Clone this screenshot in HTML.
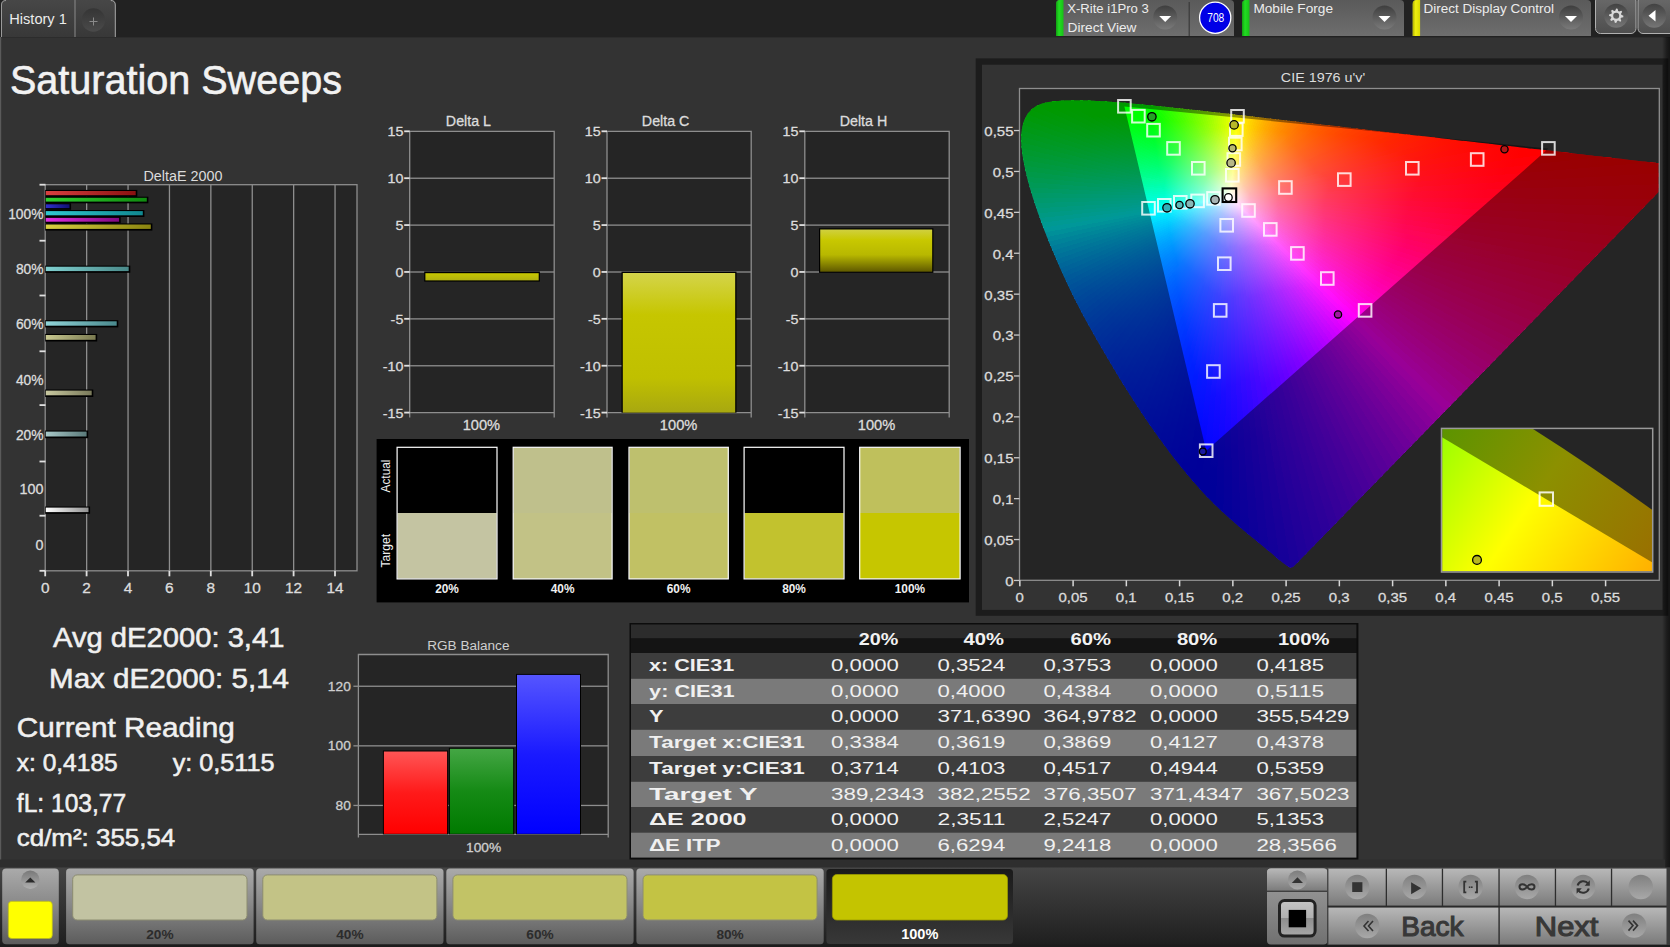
<!DOCTYPE html>
<html><head><meta charset="utf-8"><title>Saturation Sweeps</title>
<style>html,body{margin:0;padding:0;width:1670px;height:947px;overflow:hidden;background:#333;font-family:"Liberation Sans",sans-serif}</style>
</head><body>
<svg width="1670" height="947" viewBox="0 0 1670 947" style="position:absolute;left:0;top:0;font-family:'Liberation Sans',sans-serif">
<rect x="0" y="0" width="1670" height="947" fill="#333333"/>
<rect x="0" y="0" width="1670" height="37" fill="#222222"/>
<defs>
<linearGradient id="tabg" x1="0" y1="0" x2="0" y2="1"><stop offset="0" stop-color="#474747"/><stop offset="1" stop-color="#383838"/></linearGradient>
<linearGradient id="pillg" x1="0" y1="0" x2="0" y2="1"><stop offset="0" stop-color="#5a5a5a"/><stop offset="1" stop-color="#6e6e6e"/></linearGradient>
<linearGradient id="ddg" x1="0" y1="0" x2="0" y2="1"><stop offset="0" stop-color="#3e3e3e"/><stop offset="1" stop-color="#7a7a7a"/></linearGradient>
<linearGradient id="plusg" x1="0" y1="0" x2="0" y2="1"><stop offset="0" stop-color="#353535"/><stop offset="1" stop-color="#4a4a4a"/></linearGradient>
<linearGradient id="grbar" x1="0" y1="0" x2="1" y2="0"><stop offset="0" stop-color="#12a012"/><stop offset=".4" stop-color="#22dd22"/><stop offset="1" stop-color="#18c018"/></linearGradient>
<linearGradient id="yebar" x1="0" y1="0" x2="1" y2="0"><stop offset="0" stop-color="#b0b000"/><stop offset=".4" stop-color="#f0f010"/><stop offset="1" stop-color="#d8d800"/></linearGradient>
<linearGradient id="btng" x1="0" y1="0" x2="0" y2="1"><stop offset="0" stop-color="#6a6a6a"/><stop offset="1" stop-color="#4e4e4e"/></linearGradient>
</defs>
<path d="M1,37 V5 Q1,0 6,0 H75 V37 Z" fill="url(#tabg)"/>
<path d="M75,37 V0 H110.5 Q115.5,0 115.5,5 V37 Z" fill="url(#tabg)"/>
<path d="M1.5,37 V5 Q1.5,0.5 6,0.5" fill="none" stroke="#9a9a9a" stroke-width="1"/>
<line x1="75" y1="0" x2="75" y2="37" stroke="#8a8a8a" stroke-width="1"/>
<path d="M115.3,37 V5 Q115.3,0.5 110.8,0.5" fill="none" stroke="#a8a8a8" stroke-width="1"/>
<text x="9.30" y="23.70" font-size="14.10" textLength="57.51" lengthAdjust="spacingAndGlyphs" fill="#ececec" style="">History 1</text>
<circle cx="93.4" cy="20" r="11.7" fill="url(#plusg)"/>
<path d="M89.5,21.5 H97.5 M93.5,17.5 V25.5" stroke="#8a8a8a" stroke-width="1"/>
<rect x="0" y="37" width="1670" height="1" fill="#2c2c2c"/>
<rect x="0" y="37" width="1.2" height="831" fill="#5a5a5a"/>
<path d="M1056,36 V4 Q1056,0 1060,0 H1230 Q1234,0 1234,4 V36 Z" fill="url(#pillg)"/>
<path d="M1056,36 V4 Q1056,0 1060,0 H1063.5 V36 Z" fill="url(#grbar)"/>
<rect x="1188.6" y="2" width="1.2" height="34" fill="#3a3a3a"/>
<text x="1067.20" y="12.60" font-size="12.21" textLength="81.60" lengthAdjust="spacingAndGlyphs" fill="#ececec" style="">X-Rite i1Pro 3</text>
<text x="1067.60" y="31.70" font-size="12.21" textLength="68.88" lengthAdjust="spacingAndGlyphs" fill="#ececec" style="">Direct View</text>
<circle cx="1165.2" cy="17.4" r="12" fill="url(#ddg)"/>
<path d="M1159.2,15.899999999999999 H1171.2 L1165.2,21.9 Z" fill="#ffffff"/>
<circle cx="1215.2" cy="17.7" r="15.6" fill="#0000e6" stroke="#ffffff" stroke-width="1.3"/>
<text x="1207.20" y="22.00" font-size="11.92" textLength="17.08" lengthAdjust="spacingAndGlyphs" fill="#ffffff" style="">708</text>
<path d="M1242,36 V4 Q1242,0 1246,0 H1400 Q1404,0 1404,4 V36 Z" fill="url(#pillg)"/>
<path d="M1242,36 V4 Q1242,0 1246,0 H1249.5 V36 Z" fill="url(#grbar)"/>
<text x="1253.40" y="12.60" font-size="12.21" textLength="79.62" lengthAdjust="spacingAndGlyphs" fill="#ececec" style="">Mobile Forge</text>
<circle cx="1384.5" cy="17.4" r="12" fill="url(#ddg)"/>
<path d="M1378.5,15.899999999999999 H1390.5 L1384.5,21.9 Z" fill="#ffffff"/>
<path d="M1412.6,36 V4 Q1412.6,0 1416.6,0 H1587 Q1591,0 1591,4 V36 Z" fill="url(#pillg)"/>
<path d="M1412.6,36 V4 Q1412.6,0 1416.6,0 H1420.1 V36 Z" fill="url(#yebar)"/>
<text x="1423.50" y="12.60" font-size="12.21" textLength="130.50" lengthAdjust="spacingAndGlyphs" fill="#ececec" style="">Direct Display Control</text>
<circle cx="1571" cy="17.4" r="12" fill="url(#ddg)"/>
<path d="M1565,15.899999999999999 H1577 L1571,21.9 Z" fill="#ffffff"/>
<rect x="1595.5" y="-4" width="40.5" height="37.5" rx="5" fill="url(#btng)" stroke="#b0b0b0" stroke-width="1"/>
<circle cx="1616.2" cy="15.8" r="12" fill="url(#ddg)" opacity=".9"/>
<path d="M1623.40,15.80 L1623.26,17.20 L1621.00,17.79 L1620.52,18.69 L1621.29,20.89 L1620.20,21.79 L1618.19,20.60 L1617.21,20.90 L1616.20,23.00 L1614.80,22.86 L1614.21,20.60 L1613.31,20.12 L1611.11,20.89 L1610.21,19.80 L1611.40,17.79 L1611.10,16.81 L1609.00,15.80 L1609.14,14.40 L1611.40,13.81 L1611.88,12.91 L1611.11,10.71 L1612.20,9.81 L1614.21,11.00 L1615.19,10.70 L1616.20,8.60 L1617.60,8.74 L1618.19,11.00 L1619.09,11.48 L1621.29,10.71 L1622.19,11.80 L1621.00,13.81 L1621.30,14.79 Z M1619.2,15.8 A3,3 0 1 0 1613.2,15.8 A3,3 0 1 0 1619.2,15.8 Z" fill="#d8d8d8" fill-rule="evenodd"/>
<rect x="1638" y="-4" width="40" height="37.5" rx="5" fill="url(#btng)" stroke="#b0b0b0" stroke-width="1"/>
<circle cx="1654.2" cy="15.8" r="12" fill="url(#ddg)" opacity=".9"/>
<path d="M1648.5,15.8 L1655.5,10 V21.6 Z" fill="#ffffff"/>
<text x="9.90" y="93.80" font-size="40.70" textLength="332.07" lengthAdjust="spacingAndGlyphs" fill="#f2f2f2" style="" stroke="#f2f2f2" stroke-width="0.6">Saturation Sweeps</text>
<rect x="45.2" y="184.7" width="311.8" height="386.09999999999997" fill="#252525"/>
<rect x="86.00" y="184.7" width="1.3" height="386.09999999999997" fill="#8e8e8e"/>
<rect x="127.40" y="184.7" width="1.3" height="386.09999999999997" fill="#8e8e8e"/>
<rect x="168.80" y="184.7" width="1.3" height="386.09999999999997" fill="#8e8e8e"/>
<rect x="210.20" y="184.7" width="1.3" height="386.09999999999997" fill="#8e8e8e"/>
<rect x="251.60" y="184.7" width="1.3" height="386.09999999999997" fill="#8e8e8e"/>
<rect x="293.00" y="184.7" width="1.3" height="386.09999999999997" fill="#8e8e8e"/>
<rect x="334.40" y="184.7" width="1.3" height="386.09999999999997" fill="#8e8e8e"/>
<rect x="45.20" y="184.70" width="311.80" height="386.10" fill="none" stroke="#8e8e8e" stroke-width="1.3"/>
<rect x="39.5" y="183.80" width="6" height="1.8" fill="#e0e0e0"/>
<rect x="39.5" y="239.80" width="6" height="1.8" fill="#e0e0e0"/>
<rect x="39.5" y="294.60" width="6" height="1.8" fill="#e0e0e0"/>
<rect x="39.5" y="350.40" width="6" height="1.8" fill="#e0e0e0"/>
<rect x="39.5" y="404.20" width="6" height="1.8" fill="#e0e0e0"/>
<rect x="39.5" y="460.60" width="6" height="1.8" fill="#e0e0e0"/>
<rect x="39.5" y="514.80" width="6" height="1.8" fill="#e0e0e0"/>
<rect x="39.5" y="569.90" width="6" height="1.8" fill="#e0e0e0"/>
<rect x="44.30" y="570.8" width="1.8" height="5.5" fill="#e0e0e0"/>
<rect x="85.70" y="570.8" width="1.8" height="5.5" fill="#e0e0e0"/>
<rect x="127.10" y="570.8" width="1.8" height="5.5" fill="#e0e0e0"/>
<rect x="168.50" y="570.8" width="1.8" height="5.5" fill="#e0e0e0"/>
<rect x="209.90" y="570.8" width="1.8" height="5.5" fill="#e0e0e0"/>
<rect x="251.30" y="570.8" width="1.8" height="5.5" fill="#e0e0e0"/>
<rect x="292.70" y="570.8" width="1.8" height="5.5" fill="#e0e0e0"/>
<rect x="334.10" y="570.8" width="1.8" height="5.5" fill="#e0e0e0"/>
<text x="143.50" y="180.50" font-size="13.95" textLength="78.99" lengthAdjust="spacingAndGlyphs" fill="#dcdcdc" style="">DeltaE 2000</text>
<text x="8.15" y="219.00" font-size="14.53" textLength="35.32" lengthAdjust="spacingAndGlyphs" fill="#dcdcdc" style="" stroke="#dcdcdc" stroke-width="0.3">100%</text>
<text x="15.88" y="273.50" font-size="14.53" textLength="27.64" lengthAdjust="spacingAndGlyphs" fill="#dcdcdc" style="" stroke="#dcdcdc" stroke-width="0.3">80%</text>
<text x="15.88" y="329.30" font-size="14.53" textLength="27.64" lengthAdjust="spacingAndGlyphs" fill="#dcdcdc" style="" stroke="#dcdcdc" stroke-width="0.3">60%</text>
<text x="15.88" y="384.50" font-size="14.53" textLength="27.64" lengthAdjust="spacingAndGlyphs" fill="#dcdcdc" style="" stroke="#dcdcdc" stroke-width="0.3">40%</text>
<text x="15.88" y="439.60" font-size="14.53" textLength="27.64" lengthAdjust="spacingAndGlyphs" fill="#dcdcdc" style="" stroke="#dcdcdc" stroke-width="0.3">20%</text>
<text x="19.47" y="493.70" font-size="14.53" textLength="24.01" lengthAdjust="spacingAndGlyphs" fill="#dcdcdc" style="" stroke="#dcdcdc" stroke-width="0.3">100</text>
<text x="35.51" y="549.80" font-size="14.53" textLength="8.00" lengthAdjust="spacingAndGlyphs" fill="#dcdcdc" style="" stroke="#dcdcdc" stroke-width="0.3">0</text>
<text x="40.92" y="593.20" font-size="14.53" textLength="8.57" lengthAdjust="spacingAndGlyphs" fill="#dcdcdc" style="" stroke="#dcdcdc" stroke-width="0.3">0</text>
<text x="82.32" y="593.20" font-size="14.53" textLength="8.57" lengthAdjust="spacingAndGlyphs" fill="#dcdcdc" style="" stroke="#dcdcdc" stroke-width="0.3">2</text>
<text x="123.72" y="593.20" font-size="14.53" textLength="8.57" lengthAdjust="spacingAndGlyphs" fill="#dcdcdc" style="" stroke="#dcdcdc" stroke-width="0.3">4</text>
<text x="165.12" y="593.20" font-size="14.53" textLength="8.57" lengthAdjust="spacingAndGlyphs" fill="#dcdcdc" style="" stroke="#dcdcdc" stroke-width="0.3">6</text>
<text x="206.52" y="593.20" font-size="14.53" textLength="8.57" lengthAdjust="spacingAndGlyphs" fill="#dcdcdc" style="" stroke="#dcdcdc" stroke-width="0.3">8</text>
<text x="243.65" y="593.20" font-size="14.53" textLength="17.14" lengthAdjust="spacingAndGlyphs" fill="#dcdcdc" style="" stroke="#dcdcdc" stroke-width="0.3">10</text>
<text x="285.05" y="593.20" font-size="14.53" textLength="17.14" lengthAdjust="spacingAndGlyphs" fill="#dcdcdc" style="" stroke="#dcdcdc" stroke-width="0.3">12</text>
<text x="326.45" y="593.20" font-size="14.53" textLength="17.14" lengthAdjust="spacingAndGlyphs" fill="#dcdcdc" style="" stroke="#dcdcdc" stroke-width="0.3">14</text>
<defs><linearGradient id="hb1907" x1="0" y1="0" x2="1" y2="0"><stop offset="0" stop-color="#d84040"/><stop offset="1" stop-color="#8a1010"/></linearGradient></defs>
<rect x="45.20" y="189.90" width="92.10" height="7.00" fill="#000"/>
<rect x="45.80" y="191.00" width="89.90" height="4.20" fill="url(#hb1907)"/>
<defs><linearGradient id="hb1975" x1="0" y1="0" x2="1" y2="0"><stop offset="0" stop-color="#30d030"/><stop offset="1" stop-color="#108a10"/></linearGradient></defs>
<rect x="45.20" y="196.70" width="103.20" height="6.60" fill="#000"/>
<rect x="45.80" y="197.80" width="101.00" height="3.80" fill="url(#hb1975)"/>
<defs><linearGradient id="hb2040" x1="0" y1="0" x2="1" y2="0"><stop offset="0" stop-color="#3030d0"/><stop offset="1" stop-color="#101070"/></linearGradient></defs>
<rect x="45.20" y="203.20" width="25.90" height="6.60" fill="#000"/>
<rect x="45.80" y="204.30" width="23.70" height="3.80" fill="url(#hb2040)"/>
<defs><linearGradient id="hb2108" x1="0" y1="0" x2="1" y2="0"><stop offset="0" stop-color="#30c8d0"/><stop offset="1" stop-color="#108890"/></linearGradient></defs>
<rect x="45.20" y="210.00" width="99.20" height="7.00" fill="#000"/>
<rect x="45.80" y="211.10" width="97.00" height="4.20" fill="url(#hb2108)"/>
<defs><linearGradient id="hb2176" x1="0" y1="0" x2="1" y2="0"><stop offset="0" stop-color="#e030e0"/><stop offset="1" stop-color="#800a80"/></linearGradient></defs>
<rect x="45.20" y="216.80" width="75.50" height="6.60" fill="#000"/>
<rect x="45.80" y="217.90" width="73.30" height="3.80" fill="url(#hb2176)"/>
<defs><linearGradient id="hb2242" x1="0" y1="0" x2="1" y2="0"><stop offset="0" stop-color="#d8d040"/><stop offset="1" stop-color="#8a8410"/></linearGradient></defs>
<rect x="45.20" y="223.40" width="107.20" height="7.20" fill="#000"/>
<rect x="45.80" y="224.50" width="105.00" height="4.40" fill="url(#hb2242)"/>
<defs><linearGradient id="hb2664" x1="0" y1="0" x2="1" y2="0"><stop offset="0" stop-color="#80d0d0"/><stop offset="1" stop-color="#4a8a8a"/></linearGradient></defs>
<rect x="45.20" y="265.60" width="85.10" height="7.20" fill="#000"/>
<rect x="45.80" y="266.70" width="82.90" height="4.40" fill="url(#hb2664)"/>
<defs><linearGradient id="hb3210" x1="0" y1="0" x2="1" y2="0"><stop offset="0" stop-color="#90d4d8"/><stop offset="1" stop-color="#4a8a8e"/></linearGradient></defs>
<rect x="45.20" y="320.20" width="73.10" height="7.20" fill="#000"/>
<rect x="45.80" y="321.30" width="70.90" height="4.40" fill="url(#hb3210)"/>
<defs><linearGradient id="hb3347" x1="0" y1="0" x2="1" y2="0"><stop offset="0" stop-color="#c8c890"/><stop offset="1" stop-color="#7a7a50"/></linearGradient></defs>
<rect x="45.20" y="333.90" width="52.00" height="7.60" fill="#000"/>
<rect x="45.80" y="335.00" width="49.80" height="4.80" fill="url(#hb3347)"/>
<defs><linearGradient id="hb3903" x1="0" y1="0" x2="1" y2="0"><stop offset="0" stop-color="#c8c8a0"/><stop offset="1" stop-color="#7a7a5a"/></linearGradient></defs>
<rect x="45.20" y="389.50" width="48.10" height="7.50" fill="#000"/>
<rect x="45.80" y="390.60" width="45.90" height="4.70" fill="url(#hb3903)"/>
<defs><linearGradient id="hb4313" x1="0" y1="0" x2="1" y2="0"><stop offset="0" stop-color="#a8c8c8"/><stop offset="1" stop-color="#5a7a7a"/></linearGradient></defs>
<rect x="45.20" y="430.50" width="43.00" height="7.70" fill="#000"/>
<rect x="45.80" y="431.60" width="40.80" height="4.90" fill="url(#hb4313)"/>
<defs><linearGradient id="hb5073" x1="0" y1="0" x2="1" y2="0"><stop offset="0" stop-color="#ffffff"/><stop offset="1" stop-color="#909090"/></linearGradient></defs>
<rect x="45.20" y="506.50" width="44.90" height="7.30" fill="#000"/>
<rect x="45.80" y="507.60" width="42.70" height="4.50" fill="url(#hb5073)"/>
<text x="53.00" y="647.30" font-size="28.20" textLength="231.44" lengthAdjust="spacingAndGlyphs" fill="#f0f0f0" style="" stroke="#f0f0f0" stroke-width="0.55">Avg dE2000: 3,41</text>
<text x="49.00" y="688.20" font-size="28.20" textLength="240.06" lengthAdjust="spacingAndGlyphs" fill="#f0f0f0" style="" stroke="#f0f0f0" stroke-width="0.55">Max dE2000: 5,14</text>
<text x="16.80" y="736.50" font-size="28.34" textLength="217.93" lengthAdjust="spacingAndGlyphs" fill="#f0f0f0" style="" stroke="#f0f0f0" stroke-width="0.55">Current Reading</text>
<text x="16.80" y="771.00" font-size="23.84" textLength="100.88" lengthAdjust="spacingAndGlyphs" fill="#f0f0f0" style="" stroke="#f0f0f0" stroke-width="0.55">x: 0,4185</text>
<text x="172.70" y="771.00" font-size="23.84" textLength="101.90" lengthAdjust="spacingAndGlyphs" fill="#f0f0f0" style="" stroke="#f0f0f0" stroke-width="0.55">y: 0,5115</text>
<text x="16.80" y="812.30" font-size="25.00" textLength="109.36" lengthAdjust="spacingAndGlyphs" fill="#f0f0f0" style="" stroke="#f0f0f0" stroke-width="0.55">fL: 103,77</text>
<text x="16.80" y="846.00" font-size="24.13" textLength="158.48" lengthAdjust="spacingAndGlyphs" fill="#f0f0f0" style="" stroke="#f0f0f0" stroke-width="0.55">cd/m²: 355,54</text>
<rect x="358.4" y="654.5" width="249.80" height="179.90" fill="#252525"/>
<rect x="358.4" y="685.60" width="249.80" height="1.3" fill="#8e8e8e"/>
<rect x="358.4" y="745.20" width="249.80" height="1.3" fill="#8e8e8e"/>
<rect x="358.4" y="804.80" width="249.80" height="1.3" fill="#8e8e8e"/>
<path d="M358.4,837.4 V654.5 H608.2 V837.4 M358.4,834.4 H608.2" fill="none" stroke="#8e8e8e" stroke-width="1.3"/>
<rect x="353.4" y="685.60" width="5" height="1.3" fill="#8e8e8e"/>
<rect x="353.4" y="745.20" width="5" height="1.3" fill="#8e8e8e"/>
<rect x="353.4" y="804.80" width="5" height="1.3" fill="#8e8e8e"/>
<text x="427.20" y="649.50" font-size="13.08" textLength="82.28" lengthAdjust="spacingAndGlyphs" fill="#cfcfcf" style="">RGB Balance</text>
<text x="327.86" y="690.70" font-size="13.08" textLength="22.92" lengthAdjust="spacingAndGlyphs" fill="#cfcfcf" style="" stroke="#cfcfcf" stroke-width="0.3">120</text>
<text x="327.86" y="750.30" font-size="13.08" textLength="22.92" lengthAdjust="spacingAndGlyphs" fill="#cfcfcf" style="" stroke="#cfcfcf" stroke-width="0.3">100</text>
<text x="335.55" y="809.90" font-size="13.08" textLength="15.28" lengthAdjust="spacingAndGlyphs" fill="#cfcfcf" style="" stroke="#cfcfcf" stroke-width="0.3">80</text>
<text x="466.02" y="851.50" font-size="13.08" textLength="35.13" lengthAdjust="spacingAndGlyphs" fill="#cfcfcf" style="" stroke="#cfcfcf" stroke-width="0.3">100%</text>
<defs>
<linearGradient id="rbr" x1="0" y1="0" x2="0" y2="1"><stop offset="0" stop-color="#ff5555"/><stop offset=".5" stop-color="#ff1a1a"/><stop offset="1" stop-color="#ff0000"/></linearGradient>
<linearGradient id="rbg" x1="0" y1="0" x2="0" y2="1"><stop offset="0" stop-color="#44a644"/><stop offset=".5" stop-color="#158a15"/><stop offset="1" stop-color="#007a00"/></linearGradient>
<linearGradient id="rbb" x1="0" y1="0" x2="0" y2="1"><stop offset="0" stop-color="#5555ff"/><stop offset=".5" stop-color="#1a1aff"/><stop offset="1" stop-color="#0000ff"/></linearGradient>
</defs>
<rect x="382.90" y="750.50" width="65.20" height="83.90" fill="#000"/>
<rect x="383.90" y="751.50" width="63.20" height="82.30" fill="url(#rbr)"/>
<rect x="448.90" y="747.80" width="65.30" height="86.60" fill="#000"/>
<rect x="449.90" y="748.80" width="63.30" height="85.00" fill="url(#rbg)"/>
<rect x="516.00" y="673.90" width="65.00" height="160.50" fill="#000"/>
<rect x="517.00" y="674.90" width="63.00" height="158.90" fill="url(#rbb)"/>
<defs>
<linearGradient id="dlg" x1="0" y1="0" x2="0" y2="1"><stop offset="0" stop-color="#d4d44a"/><stop offset=".3" stop-color="#c6c600"/><stop offset=".75" stop-color="#c0c000"/><stop offset="1" stop-color="#a8a810"/></linearGradient>
<linearGradient id="dhg" x1="0" y1="0" x2="0" y2="1"><stop offset="0" stop-color="#d0d040"/><stop offset=".25" stop-color="#c8c800"/><stop offset=".6" stop-color="#b8b800"/><stop offset="1" stop-color="#605a00"/></linearGradient>
<linearGradient id="dLg" x1="0" y1="0" x2="0" y2="1"><stop offset="0" stop-color="#c8c800"/><stop offset="1" stop-color="#b0b010"/></linearGradient>
</defs>
<rect x="409.7" y="131.3" width="144.50" height="281.30" fill="#252525"/>
<rect x="409.7" y="177.58" width="144.50" height="1.3" fill="#8e8e8e"/>
<rect x="409.7" y="224.47" width="144.50" height="1.3" fill="#8e8e8e"/>
<rect x="409.7" y="271.35" width="144.50" height="1.3" fill="#8e8e8e"/>
<rect x="409.7" y="318.23" width="144.50" height="1.3" fill="#8e8e8e"/>
<rect x="409.7" y="365.12" width="144.50" height="1.3" fill="#8e8e8e"/>
<path d="M409.7,417.6 V131.3 H554.2 V417.6 M409.7,412.6 H554.2" fill="none" stroke="#8e8e8e" stroke-width="1.3"/>
<rect x="404.20" y="130.40" width="5.5" height="1.8" fill="#e0e0e0"/>
<text x="387.48" y="136.20" font-size="13.66" textLength="15.96" lengthAdjust="spacingAndGlyphs" fill="#dcdcdc" style="" stroke="#dcdcdc" stroke-width="0.3">15</text>
<rect x="404.20" y="177.28" width="5.5" height="1.8" fill="#e0e0e0"/>
<text x="387.48" y="183.08" font-size="13.66" textLength="15.96" lengthAdjust="spacingAndGlyphs" fill="#dcdcdc" style="" stroke="#dcdcdc" stroke-width="0.3">10</text>
<rect x="404.20" y="224.17" width="5.5" height="1.8" fill="#e0e0e0"/>
<text x="395.44" y="229.97" font-size="13.66" textLength="7.98" lengthAdjust="spacingAndGlyphs" fill="#dcdcdc" style="" stroke="#dcdcdc" stroke-width="0.3">5</text>
<rect x="404.20" y="271.05" width="5.5" height="1.8" fill="#e0e0e0"/>
<text x="395.44" y="276.85" font-size="13.66" textLength="7.98" lengthAdjust="spacingAndGlyphs" fill="#dcdcdc" style="" stroke="#dcdcdc" stroke-width="0.3">0</text>
<rect x="404.20" y="317.93" width="5.5" height="1.8" fill="#e0e0e0"/>
<text x="390.63" y="323.73" font-size="13.66" textLength="12.76" lengthAdjust="spacingAndGlyphs" fill="#dcdcdc" style="" stroke="#dcdcdc" stroke-width="0.3">-5</text>
<rect x="404.20" y="364.82" width="5.5" height="1.8" fill="#e0e0e0"/>
<text x="382.67" y="370.62" font-size="13.66" textLength="20.74" lengthAdjust="spacingAndGlyphs" fill="#dcdcdc" style="" stroke="#dcdcdc" stroke-width="0.3">-10</text>
<rect x="404.20" y="411.70" width="5.5" height="1.8" fill="#e0e0e0"/>
<text x="382.67" y="417.50" font-size="13.66" textLength="20.74" lengthAdjust="spacingAndGlyphs" fill="#dcdcdc" style="" stroke="#dcdcdc" stroke-width="0.3">-15</text>
<text x="445.87" y="126.00" font-size="14.24" textLength="45.13" lengthAdjust="spacingAndGlyphs" fill="#dcdcdc" style="" stroke="#dcdcdc" stroke-width="0.3">Delta L</text>
<text x="462.70" y="429.80" font-size="13.95" textLength="37.47" lengthAdjust="spacingAndGlyphs" fill="#dcdcdc" style="" stroke="#dcdcdc" stroke-width="0.3">100%</text>
<rect x="607.0" y="131.3" width="144.20" height="281.30" fill="#252525"/>
<rect x="607.0" y="177.58" width="144.20" height="1.3" fill="#8e8e8e"/>
<rect x="607.0" y="224.47" width="144.20" height="1.3" fill="#8e8e8e"/>
<rect x="607.0" y="271.35" width="144.20" height="1.3" fill="#8e8e8e"/>
<rect x="607.0" y="318.23" width="144.20" height="1.3" fill="#8e8e8e"/>
<rect x="607.0" y="365.12" width="144.20" height="1.3" fill="#8e8e8e"/>
<path d="M607.0,417.6 V131.3 H751.2 V417.6 M607.0,412.6 H751.2" fill="none" stroke="#8e8e8e" stroke-width="1.3"/>
<rect x="601.50" y="130.40" width="5.5" height="1.8" fill="#e0e0e0"/>
<text x="584.78" y="136.20" font-size="13.66" textLength="15.96" lengthAdjust="spacingAndGlyphs" fill="#dcdcdc" style="" stroke="#dcdcdc" stroke-width="0.3">15</text>
<rect x="601.50" y="177.28" width="5.5" height="1.8" fill="#e0e0e0"/>
<text x="584.78" y="183.08" font-size="13.66" textLength="15.96" lengthAdjust="spacingAndGlyphs" fill="#dcdcdc" style="" stroke="#dcdcdc" stroke-width="0.3">10</text>
<rect x="601.50" y="224.17" width="5.5" height="1.8" fill="#e0e0e0"/>
<text x="592.74" y="229.97" font-size="13.66" textLength="7.98" lengthAdjust="spacingAndGlyphs" fill="#dcdcdc" style="" stroke="#dcdcdc" stroke-width="0.3">5</text>
<rect x="601.50" y="271.05" width="5.5" height="1.8" fill="#e0e0e0"/>
<text x="592.74" y="276.85" font-size="13.66" textLength="7.98" lengthAdjust="spacingAndGlyphs" fill="#dcdcdc" style="" stroke="#dcdcdc" stroke-width="0.3">0</text>
<rect x="601.50" y="317.93" width="5.5" height="1.8" fill="#e0e0e0"/>
<text x="587.93" y="323.73" font-size="13.66" textLength="12.76" lengthAdjust="spacingAndGlyphs" fill="#dcdcdc" style="" stroke="#dcdcdc" stroke-width="0.3">-5</text>
<rect x="601.50" y="364.82" width="5.5" height="1.8" fill="#e0e0e0"/>
<text x="579.97" y="370.62" font-size="13.66" textLength="20.74" lengthAdjust="spacingAndGlyphs" fill="#dcdcdc" style="" stroke="#dcdcdc" stroke-width="0.3">-10</text>
<rect x="601.50" y="411.70" width="5.5" height="1.8" fill="#e0e0e0"/>
<text x="579.97" y="417.50" font-size="13.66" textLength="20.74" lengthAdjust="spacingAndGlyphs" fill="#dcdcdc" style="" stroke="#dcdcdc" stroke-width="0.3">-15</text>
<text x="641.85" y="126.00" font-size="14.24" textLength="47.50" lengthAdjust="spacingAndGlyphs" fill="#dcdcdc" style="" stroke="#dcdcdc" stroke-width="0.3">Delta C</text>
<text x="659.85" y="429.80" font-size="13.95" textLength="37.47" lengthAdjust="spacingAndGlyphs" fill="#dcdcdc" style="" stroke="#dcdcdc" stroke-width="0.3">100%</text>
<rect x="804.8" y="131.3" width="144.40" height="281.30" fill="#252525"/>
<rect x="804.8" y="177.58" width="144.40" height="1.3" fill="#8e8e8e"/>
<rect x="804.8" y="224.47" width="144.40" height="1.3" fill="#8e8e8e"/>
<rect x="804.8" y="271.35" width="144.40" height="1.3" fill="#8e8e8e"/>
<rect x="804.8" y="318.23" width="144.40" height="1.3" fill="#8e8e8e"/>
<rect x="804.8" y="365.12" width="144.40" height="1.3" fill="#8e8e8e"/>
<path d="M804.8,417.6 V131.3 H949.2 V417.6 M804.8,412.6 H949.2" fill="none" stroke="#8e8e8e" stroke-width="1.3"/>
<rect x="799.30" y="130.40" width="5.5" height="1.8" fill="#e0e0e0"/>
<text x="782.58" y="136.20" font-size="13.66" textLength="15.96" lengthAdjust="spacingAndGlyphs" fill="#dcdcdc" style="" stroke="#dcdcdc" stroke-width="0.3">15</text>
<rect x="799.30" y="177.28" width="5.5" height="1.8" fill="#e0e0e0"/>
<text x="782.58" y="183.08" font-size="13.66" textLength="15.96" lengthAdjust="spacingAndGlyphs" fill="#dcdcdc" style="" stroke="#dcdcdc" stroke-width="0.3">10</text>
<rect x="799.30" y="224.17" width="5.5" height="1.8" fill="#e0e0e0"/>
<text x="790.54" y="229.97" font-size="13.66" textLength="7.98" lengthAdjust="spacingAndGlyphs" fill="#dcdcdc" style="" stroke="#dcdcdc" stroke-width="0.3">5</text>
<rect x="799.30" y="271.05" width="5.5" height="1.8" fill="#e0e0e0"/>
<text x="790.54" y="276.85" font-size="13.66" textLength="7.98" lengthAdjust="spacingAndGlyphs" fill="#dcdcdc" style="" stroke="#dcdcdc" stroke-width="0.3">0</text>
<rect x="799.30" y="317.93" width="5.5" height="1.8" fill="#e0e0e0"/>
<text x="785.73" y="323.73" font-size="13.66" textLength="12.76" lengthAdjust="spacingAndGlyphs" fill="#dcdcdc" style="" stroke="#dcdcdc" stroke-width="0.3">-5</text>
<rect x="799.30" y="364.82" width="5.5" height="1.8" fill="#e0e0e0"/>
<text x="777.77" y="370.62" font-size="13.66" textLength="20.74" lengthAdjust="spacingAndGlyphs" fill="#dcdcdc" style="" stroke="#dcdcdc" stroke-width="0.3">-10</text>
<rect x="799.30" y="411.70" width="5.5" height="1.8" fill="#e0e0e0"/>
<text x="777.77" y="417.50" font-size="13.66" textLength="20.74" lengthAdjust="spacingAndGlyphs" fill="#dcdcdc" style="" stroke="#dcdcdc" stroke-width="0.3">-15</text>
<text x="839.75" y="126.00" font-size="14.24" textLength="47.50" lengthAdjust="spacingAndGlyphs" fill="#dcdcdc" style="" stroke="#dcdcdc" stroke-width="0.3">Delta H</text>
<text x="857.75" y="429.80" font-size="13.95" textLength="37.47" lengthAdjust="spacingAndGlyphs" fill="#dcdcdc" style="" stroke="#dcdcdc" stroke-width="0.3">100%</text>
<rect x="424.2" y="271.5" width="115.7" height="10.1" fill="#000"/>
<rect x="425.4" y="273.2" width="113.3" height="7.2" fill="url(#dLg)"/>
<rect x="621.5" y="271.7" width="115" height="141" fill="#000"/>
<rect x="622.8" y="273.0" width="112.4" height="139.6" fill="url(#dlg)"/>
<rect x="819.0" y="228.3" width="114.4" height="44.6" fill="#000"/>
<rect x="820.2" y="229.5" width="112.0" height="42.2" fill="url(#dhg)"/>
<rect x="376.6" y="439" width="592.4" height="163.4" fill="#000"/>
<rect x="397.40" y="447.6" width="99.30" height="131" fill="#000000"/>
<rect x="397.40" y="513" width="99.30" height="65.6" fill="#c4c4a2"/>
<rect x="397.10" y="447.3" width="99.90" height="131.6" fill="none" stroke="#ffffff" stroke-width="1.2"/>
<text x="435.17" y="593.40" font-size="12.50" textLength="23.77" lengthAdjust="spacingAndGlyphs" fill="#f0f0f0" style="font-weight:bold;">20%</text>
<rect x="513.50" y="447.6" width="98.30" height="131" fill="#bfc08c"/>
<rect x="513.50" y="513" width="98.30" height="65.6" fill="#c2c286"/>
<rect x="513.20" y="447.3" width="98.90" height="131.6" fill="none" stroke="#ffffff" stroke-width="1.2"/>
<text x="550.77" y="593.40" font-size="12.50" textLength="23.77" lengthAdjust="spacingAndGlyphs" fill="#f0f0f0" style="font-weight:bold;">40%</text>
<rect x="629.30" y="447.6" width="98.70" height="131" fill="#bec06e"/>
<rect x="629.30" y="513" width="98.70" height="65.6" fill="#c1c164"/>
<rect x="629.00" y="447.3" width="99.30" height="131.6" fill="none" stroke="#ffffff" stroke-width="1.2"/>
<text x="666.77" y="593.40" font-size="12.50" textLength="23.77" lengthAdjust="spacingAndGlyphs" fill="#f0f0f0" style="font-weight:bold;">60%</text>
<rect x="744.40" y="447.6" width="99.30" height="131" fill="#000000"/>
<rect x="744.40" y="513" width="99.30" height="65.6" fill="#c2c22e"/>
<rect x="744.10" y="447.3" width="99.90" height="131.6" fill="none" stroke="#ffffff" stroke-width="1.2"/>
<text x="782.17" y="593.40" font-size="12.50" textLength="23.77" lengthAdjust="spacingAndGlyphs" fill="#f0f0f0" style="font-weight:bold;">80%</text>
<rect x="860.00" y="447.6" width="99.80" height="131" fill="#bfc05c"/>
<rect x="860.00" y="513" width="99.80" height="65.6" fill="#c6c600"/>
<rect x="859.70" y="447.3" width="100.40" height="131.6" fill="none" stroke="#ffffff" stroke-width="1.2"/>
<text x="894.70" y="593.40" font-size="12.50" textLength="30.37" lengthAdjust="spacingAndGlyphs" fill="#f0f0f0" style="font-weight:bold;">100%</text>
<g transform="translate(390,476) rotate(-90)">
<text x="-16.50" y="0.00" font-size="13.08" textLength="32.99" lengthAdjust="spacingAndGlyphs" fill="#f0f0f0" style="">Actual</text>
</g>
<g transform="translate(390,550.5) rotate(-90)">
<text x="-17.00" y="0.00" font-size="13.08" textLength="33.49" lengthAdjust="spacingAndGlyphs" fill="#f0f0f0" style="">Target</text>
</g>
<rect x="629.5" y="623" width="728.9" height="237" fill="#0c0c0c"/>
<rect x="631.0" y="624.5" width="725.4" height="14" fill="#2c2c2c"/>
<rect x="631.0" y="638.5" width="725.4" height="14.5" fill="#141414"/>
<rect x="631.0" y="653.0" width="725.4" height="25.6" fill="#3d3d3d"/>
<rect x="631.0" y="678.6" width="725.4" height="25.4" fill="#7a7a7a"/>
<rect x="631.0" y="704.0" width="725.4" height="25.6" fill="#3d3d3d"/>
<rect x="631.0" y="729.6" width="725.4" height="26.4" fill="#7a7a7a"/>
<rect x="631.0" y="756.0" width="725.4" height="25.6" fill="#3d3d3d"/>
<rect x="631.0" y="781.6" width="725.4" height="25.4" fill="#7a7a7a"/>
<rect x="631.0" y="807.0" width="725.4" height="25.5" fill="#3d3d3d"/>
<rect x="631.0" y="832.5" width="725.4" height="25.1" fill="#7a7a7a"/>
<text x="858.70" y="644.60" font-size="15.70" textLength="39.53" lengthAdjust="spacingAndGlyphs" fill="#f2f2f2" style="font-weight:bold;">20%</text>
<text x="963.60" y="644.60" font-size="15.70" textLength="40.43" lengthAdjust="spacingAndGlyphs" fill="#f2f2f2" style="font-weight:bold;">40%</text>
<text x="1070.40" y="644.60" font-size="15.70" textLength="40.53" lengthAdjust="spacingAndGlyphs" fill="#f2f2f2" style="font-weight:bold;">60%</text>
<text x="1176.90" y="644.60" font-size="15.70" textLength="40.43" lengthAdjust="spacingAndGlyphs" fill="#f2f2f2" style="font-weight:bold;">80%</text>
<text x="1277.90" y="644.60" font-size="15.70" textLength="51.65" lengthAdjust="spacingAndGlyphs" fill="#f2f2f2" style="font-weight:bold;">100%</text>
<text x="649.10" y="671.40" font-size="16.42" textLength="85.03" lengthAdjust="spacingAndGlyphs" fill="#f0f0f0" style="font-weight:bold;">x: CIE31</text>
<text x="831.10" y="671.40" font-size="16.42" textLength="67.77" lengthAdjust="spacingAndGlyphs" fill="#f0f0f0" style="">0,0000</text>
<text x="937.50" y="671.40" font-size="16.42" textLength="67.77" lengthAdjust="spacingAndGlyphs" fill="#f0f0f0" style="">0,3524</text>
<text x="1043.50" y="671.40" font-size="16.42" textLength="67.77" lengthAdjust="spacingAndGlyphs" fill="#f0f0f0" style="">0,3753</text>
<text x="1150.00" y="671.40" font-size="16.42" textLength="67.77" lengthAdjust="spacingAndGlyphs" fill="#f0f0f0" style="">0,0000</text>
<text x="1256.40" y="671.40" font-size="16.42" textLength="67.77" lengthAdjust="spacingAndGlyphs" fill="#f0f0f0" style="">0,4185</text>
<text x="649.10" y="696.90" font-size="16.42" textLength="85.53" lengthAdjust="spacingAndGlyphs" fill="#f0f0f0" style="font-weight:bold;">y: CIE31</text>
<text x="831.10" y="696.90" font-size="16.42" textLength="67.77" lengthAdjust="spacingAndGlyphs" fill="#f0f0f0" style="">0,0000</text>
<text x="937.50" y="696.90" font-size="16.42" textLength="67.77" lengthAdjust="spacingAndGlyphs" fill="#f0f0f0" style="">0,4000</text>
<text x="1043.50" y="696.90" font-size="16.42" textLength="67.77" lengthAdjust="spacingAndGlyphs" fill="#f0f0f0" style="">0,4384</text>
<text x="1150.00" y="696.90" font-size="16.42" textLength="67.77" lengthAdjust="spacingAndGlyphs" fill="#f0f0f0" style="">0,0000</text>
<text x="1256.40" y="696.90" font-size="16.42" textLength="67.79" lengthAdjust="spacingAndGlyphs" fill="#f0f0f0" style="">0,5115</text>
<text x="649.10" y="722.40" font-size="16.42" textLength="14.54" lengthAdjust="spacingAndGlyphs" fill="#f0f0f0" style="font-weight:bold;">Y</text>
<text x="831.10" y="722.40" font-size="16.42" textLength="67.77" lengthAdjust="spacingAndGlyphs" fill="#f0f0f0" style="">0,0000</text>
<text x="937.50" y="722.40" font-size="16.42" textLength="93.07" lengthAdjust="spacingAndGlyphs" fill="#f0f0f0" style="">371,6390</text>
<text x="1043.50" y="722.40" font-size="16.42" textLength="93.07" lengthAdjust="spacingAndGlyphs" fill="#f0f0f0" style="">364,9782</text>
<text x="1150.00" y="722.40" font-size="16.42" textLength="67.77" lengthAdjust="spacingAndGlyphs" fill="#f0f0f0" style="">0,0000</text>
<text x="1256.40" y="722.40" font-size="16.42" textLength="93.07" lengthAdjust="spacingAndGlyphs" fill="#f0f0f0" style="">355,5429</text>
<text x="649.10" y="748.40" font-size="16.42" textLength="155.76" lengthAdjust="spacingAndGlyphs" fill="#f0f0f0" style="font-weight:bold;">Target x:CIE31</text>
<text x="831.10" y="748.40" font-size="16.42" textLength="67.77" lengthAdjust="spacingAndGlyphs" fill="#f0f0f0" style="">0,3384</text>
<text x="937.50" y="748.40" font-size="16.42" textLength="67.77" lengthAdjust="spacingAndGlyphs" fill="#f0f0f0" style="">0,3619</text>
<text x="1043.50" y="748.40" font-size="16.42" textLength="67.77" lengthAdjust="spacingAndGlyphs" fill="#f0f0f0" style="">0,3869</text>
<text x="1150.00" y="748.40" font-size="16.42" textLength="67.77" lengthAdjust="spacingAndGlyphs" fill="#f0f0f0" style="">0,4127</text>
<text x="1256.40" y="748.40" font-size="16.42" textLength="67.77" lengthAdjust="spacingAndGlyphs" fill="#f0f0f0" style="">0,4378</text>
<text x="649.10" y="774.40" font-size="16.42" textLength="155.76" lengthAdjust="spacingAndGlyphs" fill="#f0f0f0" style="font-weight:bold;">Target y:CIE31</text>
<text x="831.10" y="774.40" font-size="16.42" textLength="67.77" lengthAdjust="spacingAndGlyphs" fill="#f0f0f0" style="">0,3714</text>
<text x="937.50" y="774.40" font-size="16.42" textLength="67.77" lengthAdjust="spacingAndGlyphs" fill="#f0f0f0" style="">0,4103</text>
<text x="1043.50" y="774.40" font-size="16.42" textLength="67.77" lengthAdjust="spacingAndGlyphs" fill="#f0f0f0" style="">0,4517</text>
<text x="1150.00" y="774.40" font-size="16.42" textLength="67.77" lengthAdjust="spacingAndGlyphs" fill="#f0f0f0" style="">0,4944</text>
<text x="1256.40" y="774.40" font-size="16.42" textLength="67.77" lengthAdjust="spacingAndGlyphs" fill="#f0f0f0" style="">0,5359</text>
<text x="649.10" y="799.90" font-size="16.42" textLength="108.47" lengthAdjust="spacingAndGlyphs" fill="#f0f0f0" style="font-weight:bold;">Target Y</text>
<text x="831.10" y="799.90" font-size="16.42" textLength="93.07" lengthAdjust="spacingAndGlyphs" fill="#f0f0f0" style="">389,2343</text>
<text x="937.50" y="799.90" font-size="16.42" textLength="93.07" lengthAdjust="spacingAndGlyphs" fill="#f0f0f0" style="">382,2552</text>
<text x="1043.50" y="799.90" font-size="16.42" textLength="93.07" lengthAdjust="spacingAndGlyphs" fill="#f0f0f0" style="">376,3507</text>
<text x="1150.00" y="799.90" font-size="16.42" textLength="93.07" lengthAdjust="spacingAndGlyphs" fill="#f0f0f0" style="">371,4347</text>
<text x="1256.40" y="799.90" font-size="16.42" textLength="93.07" lengthAdjust="spacingAndGlyphs" fill="#f0f0f0" style="">367,5023</text>
<text x="649.10" y="825.35" font-size="16.42" textLength="97.46" lengthAdjust="spacingAndGlyphs" fill="#f0f0f0" style="font-weight:bold;">ΔE 2000</text>
<text x="831.10" y="825.35" font-size="16.42" textLength="67.77" lengthAdjust="spacingAndGlyphs" fill="#f0f0f0" style="">0,0000</text>
<text x="937.50" y="825.35" font-size="16.42" textLength="67.79" lengthAdjust="spacingAndGlyphs" fill="#f0f0f0" style="">2,3511</text>
<text x="1043.50" y="825.35" font-size="16.42" textLength="67.77" lengthAdjust="spacingAndGlyphs" fill="#f0f0f0" style="">2,5247</text>
<text x="1150.00" y="825.35" font-size="16.42" textLength="67.77" lengthAdjust="spacingAndGlyphs" fill="#f0f0f0" style="">0,0000</text>
<text x="1256.40" y="825.35" font-size="16.42" textLength="67.77" lengthAdjust="spacingAndGlyphs" fill="#f0f0f0" style="">5,1353</text>
<text x="649.10" y="850.65" font-size="16.42" textLength="71.48" lengthAdjust="spacingAndGlyphs" fill="#f0f0f0" style="font-weight:bold;">ΔE ITP</text>
<text x="831.10" y="850.65" font-size="16.42" textLength="67.77" lengthAdjust="spacingAndGlyphs" fill="#f0f0f0" style="">0,0000</text>
<text x="937.50" y="850.65" font-size="16.42" textLength="67.77" lengthAdjust="spacingAndGlyphs" fill="#f0f0f0" style="">6,6294</text>
<text x="1043.50" y="850.65" font-size="16.42" textLength="67.77" lengthAdjust="spacingAndGlyphs" fill="#f0f0f0" style="">9,2418</text>
<text x="1150.00" y="850.65" font-size="16.42" textLength="67.77" lengthAdjust="spacingAndGlyphs" fill="#f0f0f0" style="">0,0000</text>
<text x="1256.40" y="850.65" font-size="16.42" textLength="80.42" lengthAdjust="spacingAndGlyphs" fill="#f0f0f0" style="">28,3566</text>
<rect x="975.7" y="58.4" width="692.6" height="557.4" fill="#1c1c1c"/>
<rect x="982" y="64.7" width="680.6" height="545.2" fill="#333333"/>
<text x="1280.80" y="82.40" font-size="13.37" textLength="84.41" lengthAdjust="spacingAndGlyphs" fill="#dcdcdc" style="">CIE 1976 u'v'</text>
<rect x="1019.5" y="88.5" width="639.8" height="491.8" fill="#252525"/>
<defs><clipPath id="locclip"><path d="M1293.30,566.83 L1293.28,566.82 L1293.25,566.82 L1293.22,566.81 L1293.19,566.81 L1293.15,566.81 L1293.12,566.83 L1293.08,566.86 L1293.05,566.91 L1293.01,566.96 L1292.97,567.02 L1292.93,567.06 L1292.88,567.09 L1292.83,567.11 L1292.78,567.10 L1292.72,567.10 L1292.66,567.09 L1292.59,567.08 L1292.53,567.10 L1292.47,567.13 L1292.40,567.18 L1292.34,567.23 L1292.27,567.29 L1292.20,567.33 L1292.12,567.37 L1292.04,567.38 L1291.96,567.39 L1291.87,567.38 L1291.78,567.38 L1291.69,567.37 L1291.59,567.37 L1291.48,567.37 L1291.37,567.37 L1291.26,567.37 L1291.14,567.37 L1291.01,567.37 L1290.88,567.37 L1290.75,567.38 L1290.62,567.40 L1290.49,567.42 L1290.35,567.43 L1290.19,567.42 L1289.99,567.38 L1289.78,567.30 L1289.56,567.21 L1289.31,567.10 L1289.04,566.96 L1288.74,566.79 L1288.40,566.59 L1288.02,566.35 L1287.60,566.09 L1287.15,565.80 L1286.67,565.48 L1286.17,565.13 L1285.64,564.75 L1285.09,564.35 L1284.53,563.93 L1283.94,563.48 L1283.32,563.00 L1282.65,562.47 L1281.92,561.89 L1281.13,561.27 L1280.30,560.61 L1279.42,559.90 L1278.49,559.15 L1277.53,558.36 L1276.53,557.54 L1275.50,556.67 L1274.44,555.77 L1273.34,554.82 L1272.19,553.84 L1271.00,552.82 L1269.74,551.76 L1268.45,550.68 L1267.12,549.57 L1265.73,548.43 L1264.29,547.24 L1262.77,545.99 L1261.16,544.67 L1259.47,543.28 L1257.69,541.83 L1255.84,540.33 L1253.92,538.76 L1251.94,537.14 L1249.90,535.45 L1247.81,533.73 L1245.67,531.97 L1243.47,530.16 L1241.19,528.26 L1238.82,526.26 L1236.36,524.14 L1233.80,521.91 L1231.16,519.61 L1228.44,517.20 L1225.63,514.67 L1222.72,511.99 L1219.72,509.14 L1216.66,506.20 L1213.55,503.19 L1210.35,500.04 L1207.01,496.66 L1203.49,492.95 L1199.75,488.83 L1195.76,484.31 L1191.57,479.48 L1187.20,474.32 L1182.67,468.84 L1178.01,463.03 L1173.24,456.90 L1168.33,450.42 L1163.26,443.60 L1158.06,436.46 L1152.75,429.01 L1147.37,421.26 L1141.95,413.22 L1136.43,404.83 L1130.78,396.06 L1125.06,386.99 L1119.32,377.71 L1113.61,368.30 L1108.00,358.86 L1102.40,349.29 L1096.75,339.51 L1091.13,329.60 L1085.64,319.67 L1080.34,309.79 L1075.32,300.08 L1070.56,290.44 L1065.98,280.77 L1061.60,271.16 L1057.43,261.72 L1053.49,252.51 L1049.79,243.65 L1046.33,235.06 L1043.10,226.68 L1040.09,218.54 L1037.32,210.69 L1034.77,203.19 L1032.46,196.07 L1030.41,189.34 L1028.60,182.98 L1027.03,176.96 L1025.67,171.25 L1024.50,165.84 L1023.50,160.71 L1022.68,155.90 L1022.07,151.43 L1021.64,147.25 L1021.39,143.33 L1021.29,139.63 L1021.33,136.09 L1021.52,132.76 L1021.88,129.65 L1022.39,126.77 L1023.05,124.07 L1023.84,121.55 L1024.74,119.18 L1025.79,116.97 L1026.98,114.94 L1028.31,113.09 L1029.74,111.40 L1031.28,109.85 L1032.88,108.44 L1034.58,107.18 L1036.40,106.10 L1038.30,105.16 L1040.28,104.34 L1042.33,103.61 L1044.42,102.96 L1046.57,102.41 L1048.79,101.97 L1051.07,101.64 L1053.40,101.37 L1055.76,101.14 L1058.15,100.94 L1060.57,100.76 L1063.04,100.63 L1065.54,100.55 L1068.06,100.49 L1070.59,100.46 L1073.11,100.44 L1075.63,100.42 L1078.14,100.43 L1080.66,100.45 L1083.19,100.50 L1085.74,100.55 L1088.32,100.62 L1090.91,100.71 L1093.51,100.81 L1096.13,100.93 L1098.77,101.06 L1101.45,101.21 L1104.17,101.37 L1106.93,101.54 L1109.72,101.72 L1112.55,101.92 L1115.41,102.13 L1118.31,102.36 L1121.26,102.60 L1124.25,102.84 L1127.27,103.11 L1130.34,103.38 L1133.45,103.67 L1136.61,103.96 L1139.83,104.27 L1143.10,104.58 L1146.41,104.91 L1149.77,105.25 L1153.20,105.60 L1156.68,105.96 L1160.23,106.33 L1163.84,106.70 L1167.52,107.09 L1171.25,107.49 L1175.05,107.90 L1178.92,108.32 L1182.85,108.75 L1186.85,109.19 L1190.91,109.64 L1195.04,110.10 L1199.24,110.57 L1203.51,111.05 L1207.86,111.54 L1212.29,112.03 L1216.80,112.54 L1221.38,113.06 L1226.03,113.58 L1230.76,114.11 L1235.56,114.66 L1240.45,115.22 L1245.40,115.78 L1250.44,116.36 L1255.55,116.94 L1260.73,117.54 L1266.00,118.14 L1271.34,118.76 L1276.76,119.38 L1282.26,120.01 L1287.83,120.65 L1293.48,121.30 L1299.20,121.96 L1304.99,122.63 L1310.86,123.30 L1316.80,123.98 L1322.81,124.68 L1328.88,125.37 L1335.00,126.07 L1341.18,126.78 L1347.43,127.50 L1353.74,128.22 L1360.10,128.94 L1366.48,129.67 L1372.88,130.41 L1379.32,131.15 L1385.81,131.90 L1392.34,132.65 L1398.86,133.41 L1405.36,134.15 L1411.78,134.90 L1418.15,135.63 L1424.48,136.36 L1430.78,137.08 L1437.05,137.80 L1443.29,138.51 L1449.50,139.22 L1455.72,139.94 L1461.94,140.65 L1468.13,141.36 L1474.27,142.07 L1480.30,142.76 L1486.21,143.44 L1492.00,144.10 L1497.69,144.74 L1503.30,145.38 L1508.80,146.00 L1514.19,146.62 L1519.47,147.22 L1524.64,147.81 L1529.71,148.40 L1534.68,148.97 L1539.53,149.53 L1544.26,150.08 L1548.86,150.61 L1553.33,151.12 L1557.67,151.62 L1561.89,152.11 L1566.00,152.59 L1569.99,153.04 L1573.87,153.49 L1577.64,153.92 L1581.28,154.34 L1584.80,154.74 L1588.23,155.13 L1591.56,155.50 L1594.81,155.88 L1597.98,156.24 L1601.03,156.59 L1604.00,156.93 L1606.88,157.27 L1609.71,157.59 L1612.48,157.91 L1615.19,158.22 L1617.84,158.53 L1620.43,158.83 L1622.95,159.12 L1625.40,159.40 L1627.79,159.68 L1630.11,159.94 L1632.37,160.21 L1634.56,160.46 L1636.69,160.70 L1638.75,160.94 L1640.73,161.17 L1642.65,161.39 L1644.49,161.59 L1646.27,161.79 L1647.98,161.98 L1649.62,162.17 L1651.20,162.34 L1652.66,162.51 L1653.98,162.66 L1655.23,162.81 L1656.49,162.95 L1657.83,163.11 L1659.33,163.28 L1661.06,163.48 L1663.00,163.70 L1665.01,163.94 L1666.99,164.16 L1668.82,164.37 L1670.39,164.55 L1671.66,164.70 L1672.72,164.82 L1673.64,164.93 L1674.46,165.02 L1675.23,165.11 L1676.01,165.20 L1676.77,165.29 L1677.47,165.37 L1678.12,165.45 L1678.74,165.52 L1679.36,165.59 L1679.99,165.66 L1680.67,165.74 L1681.39,165.82 L1682.10,165.90 L1682.76,165.98 L1683.31,166.04 L1683.71,166.09 Z"/></clipPath>
<clipPath id="plotclip"><rect x="1020.2" y="89.2" width="638.4" height="490.4"/></clipPath></defs>
<defs><radialGradient id="w0" gradientUnits="userSpaceOnUse" cx="1230.46" cy="197.33" r="900"><stop offset="0.0000" stop-color="#ffffff"/><stop offset="0.0217" stop-color="#ffb3c0"/><stop offset="0.0533" stop-color="#ff738b"/><stop offset="0.1067" stop-color="#ff3b5c"/><stop offset="0.2017" stop-color="#ff0c35"/><stop offset="0.2783" stop-color="#ff0026"/><stop offset="0.4667" stop-color="#ff0012"/></radialGradient><radialGradient id="w1" gradientUnits="userSpaceOnUse" cx="1230.46" cy="197.33" r="900"><stop offset="0.0000" stop-color="#ffffff"/><stop offset="0.0217" stop-color="#ffb3c2"/><stop offset="0.0533" stop-color="#ff738e"/><stop offset="0.1050" stop-color="#ff3b61"/><stop offset="0.1983" stop-color="#ff0c3b"/><stop offset="0.2700" stop-color="#ff002c"/><stop offset="0.4550" stop-color="#ff0018"/></radialGradient><radialGradient id="w2" gradientUnits="userSpaceOnUse" cx="1230.46" cy="197.33" r="900"><stop offset="0.0000" stop-color="#ffffff"/><stop offset="0.0217" stop-color="#ffb3c3"/><stop offset="0.0533" stop-color="#ff7291"/><stop offset="0.1050" stop-color="#ff3a65"/><stop offset="0.1983" stop-color="#ff0b40"/><stop offset="0.2683" stop-color="#ff0031"/><stop offset="0.4450" stop-color="#ff001f"/></radialGradient><radialGradient id="w3" gradientUnits="userSpaceOnUse" cx="1230.46" cy="197.33" r="900"><stop offset="0.0000" stop-color="#ffffff"/><stop offset="0.0217" stop-color="#ffb3c5"/><stop offset="0.0533" stop-color="#ff7294"/><stop offset="0.1050" stop-color="#ff3969"/><stop offset="0.1983" stop-color="#ff0a45"/><stop offset="0.2667" stop-color="#ff0037"/><stop offset="0.4350" stop-color="#ff0025"/></radialGradient><radialGradient id="w4" gradientUnits="userSpaceOnUse" cx="1230.46" cy="197.33" r="900"><stop offset="0.0000" stop-color="#ffffff"/><stop offset="0.0217" stop-color="#ffb3c7"/><stop offset="0.0533" stop-color="#ff7197"/><stop offset="0.1050" stop-color="#ff396d"/><stop offset="0.1967" stop-color="#ff094a"/><stop offset="0.2617" stop-color="#ff003d"/><stop offset="0.4267" stop-color="#ff002b"/></radialGradient><radialGradient id="w5" gradientUnits="userSpaceOnUse" cx="1230.46" cy="197.33" r="900"><stop offset="0.0000" stop-color="#ffffff"/><stop offset="0.0217" stop-color="#ffb3c9"/><stop offset="0.0533" stop-color="#ff719a"/><stop offset="0.1050" stop-color="#ff3872"/><stop offset="0.1967" stop-color="#ff084f"/><stop offset="0.2633" stop-color="#ff0042"/><stop offset="0.4183" stop-color="#ff0032"/></radialGradient><radialGradient id="w6" gradientUnits="userSpaceOnUse" cx="1230.46" cy="197.33" r="900"><stop offset="0.0000" stop-color="#ffffff"/><stop offset="0.0217" stop-color="#ffb3cb"/><stop offset="0.0533" stop-color="#ff719d"/><stop offset="0.1050" stop-color="#ff3776"/><stop offset="0.1967" stop-color="#ff0755"/><stop offset="0.2767" stop-color="#ff0046"/><stop offset="0.4100" stop-color="#ff0038"/></radialGradient><radialGradient id="w7" gradientUnits="userSpaceOnUse" cx="1230.46" cy="197.33" r="900"><stop offset="0.0000" stop-color="#ffffff"/><stop offset="0.0217" stop-color="#ffb3cc"/><stop offset="0.0533" stop-color="#ff71a1"/><stop offset="0.1050" stop-color="#ff377a"/><stop offset="0.1967" stop-color="#ff065a"/><stop offset="0.3433" stop-color="#ff0044"/><stop offset="0.4033" stop-color="#ff003f"/></radialGradient><radialGradient id="w8" gradientUnits="userSpaceOnUse" cx="1230.46" cy="197.33" r="900"><stop offset="0.0000" stop-color="#ffffff"/><stop offset="0.0217" stop-color="#ffb3ce"/><stop offset="0.0550" stop-color="#ff6ea2"/><stop offset="0.1083" stop-color="#ff337d"/><stop offset="0.2017" stop-color="#ff035e"/><stop offset="0.3967" stop-color="#ff0045"/></radialGradient><radialGradient id="w9" gradientUnits="userSpaceOnUse" cx="1230.46" cy="197.33" r="900"><stop offset="0.0000" stop-color="#ffffff"/><stop offset="0.0217" stop-color="#ffb3d0"/><stop offset="0.0550" stop-color="#ff6ea6"/><stop offset="0.1083" stop-color="#ff3382"/><stop offset="0.2017" stop-color="#ff0264"/><stop offset="0.3917" stop-color="#ff004c"/></radialGradient><radialGradient id="w10" gradientUnits="userSpaceOnUse" cx="1230.46" cy="197.33" r="900"><stop offset="0.0000" stop-color="#ffffff"/><stop offset="0.0217" stop-color="#ffb3d2"/><stop offset="0.0550" stop-color="#ff6eaa"/><stop offset="0.1083" stop-color="#ff3287"/><stop offset="0.2017" stop-color="#ff0169"/><stop offset="0.3850" stop-color="#ff0053"/></radialGradient><radialGradient id="w11" gradientUnits="userSpaceOnUse" cx="1230.46" cy="197.33" r="900"><stop offset="0.0000" stop-color="#ffffff"/><stop offset="0.0217" stop-color="#ffb3d4"/><stop offset="0.0550" stop-color="#ff6ead"/><stop offset="0.1083" stop-color="#ff328b"/><stop offset="0.2000" stop-color="#ff0070"/><stop offset="0.3800" stop-color="#ff0059"/></radialGradient><radialGradient id="w12" gradientUnits="userSpaceOnUse" cx="1230.46" cy="197.33" r="900"><stop offset="0.0000" stop-color="#ffffff"/><stop offset="0.0233" stop-color="#ffafd4"/><stop offset="0.0567" stop-color="#ff6bb0"/><stop offset="0.1100" stop-color="#ff3090"/><stop offset="0.2000" stop-color="#ff0076"/><stop offset="0.3750" stop-color="#ff0060"/></radialGradient><radialGradient id="w13" gradientUnits="userSpaceOnUse" cx="1230.46" cy="197.33" r="900"><stop offset="0.0000" stop-color="#ffffff"/><stop offset="0.0233" stop-color="#ffafd6"/><stop offset="0.0567" stop-color="#ff6bb3"/><stop offset="0.1100" stop-color="#ff3095"/><stop offset="0.1983" stop-color="#ff007c"/><stop offset="0.3717" stop-color="#ff0067"/></radialGradient><radialGradient id="w14" gradientUnits="userSpaceOnUse" cx="1230.46" cy="197.33" r="900"><stop offset="0.0000" stop-color="#ffffff"/><stop offset="0.0233" stop-color="#ffafd8"/><stop offset="0.0583" stop-color="#ff69b6"/><stop offset="0.1133" stop-color="#ff2d99"/><stop offset="0.1967" stop-color="#ff0082"/><stop offset="0.3667" stop-color="#ff006f"/></radialGradient><radialGradient id="w15" gradientUnits="userSpaceOnUse" cx="1230.46" cy="197.33" r="900"><stop offset="0.0000" stop-color="#ffffff"/><stop offset="0.0233" stop-color="#ffb0db"/><stop offset="0.0583" stop-color="#ff69ba"/><stop offset="0.1133" stop-color="#ff2d9e"/><stop offset="0.1950" stop-color="#ff0089"/><stop offset="0.3633" stop-color="#ff0076"/></radialGradient><radialGradient id="w16" gradientUnits="userSpaceOnUse" cx="1230.46" cy="197.33" r="900"><stop offset="0.0000" stop-color="#ffffff"/><stop offset="0.0233" stop-color="#ffb0dd"/><stop offset="0.0583" stop-color="#ff69be"/><stop offset="0.1133" stop-color="#ff2ca4"/><stop offset="0.1950" stop-color="#ff0090"/><stop offset="0.3600" stop-color="#ff007e"/></radialGradient><radialGradient id="w17" gradientUnits="userSpaceOnUse" cx="1230.46" cy="197.33" r="900"><stop offset="0.0000" stop-color="#ffffff"/><stop offset="0.0233" stop-color="#ffb1df"/><stop offset="0.0583" stop-color="#ff6ac3"/><stop offset="0.1133" stop-color="#ff2caa"/><stop offset="0.1933" stop-color="#ff0097"/><stop offset="0.3567" stop-color="#ff0085"/></radialGradient><radialGradient id="w18" gradientUnits="userSpaceOnUse" cx="1230.46" cy="197.33" r="900"><stop offset="0.0000" stop-color="#ffffff"/><stop offset="0.0250" stop-color="#ffade0"/><stop offset="0.0617" stop-color="#ff65c5"/><stop offset="0.1183" stop-color="#ff28ae"/><stop offset="0.1933" stop-color="#ff009e"/><stop offset="0.3533" stop-color="#ff008d"/></radialGradient><radialGradient id="w19" gradientUnits="userSpaceOnUse" cx="1230.46" cy="197.33" r="900"><stop offset="0.0000" stop-color="#ffffff"/><stop offset="0.0250" stop-color="#ffade3"/><stop offset="0.0617" stop-color="#ff66c9"/><stop offset="0.1183" stop-color="#ff28b4"/><stop offset="0.1917" stop-color="#ff00a5"/><stop offset="0.3517" stop-color="#ff0096"/></radialGradient><radialGradient id="w20" gradientUnits="userSpaceOnUse" cx="1230.46" cy="197.33" r="900"><stop offset="0.0000" stop-color="#ffffff"/><stop offset="0.0250" stop-color="#ffaee5"/><stop offset="0.0617" stop-color="#ff66ce"/><stop offset="0.1183" stop-color="#ff28ba"/><stop offset="0.1900" stop-color="#ff00ad"/><stop offset="0.3483" stop-color="#ff009e"/></radialGradient><radialGradient id="w21" gradientUnits="userSpaceOnUse" cx="1230.46" cy="197.33" r="900"><stop offset="0.0000" stop-color="#ffffff"/><stop offset="0.0250" stop-color="#ffafe8"/><stop offset="0.0617" stop-color="#ff67d3"/><stop offset="0.1183" stop-color="#ff28c1"/><stop offset="0.1900" stop-color="#ff00b4"/><stop offset="0.3467" stop-color="#ff00a7"/></radialGradient><radialGradient id="w22" gradientUnits="userSpaceOnUse" cx="1230.46" cy="197.33" r="900"><stop offset="0.0000" stop-color="#ffffff"/><stop offset="0.0267" stop-color="#ffabe9"/><stop offset="0.0650" stop-color="#ff62d6"/><stop offset="0.1250" stop-color="#ff23c6"/><stop offset="0.1900" stop-color="#ff00bc"/><stop offset="0.3450" stop-color="#ff00b0"/></radialGradient><radialGradient id="w23" gradientUnits="userSpaceOnUse" cx="1230.46" cy="197.33" r="900"><stop offset="0.0000" stop-color="#ffffff"/><stop offset="0.0267" stop-color="#ffacec"/><stop offset="0.0650" stop-color="#ff63dc"/><stop offset="0.1250" stop-color="#ff23cd"/><stop offset="0.1900" stop-color="#ff00c4"/><stop offset="0.3433" stop-color="#ff00b9"/></radialGradient><radialGradient id="w24" gradientUnits="userSpaceOnUse" cx="1230.46" cy="197.33" r="900"><stop offset="0.0000" stop-color="#ffffff"/><stop offset="0.0267" stop-color="#ffadef"/><stop offset="0.0650" stop-color="#ff64e1"/><stop offset="0.1250" stop-color="#ff23d4"/><stop offset="0.1883" stop-color="#ff00cc"/><stop offset="0.3417" stop-color="#ff00c3"/></radialGradient><radialGradient id="w25" gradientUnits="userSpaceOnUse" cx="1230.46" cy="197.33" r="900"><stop offset="0.0000" stop-color="#ffffff"/><stop offset="0.0283" stop-color="#ffa9f1"/><stop offset="0.0683" stop-color="#ff60e5"/><stop offset="0.1300" stop-color="#ff20db"/><stop offset="0.1883" stop-color="#ff00d5"/><stop offset="0.3417" stop-color="#ff00cd"/></radialGradient><radialGradient id="w26" gradientUnits="userSpaceOnUse" cx="1230.46" cy="197.33" r="900"><stop offset="0.0000" stop-color="#ffffff"/><stop offset="0.0283" stop-color="#ffaaf4"/><stop offset="0.0683" stop-color="#ff61eb"/><stop offset="0.1300" stop-color="#ff20e3"/><stop offset="0.1883" stop-color="#ff00de"/><stop offset="0.3400" stop-color="#ff00d8"/></radialGradient><radialGradient id="w27" gradientUnits="userSpaceOnUse" cx="1230.46" cy="197.33" r="900"><stop offset="0.0000" stop-color="#ffffff"/><stop offset="0.0283" stop-color="#ffabf8"/><stop offset="0.0700" stop-color="#ff60f1"/><stop offset="0.1333" stop-color="#ff1eeb"/><stop offset="0.1883" stop-color="#ff00e7"/><stop offset="0.3400" stop-color="#ff00e3"/></radialGradient><radialGradient id="w28" gradientUnits="userSpaceOnUse" cx="1230.46" cy="197.33" r="900"><stop offset="0.0000" stop-color="#ffffff"/><stop offset="0.0300" stop-color="#ffa9fb"/><stop offset="0.0733" stop-color="#ff5cf6"/><stop offset="0.1383" stop-color="#ff1af3"/><stop offset="0.1883" stop-color="#ff00f1"/><stop offset="0.3383" stop-color="#ff00ee"/></radialGradient><radialGradient id="w29" gradientUnits="userSpaceOnUse" cx="1230.46" cy="197.33" r="900"><stop offset="0.0000" stop-color="#ffffff"/><stop offset="0.0300" stop-color="#ffaafe"/><stop offset="0.0733" stop-color="#ff5dfd"/><stop offset="0.1383" stop-color="#ff1bfc"/><stop offset="0.1867" stop-color="#ff00fb"/><stop offset="0.3383" stop-color="#ff00fa"/></radialGradient><radialGradient id="w30" gradientUnits="userSpaceOnUse" cx="1230.46" cy="197.33" r="900"><stop offset="0.0000" stop-color="#ffffff"/><stop offset="0.0300" stop-color="#fdaaff"/><stop offset="0.0733" stop-color="#fb5dff"/><stop offset="0.1383" stop-color="#f91bff"/><stop offset="0.1867" stop-color="#f800ff"/><stop offset="0.3383" stop-color="#f700ff"/></radialGradient><radialGradient id="w31" gradientUnits="userSpaceOnUse" cx="1230.46" cy="197.33" r="900"><stop offset="0.0000" stop-color="#ffffff"/><stop offset="0.0300" stop-color="#f9a9ff"/><stop offset="0.0733" stop-color="#f45cff"/><stop offset="0.1383" stop-color="#f01aff"/><stop offset="0.1883" stop-color="#ee00ff"/><stop offset="0.3400" stop-color="#eb00ff"/></radialGradient><radialGradient id="w32" gradientUnits="userSpaceOnUse" cx="1230.46" cy="197.33" r="900"><stop offset="0.0000" stop-color="#ffffff"/><stop offset="0.0283" stop-color="#f6abff"/><stop offset="0.0700" stop-color="#ef60ff"/><stop offset="0.1333" stop-color="#e81eff"/><stop offset="0.1883" stop-color="#e500ff"/><stop offset="0.3400" stop-color="#df00ff"/></radialGradient><radialGradient id="w33" gradientUnits="userSpaceOnUse" cx="1230.46" cy="197.33" r="900"><stop offset="0.0000" stop-color="#ffffff"/><stop offset="0.0283" stop-color="#f3abff"/><stop offset="0.0700" stop-color="#e95fff"/><stop offset="0.1333" stop-color="#e01eff"/><stop offset="0.1883" stop-color="#db00ff"/><stop offset="0.3417" stop-color="#d400ff"/></radialGradient><radialGradient id="w34" gradientUnits="userSpaceOnUse" cx="1230.46" cy="197.33" r="900"><stop offset="0.0000" stop-color="#ffffff"/><stop offset="0.0267" stop-color="#f1aeff"/><stop offset="0.0667" stop-color="#e463ff"/><stop offset="0.1283" stop-color="#d921ff"/><stop offset="0.1883" stop-color="#d200ff"/><stop offset="0.3417" stop-color="#ca00ff"/></radialGradient><radialGradient id="w35" gradientUnits="userSpaceOnUse" cx="1230.46" cy="197.33" r="900"><stop offset="0.0000" stop-color="#ffffff"/><stop offset="0.0267" stop-color="#eeadff"/><stop offset="0.0667" stop-color="#de62ff"/><stop offset="0.1283" stop-color="#d121ff"/><stop offset="0.1900" stop-color="#c900ff"/><stop offset="0.3433" stop-color="#bf00ff"/></radialGradient><radialGradient id="w36" gradientUnits="userSpaceOnUse" cx="1230.46" cy="197.33" r="900"><stop offset="0.0000" stop-color="#ffffff"/><stop offset="0.0267" stop-color="#ebacff"/><stop offset="0.0650" stop-color="#da64ff"/><stop offset="0.1250" stop-color="#ca24ff"/><stop offset="0.1900" stop-color="#c100ff"/><stop offset="0.3450" stop-color="#b500ff"/></radialGradient><radialGradient id="w37" gradientUnits="userSpaceOnUse" cx="1230.46" cy="197.33" r="900"><stop offset="0.0000" stop-color="#ffffff"/><stop offset="0.0267" stop-color="#e8acff"/><stop offset="0.0650" stop-color="#d463ff"/><stop offset="0.1250" stop-color="#c324ff"/><stop offset="0.1900" stop-color="#b800ff"/><stop offset="0.3467" stop-color="#ac00ff"/></radialGradient><radialGradient id="w38" gradientUnits="userSpaceOnUse" cx="1230.46" cy="197.33" r="900"><stop offset="0.0000" stop-color="#ffffff"/><stop offset="0.0250" stop-color="#e7afff"/><stop offset="0.0617" stop-color="#d168ff"/><stop offset="0.1200" stop-color="#bd28ff"/><stop offset="0.1900" stop-color="#b000ff"/><stop offset="0.3483" stop-color="#a200ff"/></radialGradient><radialGradient id="w39" gradientUnits="userSpaceOnUse" cx="1230.46" cy="197.33" r="900"><stop offset="0.0000" stop-color="#ffffff"/><stop offset="0.0250" stop-color="#e4afff"/><stop offset="0.0617" stop-color="#cc67ff"/><stop offset="0.1183" stop-color="#b729ff"/><stop offset="0.1917" stop-color="#a800ff"/><stop offset="0.3517" stop-color="#9900ff"/></radialGradient><radialGradient id="w40" gradientUnits="userSpaceOnUse" cx="1230.46" cy="197.33" r="900"><stop offset="0.0000" stop-color="#ffffff"/><stop offset="0.0250" stop-color="#e1aeff"/><stop offset="0.0617" stop-color="#c767ff"/><stop offset="0.1183" stop-color="#b129ff"/><stop offset="0.1933" stop-color="#a100ff"/><stop offset="0.3533" stop-color="#9000ff"/></radialGradient><radialGradient id="w41" gradientUnits="userSpaceOnUse" cx="1230.46" cy="197.33" r="900"><stop offset="0.0000" stop-color="#ffffff"/><stop offset="0.0250" stop-color="#dfaeff"/><stop offset="0.0617" stop-color="#c367ff"/><stop offset="0.1183" stop-color="#aa29ff"/><stop offset="0.1933" stop-color="#9900ff"/><stop offset="0.3567" stop-color="#8800ff"/></radialGradient><radialGradient id="w42" gradientUnits="userSpaceOnUse" cx="1230.46" cy="197.33" r="900"><stop offset="0.0000" stop-color="#ffffff"/><stop offset="0.0250" stop-color="#dcadff"/><stop offset="0.0617" stop-color="#be66ff"/><stop offset="0.1183" stop-color="#a42aff"/><stop offset="0.1950" stop-color="#9200ff"/><stop offset="0.3600" stop-color="#7f00ff"/></radialGradient><radialGradient id="w43" gradientUnits="userSpaceOnUse" cx="1230.46" cy="197.33" r="900"><stop offset="0.0000" stop-color="#ffffff"/><stop offset="0.0233" stop-color="#dcb1ff"/><stop offset="0.0583" stop-color="#bc6bff"/><stop offset="0.1133" stop-color="#a02eff"/><stop offset="0.1950" stop-color="#8b00ff"/><stop offset="0.3633" stop-color="#7700ff"/></radialGradient><radialGradient id="w44" gradientUnits="userSpaceOnUse" cx="1230.46" cy="197.33" r="900"><stop offset="0.0000" stop-color="#ffffff"/><stop offset="0.0233" stop-color="#d9b1ff"/><stop offset="0.0583" stop-color="#b86bff"/><stop offset="0.1133" stop-color="#9a2eff"/><stop offset="0.1967" stop-color="#8300ff"/><stop offset="0.3667" stop-color="#6f00ff"/></radialGradient><radialGradient id="w45" gradientUnits="userSpaceOnUse" cx="1230.46" cy="197.33" r="900"><stop offset="0.0000" stop-color="#ffffff"/><stop offset="0.0233" stop-color="#d7b1ff"/><stop offset="0.0583" stop-color="#b36bff"/><stop offset="0.1133" stop-color="#952eff"/><stop offset="0.1983" stop-color="#7c00ff"/><stop offset="0.3717" stop-color="#6700ff"/></radialGradient><radialGradient id="w46" gradientUnits="userSpaceOnUse" cx="1230.46" cy="197.33" r="900"><stop offset="0.0000" stop-color="#ffffff"/><stop offset="0.0233" stop-color="#d5b1ff"/><stop offset="0.0583" stop-color="#af6bff"/><stop offset="0.1133" stop-color="#8f2fff"/><stop offset="0.2000" stop-color="#7500ff"/><stop offset="0.3750" stop-color="#5f00ff"/></radialGradient><radialGradient id="w47" gradientUnits="userSpaceOnUse" cx="1230.46" cy="197.33" r="900"><stop offset="0.0000" stop-color="#ffffff"/><stop offset="0.0233" stop-color="#d2b1ff"/><stop offset="0.0583" stop-color="#ab6bff"/><stop offset="0.1133" stop-color="#8a2fff"/><stop offset="0.2017" stop-color="#6f00ff"/><stop offset="0.3800" stop-color="#5800ff"/></radialGradient><radialGradient id="w48" gradientUnits="userSpaceOnUse" cx="1230.46" cy="197.33" r="900"><stop offset="0.0000" stop-color="#ffffff"/><stop offset="0.0233" stop-color="#d0b0ff"/><stop offset="0.0583" stop-color="#a76bff"/><stop offset="0.1133" stop-color="#8430ff"/><stop offset="0.2050" stop-color="#6700ff"/><stop offset="0.3850" stop-color="#5000ff"/></radialGradient><radialGradient id="w49" gradientUnits="userSpaceOnUse" cx="1230.46" cy="197.33" r="900"><stop offset="0.0000" stop-color="#ffffff"/><stop offset="0.0233" stop-color="#ceb0ff"/><stop offset="0.0583" stop-color="#a36bff"/><stop offset="0.1133" stop-color="#7f30ff"/><stop offset="0.2067" stop-color="#6100ff"/><stop offset="0.3917" stop-color="#4800ff"/></radialGradient><radialGradient id="w50" gradientUnits="userSpaceOnUse" cx="1230.46" cy="197.33" r="900"><stop offset="0.0000" stop-color="#ffffff"/><stop offset="0.0233" stop-color="#ccb0ff"/><stop offset="0.0583" stop-color="#a06bff"/><stop offset="0.1133" stop-color="#7a31ff"/><stop offset="0.2083" stop-color="#5a00ff"/><stop offset="0.3967" stop-color="#4100ff"/></radialGradient><radialGradient id="w51" gradientUnits="userSpaceOnUse" cx="1230.46" cy="197.33" r="900"><stop offset="0.0000" stop-color="#ffffff"/><stop offset="0.0233" stop-color="#cab0ff"/><stop offset="0.0583" stop-color="#9c6cff"/><stop offset="0.1133" stop-color="#7532ff"/><stop offset="0.2100" stop-color="#5401ff"/><stop offset="0.4033" stop-color="#3a00ff"/></radialGradient><radialGradient id="w52" gradientUnits="userSpaceOnUse" cx="1230.46" cy="197.33" r="900"><stop offset="0.0000" stop-color="#ffffff"/><stop offset="0.0233" stop-color="#c8b0ff"/><stop offset="0.0583" stop-color="#986cff"/><stop offset="0.1133" stop-color="#7032ff"/><stop offset="0.2117" stop-color="#4e02ff"/><stop offset="0.4100" stop-color="#3300ff"/></radialGradient><radialGradient id="w53" gradientUnits="userSpaceOnUse" cx="1230.46" cy="197.33" r="900"><stop offset="0.0000" stop-color="#ffffff"/><stop offset="0.0233" stop-color="#c6b0ff"/><stop offset="0.0583" stop-color="#946cff"/><stop offset="0.1150" stop-color="#6a32ff"/><stop offset="0.2150" stop-color="#4702ff"/><stop offset="0.4183" stop-color="#2b00ff"/></radialGradient><radialGradient id="w54" gradientUnits="userSpaceOnUse" cx="1230.46" cy="197.33" r="900"><stop offset="0.0000" stop-color="#ffffff"/><stop offset="0.0217" stop-color="#c7b5ff"/><stop offset="0.0550" stop-color="#9572ff"/><stop offset="0.1083" stop-color="#6938ff"/><stop offset="0.2017" stop-color="#4507ff"/><stop offset="0.2733" stop-color="#3600ff"/><stop offset="0.4133" stop-color="#2500ff"/></radialGradient><radialGradient id="w55" gradientUnits="userSpaceOnUse" cx="1230.46" cy="197.33" r="900"><stop offset="0.0000" stop-color="#ffffff"/><stop offset="0.0217" stop-color="#c5b5ff"/><stop offset="0.0550" stop-color="#9172ff"/><stop offset="0.1083" stop-color="#6439ff"/><stop offset="0.2033" stop-color="#3f08ff"/><stop offset="0.2717" stop-color="#3000ff"/><stop offset="0.4017" stop-color="#2000ff"/></radialGradient><radialGradient id="w56" gradientUnits="userSpaceOnUse" cx="1230.46" cy="197.33" r="900"><stop offset="0.0000" stop-color="#ffffff"/><stop offset="0.0217" stop-color="#c3b5ff"/><stop offset="0.0550" stop-color="#8e73ff"/><stop offset="0.1083" stop-color="#603aff"/><stop offset="0.2033" stop-color="#3909ff"/><stop offset="0.2700" stop-color="#2a00ff"/><stop offset="0.3917" stop-color="#1b00ff"/></radialGradient><radialGradient id="w57" gradientUnits="userSpaceOnUse" cx="1230.46" cy="197.33" r="900"><stop offset="0.0000" stop-color="#ffffff"/><stop offset="0.0217" stop-color="#c2b6ff"/><stop offset="0.0550" stop-color="#8b73ff"/><stop offset="0.1083" stop-color="#5b3bff"/><stop offset="0.2033" stop-color="#340bff"/><stop offset="0.2717" stop-color="#2400ff"/><stop offset="0.3817" stop-color="#1600ff"/></radialGradient><radialGradient id="w58" gradientUnits="userSpaceOnUse" cx="1230.46" cy="197.33" r="900"><stop offset="0.0000" stop-color="#ffffff"/><stop offset="0.0217" stop-color="#c0b6ff"/><stop offset="0.0550" stop-color="#8774ff"/><stop offset="0.1100" stop-color="#563aff"/><stop offset="0.2067" stop-color="#2d0bff"/><stop offset="0.2767" stop-color="#1e00ff"/><stop offset="0.3733" stop-color="#1000ff"/></radialGradient><radialGradient id="w59" gradientUnits="userSpaceOnUse" cx="1230.46" cy="197.33" r="900"><stop offset="0.0000" stop-color="#ffffff"/><stop offset="0.0217" stop-color="#beb6ff"/><stop offset="0.0550" stop-color="#8475ff"/><stop offset="0.1100" stop-color="#513bff"/><stop offset="0.2083" stop-color="#270cff"/><stop offset="0.2817" stop-color="#1700ff"/><stop offset="0.3633" stop-color="#0c00ff"/></radialGradient><radialGradient id="w60" gradientUnits="userSpaceOnUse" cx="1230.46" cy="197.33" r="900"><stop offset="0.0000" stop-color="#ffffff"/><stop offset="0.0217" stop-color="#bdb7ff"/><stop offset="0.0550" stop-color="#8175ff"/><stop offset="0.1100" stop-color="#4d3dff"/><stop offset="0.2083" stop-color="#220dff"/><stop offset="0.2883" stop-color="#1000ff"/><stop offset="0.3550" stop-color="#0700ff"/></radialGradient><radialGradient id="w61" gradientUnits="userSpaceOnUse" cx="1230.46" cy="197.33" r="900"><stop offset="0.0000" stop-color="#ffffff"/><stop offset="0.0233" stop-color="#b7b3ff"/><stop offset="0.0583" stop-color="#7a71ff"/><stop offset="0.1150" stop-color="#463aff"/><stop offset="0.2183" stop-color="#1a0cff"/><stop offset="0.3000" stop-color="#0900ff"/><stop offset="0.3483" stop-color="#0200ff"/></radialGradient><radialGradient id="w62" gradientUnits="userSpaceOnUse" cx="1230.46" cy="197.33" r="900"><stop offset="0.0000" stop-color="#ffffff"/><stop offset="0.0233" stop-color="#b5b3ff"/><stop offset="0.0583" stop-color="#7772ff"/><stop offset="0.1167" stop-color="#403aff"/><stop offset="0.2217" stop-color="#140dff"/><stop offset="0.3083" stop-color="#0200ff"/><stop offset="0.3400" stop-color="#0000ff"/></radialGradient><radialGradient id="w63" gradientUnits="userSpaceOnUse" cx="1230.46" cy="197.33" r="900"><stop offset="0.0000" stop-color="#ffffff"/><stop offset="0.0233" stop-color="#b4b4ff"/><stop offset="0.0583" stop-color="#7373ff"/><stop offset="0.1167" stop-color="#3c3cff"/><stop offset="0.2217" stop-color="#0f0eff"/><stop offset="0.3150" stop-color="#0000ff"/><stop offset="0.3317" stop-color="#0000ff"/></radialGradient><radialGradient id="w64" gradientUnits="userSpaceOnUse" cx="1230.46" cy="197.33" r="900"><stop offset="0.0000" stop-color="#ffffff"/><stop offset="0.0217" stop-color="#b6b8ff"/><stop offset="0.0550" stop-color="#7579ff"/><stop offset="0.1100" stop-color="#3c42ff"/><stop offset="0.2083" stop-color="#0e14ff"/><stop offset="0.2883" stop-color="#0001ff"/><stop offset="0.3250" stop-color="#0000ff"/></radialGradient><radialGradient id="w65" gradientUnits="userSpaceOnUse" cx="1230.46" cy="197.33" r="900"><stop offset="0.0000" stop-color="#ffffff"/><stop offset="0.0217" stop-color="#b5b9ff"/><stop offset="0.0550" stop-color="#727aff"/><stop offset="0.1083" stop-color="#3a44ff"/><stop offset="0.2033" stop-color="#0a17ff"/><stop offset="0.2717" stop-color="#0006ff"/><stop offset="0.3167" stop-color="#0000ff"/></radialGradient><radialGradient id="w66" gradientUnits="userSpaceOnUse" cx="1230.46" cy="197.33" r="900"><stop offset="0.0000" stop-color="#ffffff"/><stop offset="0.0217" stop-color="#b3b9ff"/><stop offset="0.0550" stop-color="#707bff"/><stop offset="0.1083" stop-color="#3646ff"/><stop offset="0.2017" stop-color="#0619ff"/><stop offset="0.3100" stop-color="#0001ff"/></radialGradient><radialGradient id="w67" gradientUnits="userSpaceOnUse" cx="1230.46" cy="197.33" r="900"><stop offset="0.0000" stop-color="#ffffff"/><stop offset="0.0217" stop-color="#b2baff"/><stop offset="0.0550" stop-color="#6d7cff"/><stop offset="0.1083" stop-color="#3247ff"/><stop offset="0.2017" stop-color="#011bff"/><stop offset="0.3033" stop-color="#0004ff"/></radialGradient><radialGradient id="w68" gradientUnits="userSpaceOnUse" cx="1230.46" cy="197.33" r="900"><stop offset="0.0000" stop-color="#ffffff"/><stop offset="0.0217" stop-color="#b1bbff"/><stop offset="0.0533" stop-color="#6d80ff"/><stop offset="0.1050" stop-color="#314bff"/><stop offset="0.1917" stop-color="#0020ff"/><stop offset="0.2967" stop-color="#0007ff"/></radialGradient><radialGradient id="w69" gradientUnits="userSpaceOnUse" cx="1230.46" cy="197.33" r="900"><stop offset="0.0000" stop-color="#ffffff"/><stop offset="0.0217" stop-color="#afbbff"/><stop offset="0.0533" stop-color="#6a81ff"/><stop offset="0.1033" stop-color="#2e4eff"/><stop offset="0.1817" stop-color="#0025ff"/><stop offset="0.2900" stop-color="#000bff"/></radialGradient><radialGradient id="w70" gradientUnits="userSpaceOnUse" cx="1230.46" cy="197.33" r="900"><stop offset="0.0000" stop-color="#ffffff"/><stop offset="0.0217" stop-color="#aebcff"/><stop offset="0.0533" stop-color="#6882ff"/><stop offset="0.1033" stop-color="#2b50ff"/><stop offset="0.1733" stop-color="#002aff"/><stop offset="0.2850" stop-color="#000dff"/></radialGradient><radialGradient id="w71" gradientUnits="userSpaceOnUse" cx="1230.46" cy="197.33" r="900"><stop offset="0.0000" stop-color="#ffffff"/><stop offset="0.0217" stop-color="#adbdff"/><stop offset="0.0533" stop-color="#6583ff"/><stop offset="0.1033" stop-color="#2751ff"/><stop offset="0.1667" stop-color="#002fff"/><stop offset="0.2783" stop-color="#0011ff"/></radialGradient><radialGradient id="w72" gradientUnits="userSpaceOnUse" cx="1230.46" cy="197.33" r="900"><stop offset="0.0000" stop-color="#ffffff"/><stop offset="0.0200" stop-color="#b1c2ff"/><stop offset="0.0500" stop-color="#6989ff"/><stop offset="0.0967" stop-color="#2a58ff"/><stop offset="0.1567" stop-color="#0035ff"/><stop offset="0.2733" stop-color="#0014ff"/></radialGradient><radialGradient id="w73" gradientUnits="userSpaceOnUse" cx="1230.46" cy="197.33" r="900"><stop offset="0.0000" stop-color="#ffffff"/><stop offset="0.0200" stop-color="#b0c3ff"/><stop offset="0.0500" stop-color="#678bff"/><stop offset="0.0967" stop-color="#265aff"/><stop offset="0.1500" stop-color="#003aff"/><stop offset="0.2683" stop-color="#0017ff"/></radialGradient><radialGradient id="w74" gradientUnits="userSpaceOnUse" cx="1230.46" cy="197.33" r="900"><stop offset="0.0000" stop-color="#ffffff"/><stop offset="0.0200" stop-color="#afc3ff"/><stop offset="0.0500" stop-color="#648cff"/><stop offset="0.0967" stop-color="#235cff"/><stop offset="0.1450" stop-color="#003eff"/><stop offset="0.2633" stop-color="#001aff"/></radialGradient><radialGradient id="w75" gradientUnits="userSpaceOnUse" cx="1230.46" cy="197.33" r="900"><stop offset="0.0000" stop-color="#ffffff"/><stop offset="0.0200" stop-color="#aec4ff"/><stop offset="0.0500" stop-color="#628eff"/><stop offset="0.0950" stop-color="#215fff"/><stop offset="0.1383" stop-color="#0044ff"/><stop offset="0.2583" stop-color="#001eff"/></radialGradient><radialGradient id="w76" gradientUnits="userSpaceOnUse" cx="1230.46" cy="197.33" r="900"><stop offset="0.0000" stop-color="#ffffff"/><stop offset="0.0200" stop-color="#adc5ff"/><stop offset="0.0500" stop-color="#608fff"/><stop offset="0.0950" stop-color="#1e61ff"/><stop offset="0.1333" stop-color="#0049ff"/><stop offset="0.2550" stop-color="#0021ff"/></radialGradient><radialGradient id="w77" gradientUnits="userSpaceOnUse" cx="1230.46" cy="197.33" r="900"><stop offset="0.0000" stop-color="#ffffff"/><stop offset="0.0200" stop-color="#acc6ff"/><stop offset="0.0500" stop-color="#5e91ff"/><stop offset="0.0950" stop-color="#1b63ff"/><stop offset="0.1283" stop-color="#004dff"/><stop offset="0.2483" stop-color="#0024ff"/><stop offset="0.2500" stop-color="#0024ff"/></radialGradient><radialGradient id="w78" gradientUnits="userSpaceOnUse" cx="1230.46" cy="197.33" r="900"><stop offset="0.0000" stop-color="#ffffff"/><stop offset="0.0200" stop-color="#abc7ff"/><stop offset="0.0500" stop-color="#5c93ff"/><stop offset="0.0950" stop-color="#1865ff"/><stop offset="0.1233" stop-color="#0053ff"/><stop offset="0.2433" stop-color="#0028ff"/><stop offset="0.2467" stop-color="#0028ff"/></radialGradient><radialGradient id="w79" gradientUnits="userSpaceOnUse" cx="1230.46" cy="197.33" r="900"><stop offset="0.0000" stop-color="#ffffff"/><stop offset="0.0200" stop-color="#aac8ff"/><stop offset="0.0483" stop-color="#5e97ff"/><stop offset="0.0917" stop-color="#186aff"/><stop offset="0.1200" stop-color="#0057ff"/><stop offset="0.2383" stop-color="#002bff"/><stop offset="0.2433" stop-color="#002bff"/></radialGradient><radialGradient id="w80" gradientUnits="userSpaceOnUse" cx="1230.46" cy="197.33" r="900"><stop offset="0.0000" stop-color="#ffffff"/><stop offset="0.0200" stop-color="#a9c9ff"/><stop offset="0.0483" stop-color="#5c98ff"/><stop offset="0.0917" stop-color="#156cff"/><stop offset="0.1167" stop-color="#005bff"/><stop offset="0.2333" stop-color="#002fff"/><stop offset="0.2400" stop-color="#002eff"/></radialGradient><radialGradient id="w81" gradientUnits="userSpaceOnUse" cx="1230.46" cy="197.33" r="900"><stop offset="0.0000" stop-color="#ffffff"/><stop offset="0.0200" stop-color="#a9caff"/><stop offset="0.0483" stop-color="#5a9aff"/><stop offset="0.0917" stop-color="#126eff"/><stop offset="0.1133" stop-color="#0060ff"/><stop offset="0.2267" stop-color="#0034ff"/><stop offset="0.2367" stop-color="#0032ff"/></radialGradient><radialGradient id="w82" gradientUnits="userSpaceOnUse" cx="1230.46" cy="197.33" r="900"><stop offset="0.0000" stop-color="#ffffff"/><stop offset="0.0200" stop-color="#a8cbff"/><stop offset="0.0483" stop-color="#589cff"/><stop offset="0.0900" stop-color="#1272ff"/><stop offset="0.1100" stop-color="#0064ff"/><stop offset="0.2217" stop-color="#0038ff"/><stop offset="0.2333" stop-color="#0036ff"/></radialGradient><radialGradient id="w83" gradientUnits="userSpaceOnUse" cx="1230.46" cy="197.33" r="900"><stop offset="0.0000" stop-color="#ffffff"/><stop offset="0.0200" stop-color="#a7ccff"/><stop offset="0.0483" stop-color="#579eff"/><stop offset="0.0900" stop-color="#0f75ff"/><stop offset="0.1067" stop-color="#0069ff"/><stop offset="0.2150" stop-color="#003cff"/><stop offset="0.2317" stop-color="#0039ff"/></radialGradient><radialGradient id="w84" gradientUnits="userSpaceOnUse" cx="1230.46" cy="197.33" r="900"><stop offset="0.0000" stop-color="#ffffff"/><stop offset="0.0200" stop-color="#a7ceff"/><stop offset="0.0483" stop-color="#55a0ff"/><stop offset="0.0900" stop-color="#0c77ff"/><stop offset="0.1067" stop-color="#006cff"/><stop offset="0.2167" stop-color="#003fff"/><stop offset="0.2283" stop-color="#003dff"/></radialGradient><radialGradient id="w85" gradientUnits="userSpaceOnUse" cx="1230.46" cy="197.33" r="900"><stop offset="0.0000" stop-color="#ffffff"/><stop offset="0.0217" stop-color="#a0ccff"/><stop offset="0.0517" stop-color="#4c9eff"/><stop offset="0.0950" stop-color="#0276ff"/><stop offset="0.1950" stop-color="#0048ff"/><stop offset="0.2267" stop-color="#0040ff"/></radialGradient><radialGradient id="w86" gradientUnits="userSpaceOnUse" cx="1230.46" cy="197.33" r="900"><stop offset="0.0000" stop-color="#ffffff"/><stop offset="0.0217" stop-color="#9fcdff"/><stop offset="0.0517" stop-color="#4aa0ff"/><stop offset="0.0933" stop-color="#027aff"/><stop offset="0.1933" stop-color="#004cff"/><stop offset="0.2233" stop-color="#0044ff"/></radialGradient><radialGradient id="w87" gradientUnits="userSpaceOnUse" cx="1230.46" cy="197.33" r="900"><stop offset="0.0000" stop-color="#ffffff"/><stop offset="0.0217" stop-color="#9fceff"/><stop offset="0.0517" stop-color="#49a3ff"/><stop offset="0.0917" stop-color="#017eff"/><stop offset="0.1917" stop-color="#0050ff"/><stop offset="0.2217" stop-color="#0048ff"/></radialGradient><radialGradient id="w88" gradientUnits="userSpaceOnUse" cx="1230.46" cy="197.33" r="900"><stop offset="0.0000" stop-color="#ffffff"/><stop offset="0.0217" stop-color="#9ed0ff"/><stop offset="0.0517" stop-color="#47a5ff"/><stop offset="0.0900" stop-color="#0182ff"/><stop offset="0.1900" stop-color="#0054ff"/><stop offset="0.2200" stop-color="#004cff"/></radialGradient><radialGradient id="w89" gradientUnits="userSpaceOnUse" cx="1230.46" cy="197.33" r="900"><stop offset="0.0000" stop-color="#ffffff"/><stop offset="0.0217" stop-color="#9ed1ff"/><stop offset="0.0517" stop-color="#46a7ff"/><stop offset="0.0883" stop-color="#0187ff"/><stop offset="0.1867" stop-color="#0058ff"/><stop offset="0.2183" stop-color="#0050ff"/></radialGradient><radialGradient id="w90" gradientUnits="userSpaceOnUse" cx="1230.46" cy="197.33" r="900"><stop offset="0.0000" stop-color="#ffffff"/><stop offset="0.0217" stop-color="#9ed3ff"/><stop offset="0.0517" stop-color="#45aaff"/><stop offset="0.0883" stop-color="#008aff"/><stop offset="0.1883" stop-color="#005bff"/><stop offset="0.2167" stop-color="#0054ff"/></radialGradient><radialGradient id="w91" gradientUnits="userSpaceOnUse" cx="1230.46" cy="197.33" r="900"><stop offset="0.0000" stop-color="#ffffff"/><stop offset="0.0217" stop-color="#9dd4ff"/><stop offset="0.0517" stop-color="#43adff"/><stop offset="0.0867" stop-color="#008eff"/><stop offset="0.1867" stop-color="#0060ff"/><stop offset="0.2150" stop-color="#0059ff"/></radialGradient><radialGradient id="w92" gradientUnits="userSpaceOnUse" cx="1230.46" cy="197.33" r="900"><stop offset="0.0000" stop-color="#ffffff"/><stop offset="0.0217" stop-color="#9dd6ff"/><stop offset="0.0517" stop-color="#42afff"/><stop offset="0.0850" stop-color="#0093ff"/><stop offset="0.1867" stop-color="#0064ff"/><stop offset="0.2133" stop-color="#005dff"/></radialGradient><radialGradient id="w93" gradientUnits="userSpaceOnUse" cx="1230.46" cy="197.33" r="900"><stop offset="0.0000" stop-color="#ffffff"/><stop offset="0.0217" stop-color="#9dd7ff"/><stop offset="0.0517" stop-color="#41b2ff"/><stop offset="0.0833" stop-color="#0097ff"/><stop offset="0.1850" stop-color="#0068ff"/><stop offset="0.2133" stop-color="#0061ff"/></radialGradient><radialGradient id="w94" gradientUnits="userSpaceOnUse" cx="1230.46" cy="197.33" r="900"><stop offset="0.0000" stop-color="#ffffff"/><stop offset="0.0233" stop-color="#97d6ff"/><stop offset="0.0550" stop-color="#38b2ff"/><stop offset="0.0833" stop-color="#009bff"/><stop offset="0.1867" stop-color="#006cff"/><stop offset="0.2117" stop-color="#0066ff"/></radialGradient><radialGradient id="w95" gradientUnits="userSpaceOnUse" cx="1230.46" cy="197.33" r="900"><stop offset="0.0000" stop-color="#ffffff"/><stop offset="0.0233" stop-color="#96d8ff"/><stop offset="0.0550" stop-color="#37b5ff"/><stop offset="0.0817" stop-color="#00a0ff"/><stop offset="0.1867" stop-color="#0071ff"/><stop offset="0.2117" stop-color="#006bff"/></radialGradient><radialGradient id="w96" gradientUnits="userSpaceOnUse" cx="1230.46" cy="197.33" r="900"><stop offset="0.0000" stop-color="#ffffff"/><stop offset="0.0233" stop-color="#96daff"/><stop offset="0.0550" stop-color="#35b8ff"/><stop offset="0.0817" stop-color="#00a3ff"/><stop offset="0.1883" stop-color="#0075ff"/><stop offset="0.2100" stop-color="#0070ff"/></radialGradient><radialGradient id="w97" gradientUnits="userSpaceOnUse" cx="1230.46" cy="197.33" r="900"><stop offset="0.0000" stop-color="#ffffff"/><stop offset="0.0233" stop-color="#96dcff"/><stop offset="0.0550" stop-color="#34bbff"/><stop offset="0.0800" stop-color="#00a8ff"/><stop offset="0.1883" stop-color="#007aff"/><stop offset="0.2100" stop-color="#0075ff"/></radialGradient><radialGradient id="w98" gradientUnits="userSpaceOnUse" cx="1230.46" cy="197.33" r="900"><stop offset="0.0000" stop-color="#ffffff"/><stop offset="0.0250" stop-color="#90dcff"/><stop offset="0.0567" stop-color="#2fbdff"/><stop offset="0.0783" stop-color="#00adff"/><stop offset="0.1883" stop-color="#007fff"/><stop offset="0.2083" stop-color="#007bff"/></radialGradient><radialGradient id="w99" gradientUnits="userSpaceOnUse" cx="1230.46" cy="197.33" r="900"><stop offset="0.0000" stop-color="#ffffff"/><stop offset="0.0250" stop-color="#90deff"/><stop offset="0.0583" stop-color="#2abfff"/><stop offset="0.0783" stop-color="#00b1ff"/><stop offset="0.1917" stop-color="#0084ff"/><stop offset="0.2083" stop-color="#0081ff"/></radialGradient><radialGradient id="w100" gradientUnits="userSpaceOnUse" cx="1230.46" cy="197.33" r="900"><stop offset="0.0000" stop-color="#ffffff"/><stop offset="0.0250" stop-color="#90e0ff"/><stop offset="0.0583" stop-color="#29c3ff"/><stop offset="0.0783" stop-color="#00b6ff"/><stop offset="0.1967" stop-color="#0088ff"/><stop offset="0.2083" stop-color="#0086ff"/></radialGradient><radialGradient id="w101" gradientUnits="userSpaceOnUse" cx="1230.46" cy="197.33" r="900"><stop offset="0.0000" stop-color="#ffffff"/><stop offset="0.0250" stop-color="#91e2ff"/><stop offset="0.0583" stop-color="#28c6ff"/><stop offset="0.0767" stop-color="#00bbff"/><stop offset="0.1983" stop-color="#008eff"/><stop offset="0.2083" stop-color="#008dff"/></radialGradient><radialGradient id="w102" gradientUnits="userSpaceOnUse" cx="1230.46" cy="197.33" r="900"><stop offset="0.0000" stop-color="#ffffff"/><stop offset="0.0267" stop-color="#8be3ff"/><stop offset="0.0617" stop-color="#1fc8ff"/><stop offset="0.0767" stop-color="#00bfff"/><stop offset="0.2033" stop-color="#0093ff"/><stop offset="0.2067" stop-color="#0093ff"/></radialGradient><radialGradient id="w103" gradientUnits="userSpaceOnUse" cx="1230.46" cy="197.33" r="900"><stop offset="0.0000" stop-color="#ffffff"/><stop offset="0.0267" stop-color="#8be5ff"/><stop offset="0.0617" stop-color="#1eccff"/><stop offset="0.0750" stop-color="#00c5ff"/><stop offset="0.2050" stop-color="#009aff"/><stop offset="0.2067" stop-color="#009aff"/></radialGradient><radialGradient id="w104" gradientUnits="userSpaceOnUse" cx="1230.46" cy="197.33" r="900"><stop offset="0.0000" stop-color="#ffffff"/><stop offset="0.0283" stop-color="#85e6ff"/><stop offset="0.0650" stop-color="#15cfff"/><stop offset="0.0750" stop-color="#00caff"/><stop offset="0.2067" stop-color="#00a1ff"/></radialGradient><radialGradient id="w105" gradientUnits="userSpaceOnUse" cx="1230.46" cy="197.33" r="900"><stop offset="0.0000" stop-color="#ffffff"/><stop offset="0.0283" stop-color="#86e8ff"/><stop offset="0.0650" stop-color="#14d3ff"/><stop offset="0.0750" stop-color="#00cfff"/><stop offset="0.2067" stop-color="#00a9ff"/></radialGradient><radialGradient id="w106" gradientUnits="userSpaceOnUse" cx="1230.46" cy="197.33" r="900"><stop offset="0.0000" stop-color="#ffffff"/><stop offset="0.0300" stop-color="#80eaff"/><stop offset="0.0683" stop-color="#0bd7ff"/><stop offset="0.0767" stop-color="#00d3ff"/><stop offset="0.2083" stop-color="#00b1ff"/></radialGradient><radialGradient id="w107" gradientUnits="userSpaceOnUse" cx="1230.46" cy="197.33" r="900"><stop offset="0.0000" stop-color="#ffffff"/><stop offset="0.0300" stop-color="#81edff"/><stop offset="0.0683" stop-color="#0adcff"/><stop offset="0.0767" stop-color="#00d8ff"/><stop offset="0.2083" stop-color="#00baff"/></radialGradient><radialGradient id="w108" gradientUnits="userSpaceOnUse" cx="1230.46" cy="197.33" r="900"><stop offset="0.0000" stop-color="#ffffff"/><stop offset="0.0317" stop-color="#7befff"/><stop offset="0.0717" stop-color="#01e0ff"/><stop offset="0.2083" stop-color="#00c3ff"/></radialGradient><radialGradient id="w109" gradientUnits="userSpaceOnUse" cx="1230.46" cy="197.33" r="900"><stop offset="0.0000" stop-color="#ffffff"/><stop offset="0.0333" stop-color="#76f1ff"/><stop offset="0.0717" stop-color="#00e5ff"/><stop offset="0.2083" stop-color="#00cdff"/></radialGradient><radialGradient id="w110" gradientUnits="userSpaceOnUse" cx="1230.46" cy="197.33" r="900"><stop offset="0.0000" stop-color="#ffffff"/><stop offset="0.0333" stop-color="#77f4ff"/><stop offset="0.0717" stop-color="#00ebff"/><stop offset="0.2100" stop-color="#00d7ff"/></radialGradient><radialGradient id="w111" gradientUnits="userSpaceOnUse" cx="1230.46" cy="197.33" r="900"><stop offset="0.0000" stop-color="#ffffff"/><stop offset="0.0350" stop-color="#72f7ff"/><stop offset="0.0717" stop-color="#00f1ff"/><stop offset="0.2100" stop-color="#00e2ff"/></radialGradient><radialGradient id="w112" gradientUnits="userSpaceOnUse" cx="1230.46" cy="197.33" r="900"><stop offset="0.0000" stop-color="#ffffff"/><stop offset="0.0367" stop-color="#6dfaff"/><stop offset="0.0717" stop-color="#00f7ff"/><stop offset="0.2117" stop-color="#00efff"/></radialGradient><radialGradient id="w113" gradientUnits="userSpaceOnUse" cx="1230.46" cy="197.33" r="900"><stop offset="0.0000" stop-color="#ffffff"/><stop offset="0.0400" stop-color="#63feff"/><stop offset="0.0717" stop-color="#00fdff"/><stop offset="0.2133" stop-color="#00fcff"/></radialGradient><radialGradient id="w114" gradientUnits="userSpaceOnUse" cx="1230.46" cy="197.33" r="900"><stop offset="0.0000" stop-color="#ffffff"/><stop offset="0.0400" stop-color="#63fffc"/><stop offset="0.0717" stop-color="#00fffa"/><stop offset="0.2133" stop-color="#00fff4"/></radialGradient><radialGradient id="w115" gradientUnits="userSpaceOnUse" cx="1230.46" cy="197.33" r="900"><stop offset="0.0000" stop-color="#ffffff"/><stop offset="0.0383" stop-color="#68fff8"/><stop offset="0.0717" stop-color="#00fff3"/><stop offset="0.2150" stop-color="#00ffe7"/></radialGradient><radialGradient id="w116" gradientUnits="userSpaceOnUse" cx="1230.46" cy="197.33" r="900"><stop offset="0.0000" stop-color="#ffffff"/><stop offset="0.0383" stop-color="#68fff4"/><stop offset="0.0717" stop-color="#00ffed"/><stop offset="0.2167" stop-color="#00ffd9"/></radialGradient><radialGradient id="w117" gradientUnits="userSpaceOnUse" cx="1230.46" cy="197.33" r="900"><stop offset="0.0000" stop-color="#ffffff"/><stop offset="0.0367" stop-color="#6dfff1"/><stop offset="0.0717" stop-color="#00ffe7"/><stop offset="0.2183" stop-color="#00ffcc"/></radialGradient><radialGradient id="w118" gradientUnits="userSpaceOnUse" cx="1230.46" cy="197.33" r="900"><stop offset="0.0000" stop-color="#ffffff"/><stop offset="0.0367" stop-color="#6dffee"/><stop offset="0.0717" stop-color="#00ffe1"/><stop offset="0.2200" stop-color="#00ffbf"/></radialGradient><radialGradient id="w119" gradientUnits="userSpaceOnUse" cx="1230.46" cy="197.33" r="900"><stop offset="0.0000" stop-color="#ffffff"/><stop offset="0.0367" stop-color="#6dffea"/><stop offset="0.0717" stop-color="#01ffda"/><stop offset="0.2217" stop-color="#00ffb2"/></radialGradient><radialGradient id="w120" gradientUnits="userSpaceOnUse" cx="1230.46" cy="197.33" r="900"><stop offset="0.0000" stop-color="#ffffff"/><stop offset="0.0367" stop-color="#6effe7"/><stop offset="0.0733" stop-color="#00ffd4"/><stop offset="0.2233" stop-color="#00ffa6"/></radialGradient><radialGradient id="w121" gradientUnits="userSpaceOnUse" cx="1230.46" cy="197.33" r="900"><stop offset="0.0000" stop-color="#ffffff"/><stop offset="0.0350" stop-color="#73ffe4"/><stop offset="0.0733" stop-color="#00ffce"/><stop offset="0.2200" stop-color="#00ff9a"/><stop offset="0.2250" stop-color="#00ff9a"/></radialGradient><radialGradient id="w122" gradientUnits="userSpaceOnUse" cx="1230.46" cy="197.33" r="900"><stop offset="0.0000" stop-color="#ffffff"/><stop offset="0.0350" stop-color="#74ffe1"/><stop offset="0.0733" stop-color="#00ffc8"/><stop offset="0.2100" stop-color="#00ff91"/><stop offset="0.2267" stop-color="#00ff8e"/></radialGradient><radialGradient id="w123" gradientUnits="userSpaceOnUse" cx="1230.46" cy="197.33" r="900"><stop offset="0.0000" stop-color="#ffffff"/><stop offset="0.0350" stop-color="#74ffde"/><stop offset="0.0733" stop-color="#01ffc2"/><stop offset="0.2000" stop-color="#00ff89"/><stop offset="0.2283" stop-color="#00ff82"/></radialGradient><radialGradient id="w124" gradientUnits="userSpaceOnUse" cx="1230.46" cy="197.33" r="900"><stop offset="0.0000" stop-color="#ffffff"/><stop offset="0.0350" stop-color="#75ffda"/><stop offset="0.0733" stop-color="#02ffbc"/><stop offset="0.1933" stop-color="#00ff81"/><stop offset="0.2317" stop-color="#00ff76"/></radialGradient><radialGradient id="w125" gradientUnits="userSpaceOnUse" cx="1230.46" cy="197.33" r="900"><stop offset="0.0000" stop-color="#ffffff"/><stop offset="0.0333" stop-color="#7bffd9"/><stop offset="0.0750" stop-color="#00ffb5"/><stop offset="0.1900" stop-color="#00ff78"/><stop offset="0.2333" stop-color="#00ff6a"/></radialGradient><radialGradient id="w126" gradientUnits="userSpaceOnUse" cx="1230.46" cy="197.33" r="900"><stop offset="0.0000" stop-color="#ffffff"/><stop offset="0.0333" stop-color="#7bffd6"/><stop offset="0.0750" stop-color="#01ffaf"/><stop offset="0.1833" stop-color="#00ff71"/><stop offset="0.2350" stop-color="#00ff5f"/></radialGradient><radialGradient id="w127" gradientUnits="userSpaceOnUse" cx="1230.46" cy="197.33" r="900"><stop offset="0.0000" stop-color="#ffffff"/><stop offset="0.0333" stop-color="#7cffd3"/><stop offset="0.0750" stop-color="#03ffaa"/><stop offset="0.1783" stop-color="#00ff6a"/><stop offset="0.2383" stop-color="#00ff53"/></radialGradient><radialGradient id="w128" gradientUnits="userSpaceOnUse" cx="1230.46" cy="197.33" r="900"><stop offset="0.0000" stop-color="#ffffff"/><stop offset="0.0333" stop-color="#7dffd0"/><stop offset="0.0750" stop-color="#05ffa4"/><stop offset="0.1750" stop-color="#00ff62"/><stop offset="0.2400" stop-color="#00ff49"/></radialGradient><radialGradient id="w129" gradientUnits="userSpaceOnUse" cx="1230.46" cy="197.33" r="900"><stop offset="0.0000" stop-color="#ffffff"/><stop offset="0.0333" stop-color="#7dffcd"/><stop offset="0.0750" stop-color="#07ff9f"/><stop offset="0.0883" stop-color="#00ff93"/><stop offset="0.1917" stop-color="#00ff52"/><stop offset="0.2417" stop-color="#00ff3e"/></radialGradient><radialGradient id="w130" gradientUnits="userSpaceOnUse" cx="1230.46" cy="197.33" r="900"><stop offset="0.0000" stop-color="#ffffff"/><stop offset="0.0333" stop-color="#7effca"/><stop offset="0.0750" stop-color="#09ff9a"/><stop offset="0.0833" stop-color="#00ff92"/><stop offset="0.1800" stop-color="#00ff4e"/><stop offset="0.2433" stop-color="#00ff33"/></radialGradient><radialGradient id="w131" gradientUnits="userSpaceOnUse" cx="1230.46" cy="197.33" r="900"><stop offset="0.0000" stop-color="#ffffff"/><stop offset="0.0333" stop-color="#7fffc7"/><stop offset="0.0750" stop-color="#0bff95"/><stop offset="0.0833" stop-color="#00ff8c"/><stop offset="0.1783" stop-color="#00ff47"/><stop offset="0.2450" stop-color="#00ff29"/></radialGradient><radialGradient id="w132" gradientUnits="userSpaceOnUse" cx="1230.46" cy="197.33" r="900"><stop offset="0.0000" stop-color="#ffffff"/><stop offset="0.0333" stop-color="#80ffc5"/><stop offset="0.0750" stop-color="#0dff8f"/><stop offset="0.0850" stop-color="#00ff85"/><stop offset="0.1767" stop-color="#00ff3f"/><stop offset="0.2467" stop-color="#00ff1f"/></radialGradient><radialGradient id="w133" gradientUnits="userSpaceOnUse" cx="1230.46" cy="197.33" r="900"><stop offset="0.0000" stop-color="#ffffff"/><stop offset="0.0333" stop-color="#81ffc2"/><stop offset="0.0750" stop-color="#10ff8a"/><stop offset="0.0850" stop-color="#00ff80"/><stop offset="0.1750" stop-color="#00ff38"/><stop offset="0.2467" stop-color="#00ff16"/></radialGradient><radialGradient id="w134" gradientUnits="userSpaceOnUse" cx="1230.46" cy="197.33" r="900"><stop offset="0.0000" stop-color="#ffffff"/><stop offset="0.0333" stop-color="#82ffbf"/><stop offset="0.0750" stop-color="#12ff85"/><stop offset="0.0850" stop-color="#00ff7a"/><stop offset="0.1717" stop-color="#00ff32"/><stop offset="0.2467" stop-color="#00ff0c"/></radialGradient><radialGradient id="w135" gradientUnits="userSpaceOnUse" cx="1230.46" cy="197.33" r="900"><stop offset="0.0000" stop-color="#ffffff"/><stop offset="0.0333" stop-color="#83ffbc"/><stop offset="0.0750" stop-color="#15ff81"/><stop offset="0.0867" stop-color="#00ff73"/><stop offset="0.1733" stop-color="#00ff29"/><stop offset="0.2450" stop-color="#00ff04"/></radialGradient><radialGradient id="w136" gradientUnits="userSpaceOnUse" cx="1230.46" cy="197.33" r="900"><stop offset="0.0000" stop-color="#ffffff"/><stop offset="0.0333" stop-color="#85ffba"/><stop offset="0.0750" stop-color="#17ff7c"/><stop offset="0.0883" stop-color="#00ff6c"/><stop offset="0.1733" stop-color="#00ff22"/><stop offset="0.2417" stop-color="#00ff00"/></radialGradient><radialGradient id="w137" gradientUnits="userSpaceOnUse" cx="1230.46" cy="197.33" r="900"><stop offset="0.0000" stop-color="#ffffff"/><stop offset="0.0333" stop-color="#86ffb7"/><stop offset="0.0767" stop-color="#17ff75"/><stop offset="0.0900" stop-color="#00ff65"/><stop offset="0.1733" stop-color="#00ff1a"/><stop offset="0.2250" stop-color="#00ff00"/><stop offset="0.2367" stop-color="#00ff00"/></radialGradient><radialGradient id="w138" gradientUnits="userSpaceOnUse" cx="1230.46" cy="197.33" r="900"><stop offset="0.0000" stop-color="#ffffff"/><stop offset="0.0333" stop-color="#87ffb5"/><stop offset="0.0767" stop-color="#19ff70"/><stop offset="0.0917" stop-color="#00ff5e"/><stop offset="0.1750" stop-color="#00ff12"/><stop offset="0.2133" stop-color="#00ff00"/><stop offset="0.2300" stop-color="#00ff00"/></radialGradient><radialGradient id="w139" gradientUnits="userSpaceOnUse" cx="1230.46" cy="197.33" r="900"><stop offset="0.0000" stop-color="#ffffff"/><stop offset="0.0333" stop-color="#89ffb2"/><stop offset="0.0767" stop-color="#1dff6c"/><stop offset="0.0933" stop-color="#00ff57"/><stop offset="0.1750" stop-color="#00ff0b"/><stop offset="0.2050" stop-color="#00ff00"/><stop offset="0.2217" stop-color="#00ff00"/></radialGradient><radialGradient id="w140" gradientUnits="userSpaceOnUse" cx="1230.46" cy="197.33" r="900"><stop offset="0.0000" stop-color="#ffffff"/><stop offset="0.0333" stop-color="#8affb0"/><stop offset="0.0767" stop-color="#20ff67"/><stop offset="0.0950" stop-color="#00ff4f"/><stop offset="0.1767" stop-color="#00ff02"/><stop offset="0.2133" stop-color="#00ff00"/></radialGradient><radialGradient id="w141" gradientUnits="userSpaceOnUse" cx="1230.46" cy="197.33" r="900"><stop offset="0.0000" stop-color="#ffffff"/><stop offset="0.0333" stop-color="#8cffae"/><stop offset="0.0767" stop-color="#23ff63"/><stop offset="0.0967" stop-color="#00ff48"/><stop offset="0.1717" stop-color="#00ff00"/><stop offset="0.2050" stop-color="#00ff00"/></radialGradient><radialGradient id="w142" gradientUnits="userSpaceOnUse" cx="1230.46" cy="197.33" r="900"><stop offset="0.0000" stop-color="#ffffff"/><stop offset="0.0333" stop-color="#8effab"/><stop offset="0.0767" stop-color="#26ff5f"/><stop offset="0.1000" stop-color="#00ff3f"/><stop offset="0.1650" stop-color="#00ff00"/><stop offset="0.1967" stop-color="#00ff00"/></radialGradient><radialGradient id="w143" gradientUnits="userSpaceOnUse" cx="1230.46" cy="197.33" r="900"><stop offset="0.0000" stop-color="#ffffff"/><stop offset="0.0333" stop-color="#8fffa9"/><stop offset="0.0783" stop-color="#26ff58"/><stop offset="0.1017" stop-color="#00ff38"/><stop offset="0.1583" stop-color="#00ff00"/><stop offset="0.1883" stop-color="#00ff00"/></radialGradient><radialGradient id="w144" gradientUnits="userSpaceOnUse" cx="1230.46" cy="197.33" r="900"><stop offset="0.0000" stop-color="#ffffff"/><stop offset="0.0333" stop-color="#91ffa7"/><stop offset="0.0783" stop-color="#2aff54"/><stop offset="0.1050" stop-color="#00ff2f"/><stop offset="0.1517" stop-color="#00ff00"/><stop offset="0.1817" stop-color="#00ff00"/></radialGradient><radialGradient id="w145" gradientUnits="userSpaceOnUse" cx="1230.46" cy="197.33" r="900"><stop offset="0.0000" stop-color="#ffffff"/><stop offset="0.0350" stop-color="#8fffa1"/><stop offset="0.0800" stop-color="#2bff4d"/><stop offset="0.1083" stop-color="#00ff26"/><stop offset="0.1467" stop-color="#00ff00"/><stop offset="0.1733" stop-color="#00ff00"/></radialGradient><radialGradient id="w146" gradientUnits="userSpaceOnUse" cx="1230.46" cy="197.33" r="900"><stop offset="0.0000" stop-color="#ffffff"/><stop offset="0.0350" stop-color="#91ff9f"/><stop offset="0.0817" stop-color="#2bff47"/><stop offset="0.1117" stop-color="#00ff1d"/><stop offset="0.1417" stop-color="#00ff00"/><stop offset="0.1683" stop-color="#00ff00"/></radialGradient><radialGradient id="w147" gradientUnits="userSpaceOnUse" cx="1230.46" cy="197.33" r="900"><stop offset="0.0000" stop-color="#ffffff"/><stop offset="0.0350" stop-color="#93ff9d"/><stop offset="0.0817" stop-color="#2fff43"/><stop offset="0.1150" stop-color="#00ff14"/><stop offset="0.1367" stop-color="#00ff00"/><stop offset="0.1617" stop-color="#00ff00"/></radialGradient><radialGradient id="w148" gradientUnits="userSpaceOnUse" cx="1230.46" cy="197.33" r="900"><stop offset="0.0000" stop-color="#ffffff"/><stop offset="0.0350" stop-color="#95ff9b"/><stop offset="0.0817" stop-color="#34ff3f"/><stop offset="0.1183" stop-color="#00ff0b"/><stop offset="0.1350" stop-color="#00ff00"/><stop offset="0.1567" stop-color="#00ff00"/></radialGradient><radialGradient id="w149" gradientUnits="userSpaceOnUse" cx="1230.46" cy="197.33" r="900"><stop offset="0.0000" stop-color="#ffffff"/><stop offset="0.0350" stop-color="#97ff99"/><stop offset="0.0833" stop-color="#35ff38"/><stop offset="0.1233" stop-color="#00ff00"/><stop offset="0.1517" stop-color="#00ff00"/></radialGradient><radialGradient id="w150" gradientUnits="userSpaceOnUse" cx="1230.46" cy="197.33" r="900"><stop offset="0.0000" stop-color="#ffffff"/><stop offset="0.0350" stop-color="#99ff97"/><stop offset="0.0817" stop-color="#3cff37"/><stop offset="0.1217" stop-color="#03ff00"/><stop offset="0.1467" stop-color="#00ff00"/></radialGradient><radialGradient id="w151" gradientUnits="userSpaceOnUse" cx="1230.46" cy="197.33" r="900"><stop offset="0.0000" stop-color="#ffffff"/><stop offset="0.0350" stop-color="#9bff95"/><stop offset="0.0817" stop-color="#40ff33"/><stop offset="0.1183" stop-color="#0dff00"/><stop offset="0.1367" stop-color="#00ff00"/><stop offset="0.1433" stop-color="#00ff00"/></radialGradient><radialGradient id="w152" gradientUnits="userSpaceOnUse" cx="1230.46" cy="197.33" r="900"><stop offset="0.0000" stop-color="#ffffff"/><stop offset="0.0350" stop-color="#9eff93"/><stop offset="0.0817" stop-color="#45ff30"/><stop offset="0.1150" stop-color="#16ff00"/><stop offset="0.1383" stop-color="#00ff00"/></radialGradient><radialGradient id="w153" gradientUnits="userSpaceOnUse" cx="1230.46" cy="197.33" r="900"><stop offset="0.0000" stop-color="#ffffff"/><stop offset="0.0350" stop-color="#a0ff91"/><stop offset="0.0817" stop-color="#49ff2c"/><stop offset="0.1117" stop-color="#20ff00"/><stop offset="0.1350" stop-color="#09ff00"/></radialGradient><radialGradient id="w154" gradientUnits="userSpaceOnUse" cx="1230.46" cy="197.33" r="900"><stop offset="0.0000" stop-color="#ffffff"/><stop offset="0.0350" stop-color="#a3ff8f"/><stop offset="0.0800" stop-color="#50ff2c"/><stop offset="0.1100" stop-color="#28ff00"/><stop offset="0.1317" stop-color="#13ff00"/></radialGradient><radialGradient id="w155" gradientUnits="userSpaceOnUse" cx="1230.46" cy="197.33" r="900"><stop offset="0.0000" stop-color="#ffffff"/><stop offset="0.0350" stop-color="#a5ff8e"/><stop offset="0.0800" stop-color="#55ff29"/><stop offset="0.1067" stop-color="#31ff00"/><stop offset="0.1283" stop-color="#1dff00"/></radialGradient><radialGradient id="w156" gradientUnits="userSpaceOnUse" cx="1230.46" cy="197.33" r="900"><stop offset="0.0000" stop-color="#ffffff"/><stop offset="0.0333" stop-color="#abff91"/><stop offset="0.0783" stop-color="#5cff29"/><stop offset="0.1033" stop-color="#3bff00"/><stop offset="0.1250" stop-color="#26ff00"/></radialGradient><radialGradient id="w157" gradientUnits="userSpaceOnUse" cx="1230.46" cy="197.33" r="900"><stop offset="0.0000" stop-color="#ffffff"/><stop offset="0.0333" stop-color="#aeff8f"/><stop offset="0.0783" stop-color="#61ff26"/><stop offset="0.1017" stop-color="#43ff00"/><stop offset="0.1233" stop-color="#2eff00"/></radialGradient><radialGradient id="w158" gradientUnits="userSpaceOnUse" cx="1230.46" cy="197.33" r="900"><stop offset="0.0000" stop-color="#ffffff"/><stop offset="0.0333" stop-color="#b0ff8e"/><stop offset="0.0767" stop-color="#68ff26"/><stop offset="0.1000" stop-color="#4aff00"/><stop offset="0.1200" stop-color="#38ff00"/></radialGradient><radialGradient id="w159" gradientUnits="userSpaceOnUse" cx="1230.46" cy="197.33" r="900"><stop offset="0.0000" stop-color="#ffffff"/><stop offset="0.0333" stop-color="#b3ff8d"/><stop offset="0.0767" stop-color="#6dff24"/><stop offset="0.0983" stop-color="#52ff00"/><stop offset="0.1183" stop-color="#40ff00"/></radialGradient><radialGradient id="w160" gradientUnits="userSpaceOnUse" cx="1230.46" cy="197.33" r="900"><stop offset="0.0000" stop-color="#ffffff"/><stop offset="0.0333" stop-color="#b6ff8b"/><stop offset="0.0767" stop-color="#72ff21"/><stop offset="0.0967" stop-color="#5aff00"/><stop offset="0.1150" stop-color="#4aff00"/></radialGradient><radialGradient id="w161" gradientUnits="userSpaceOnUse" cx="1230.46" cy="197.33" r="900"><stop offset="0.0000" stop-color="#ffffff"/><stop offset="0.0333" stop-color="#b8ff8a"/><stop offset="0.0767" stop-color="#77ff1e"/><stop offset="0.0950" stop-color="#62ff00"/><stop offset="0.1133" stop-color="#52ff00"/></radialGradient><radialGradient id="w162" gradientUnits="userSpaceOnUse" cx="1230.46" cy="197.33" r="900"><stop offset="0.0000" stop-color="#ffffff"/><stop offset="0.0333" stop-color="#bbff89"/><stop offset="0.0767" stop-color="#7cff1c"/><stop offset="0.0933" stop-color="#69ff00"/><stop offset="0.1117" stop-color="#5aff00"/></radialGradient><radialGradient id="w163" gradientUnits="userSpaceOnUse" cx="1230.46" cy="197.33" r="900"><stop offset="0.0000" stop-color="#ffffff"/><stop offset="0.0333" stop-color="#beff88"/><stop offset="0.0767" stop-color="#82ff1a"/><stop offset="0.0917" stop-color="#71ff00"/><stop offset="0.1100" stop-color="#62ff00"/></radialGradient><radialGradient id="w164" gradientUnits="userSpaceOnUse" cx="1230.46" cy="197.33" r="900"><stop offset="0.0000" stop-color="#ffffff"/><stop offset="0.0333" stop-color="#c1ff87"/><stop offset="0.0767" stop-color="#87ff17"/><stop offset="0.0900" stop-color="#79ff00"/><stop offset="0.1083" stop-color="#6aff00"/></radialGradient><radialGradient id="w165" gradientUnits="userSpaceOnUse" cx="1230.46" cy="197.33" r="900"><stop offset="0.0000" stop-color="#ffffff"/><stop offset="0.0333" stop-color="#c4ff86"/><stop offset="0.0767" stop-color="#8cff15"/><stop offset="0.0883" stop-color="#80ff00"/><stop offset="0.1067" stop-color="#72ff00"/></radialGradient><radialGradient id="w166" gradientUnits="userSpaceOnUse" cx="1230.46" cy="197.33" r="900"><stop offset="0.0000" stop-color="#ffffff"/><stop offset="0.0333" stop-color="#c7ff85"/><stop offset="0.0767" stop-color="#92ff13"/><stop offset="0.0883" stop-color="#86ff00"/><stop offset="0.1050" stop-color="#7aff00"/></radialGradient><radialGradient id="w167" gradientUnits="userSpaceOnUse" cx="1230.46" cy="197.33" r="900"><stop offset="0.0000" stop-color="#ffffff"/><stop offset="0.0333" stop-color="#caff85"/><stop offset="0.0767" stop-color="#97ff11"/><stop offset="0.0883" stop-color="#8dff00"/><stop offset="0.1033" stop-color="#82ff00"/></radialGradient><radialGradient id="w168" gradientUnits="userSpaceOnUse" cx="1230.46" cy="197.33" r="900"><stop offset="0.0000" stop-color="#ffffff"/><stop offset="0.0333" stop-color="#cdff84"/><stop offset="0.0767" stop-color="#9dff0f"/><stop offset="0.0867" stop-color="#94ff00"/><stop offset="0.1033" stop-color="#89ff00"/></radialGradient><radialGradient id="w169" gradientUnits="userSpaceOnUse" cx="1230.46" cy="197.33" r="900"><stop offset="0.0000" stop-color="#ffffff"/><stop offset="0.0333" stop-color="#d0ff83"/><stop offset="0.0767" stop-color="#a3ff0e"/><stop offset="0.0867" stop-color="#9bff00"/><stop offset="0.1017" stop-color="#91ff00"/></radialGradient><radialGradient id="w170" gradientUnits="userSpaceOnUse" cx="1230.46" cy="197.33" r="900"><stop offset="0.0000" stop-color="#ffffff"/><stop offset="0.0350" stop-color="#d1ff7d"/><stop offset="0.0783" stop-color="#a8ff08"/><stop offset="0.0883" stop-color="#a0ff00"/><stop offset="0.1000" stop-color="#9aff00"/></radialGradient><radialGradient id="w171" gradientUnits="userSpaceOnUse" cx="1230.46" cy="197.33" r="900"><stop offset="0.0000" stop-color="#ffffff"/><stop offset="0.0350" stop-color="#d4ff7d"/><stop offset="0.0783" stop-color="#aeff07"/><stop offset="0.0900" stop-color="#a5ff00"/><stop offset="0.1000" stop-color="#a1ff00"/></radialGradient><radialGradient id="w172" gradientUnits="userSpaceOnUse" cx="1230.46" cy="197.33" r="900"><stop offset="0.0000" stop-color="#ffffff"/><stop offset="0.0350" stop-color="#d7ff7c"/><stop offset="0.0783" stop-color="#b4ff05"/><stop offset="0.0983" stop-color="#a9ff00"/></radialGradient><radialGradient id="w173" gradientUnits="userSpaceOnUse" cx="1230.46" cy="197.33" r="900"><stop offset="0.0000" stop-color="#ffffff"/><stop offset="0.0350" stop-color="#dbff7c"/><stop offset="0.0783" stop-color="#baff04"/><stop offset="0.0983" stop-color="#b0ff00"/></radialGradient><radialGradient id="w174" gradientUnits="userSpaceOnUse" cx="1230.46" cy="197.33" r="900"><stop offset="0.0000" stop-color="#ffffff"/><stop offset="0.0350" stop-color="#deff7b"/><stop offset="0.0783" stop-color="#c0ff03"/><stop offset="0.0983" stop-color="#b7ff00"/></radialGradient><radialGradient id="w175" gradientUnits="userSpaceOnUse" cx="1230.46" cy="197.33" r="900"><stop offset="0.0000" stop-color="#ffffff"/><stop offset="0.0350" stop-color="#e2ff7b"/><stop offset="0.0783" stop-color="#c7ff02"/><stop offset="0.0967" stop-color="#bfff00"/></radialGradient><radialGradient id="w176" gradientUnits="userSpaceOnUse" cx="1230.46" cy="197.33" r="900"><stop offset="0.0000" stop-color="#ffffff"/><stop offset="0.0367" stop-color="#e4ff76"/><stop offset="0.0783" stop-color="#cdff01"/><stop offset="0.0967" stop-color="#c7ff00"/></radialGradient><radialGradient id="w177" gradientUnits="userSpaceOnUse" cx="1230.46" cy="197.33" r="900"><stop offset="0.0000" stop-color="#ffffff"/><stop offset="0.0367" stop-color="#e8ff76"/><stop offset="0.0783" stop-color="#d4ff00"/><stop offset="0.0967" stop-color="#ceff00"/></radialGradient><radialGradient id="w178" gradientUnits="userSpaceOnUse" cx="1230.46" cy="197.33" r="900"><stop offset="0.0000" stop-color="#ffffff"/><stop offset="0.0367" stop-color="#ecff75"/><stop offset="0.0783" stop-color="#dbff00"/><stop offset="0.0950" stop-color="#d6ff00"/></radialGradient><radialGradient id="w179" gradientUnits="userSpaceOnUse" cx="1230.46" cy="197.33" r="900"><stop offset="0.0000" stop-color="#ffffff"/><stop offset="0.0367" stop-color="#efff76"/><stop offset="0.0783" stop-color="#e2ff00"/><stop offset="0.0950" stop-color="#deff00"/></radialGradient><radialGradient id="w180" gradientUnits="userSpaceOnUse" cx="1230.46" cy="197.33" r="900"><stop offset="0.0000" stop-color="#ffffff"/><stop offset="0.0383" stop-color="#f3ff70"/><stop offset="0.0783" stop-color="#e9ff00"/><stop offset="0.0950" stop-color="#e6ff00"/></radialGradient><radialGradient id="w181" gradientUnits="userSpaceOnUse" cx="1230.46" cy="197.33" r="900"><stop offset="0.0000" stop-color="#ffffff"/><stop offset="0.0383" stop-color="#f6ff70"/><stop offset="0.0783" stop-color="#f0ff00"/><stop offset="0.0950" stop-color="#eeff00"/></radialGradient><radialGradient id="w182" gradientUnits="userSpaceOnUse" cx="1230.46" cy="197.33" r="900"><stop offset="0.0000" stop-color="#ffffff"/><stop offset="0.0383" stop-color="#faff71"/><stop offset="0.0783" stop-color="#f7ff00"/><stop offset="0.0950" stop-color="#f6ff00"/></radialGradient><radialGradient id="w183" gradientUnits="userSpaceOnUse" cx="1230.46" cy="197.33" r="900"><stop offset="0.0000" stop-color="#ffffff"/><stop offset="0.0400" stop-color="#feff6c"/><stop offset="0.0783" stop-color="#feff00"/><stop offset="0.0950" stop-color="#feff00"/></radialGradient><radialGradient id="w184" gradientUnits="userSpaceOnUse" cx="1230.46" cy="197.33" r="900"><stop offset="0.0000" stop-color="#ffffff"/><stop offset="0.0383" stop-color="#fffc70"/><stop offset="0.0767" stop-color="#fff902"/><stop offset="0.0950" stop-color="#fff800"/></radialGradient><radialGradient id="w185" gradientUnits="userSpaceOnUse" cx="1230.46" cy="197.33" r="900"><stop offset="0.0000" stop-color="#ffffff"/><stop offset="0.0367" stop-color="#fff874"/><stop offset="0.0767" stop-color="#fff202"/><stop offset="0.0950" stop-color="#fff000"/></radialGradient><radialGradient id="w186" gradientUnits="userSpaceOnUse" cx="1230.46" cy="197.33" r="900"><stop offset="0.0000" stop-color="#ffffff"/><stop offset="0.0350" stop-color="#fff579"/><stop offset="0.0767" stop-color="#ffeb02"/><stop offset="0.0950" stop-color="#ffe900"/></radialGradient><radialGradient id="w187" gradientUnits="userSpaceOnUse" cx="1230.46" cy="197.33" r="900"><stop offset="0.0000" stop-color="#ffffff"/><stop offset="0.0333" stop-color="#fff27d"/><stop offset="0.0750" stop-color="#ffe506"/><stop offset="0.0900" stop-color="#ffe200"/><stop offset="0.0950" stop-color="#ffe200"/></radialGradient><radialGradient id="w188" gradientUnits="userSpaceOnUse" cx="1230.46" cy="197.33" r="900"><stop offset="0.0000" stop-color="#ffffff"/><stop offset="0.0317" stop-color="#ffef82"/><stop offset="0.0717" stop-color="#ffe10f"/><stop offset="0.0817" stop-color="#ffde00"/><stop offset="0.0950" stop-color="#ffdb00"/></radialGradient><radialGradient id="w189" gradientUnits="userSpaceOnUse" cx="1230.46" cy="197.33" r="900"><stop offset="0.0000" stop-color="#ffffff"/><stop offset="0.0317" stop-color="#ffec81"/><stop offset="0.0717" stop-color="#ffdb0f"/><stop offset="0.0800" stop-color="#ffd800"/><stop offset="0.0950" stop-color="#ffd400"/></radialGradient><radialGradient id="w190" gradientUnits="userSpaceOnUse" cx="1230.46" cy="197.33" r="900"><stop offset="0.0000" stop-color="#ffffff"/><stop offset="0.0300" stop-color="#ffea86"/><stop offset="0.0683" stop-color="#ffd718"/><stop offset="0.0800" stop-color="#ffd200"/><stop offset="0.0950" stop-color="#ffce00"/></radialGradient><radialGradient id="w191" gradientUnits="userSpaceOnUse" cx="1230.46" cy="197.33" r="900"><stop offset="0.0000" stop-color="#ffffff"/><stop offset="0.0283" stop-color="#ffe98b"/><stop offset="0.0650" stop-color="#ffd420"/><stop offset="0.0800" stop-color="#ffcd00"/><stop offset="0.0967" stop-color="#ffc800"/></radialGradient><radialGradient id="w192" gradientUnits="userSpaceOnUse" cx="1230.46" cy="197.33" r="900"><stop offset="0.0000" stop-color="#ffffff"/><stop offset="0.0283" stop-color="#ffe68a"/><stop offset="0.0650" stop-color="#ffcf20"/><stop offset="0.0817" stop-color="#ffc700"/><stop offset="0.0967" stop-color="#ffc200"/></radialGradient><radialGradient id="w193" gradientUnits="userSpaceOnUse" cx="1230.46" cy="197.33" r="900"><stop offset="0.0000" stop-color="#ffffff"/><stop offset="0.0267" stop-color="#ffe590"/><stop offset="0.0617" stop-color="#ffcc29"/><stop offset="0.0817" stop-color="#ffc200"/><stop offset="0.0967" stop-color="#ffbd00"/></radialGradient><radialGradient id="w194" gradientUnits="userSpaceOnUse" cx="1230.46" cy="197.33" r="900"><stop offset="0.0000" stop-color="#ffffff"/><stop offset="0.0267" stop-color="#ffe28f"/><stop offset="0.0617" stop-color="#ffc829"/><stop offset="0.0817" stop-color="#ffbd00"/><stop offset="0.0983" stop-color="#ffb700"/></radialGradient><radialGradient id="w195" gradientUnits="userSpaceOnUse" cx="1230.46" cy="197.33" r="900"><stop offset="0.0000" stop-color="#ffffff"/><stop offset="0.0267" stop-color="#ffe08f"/><stop offset="0.0617" stop-color="#ffc42a"/><stop offset="0.0833" stop-color="#ffb700"/><stop offset="0.0983" stop-color="#ffb100"/></radialGradient><radialGradient id="w196" gradientUnits="userSpaceOnUse" cx="1230.46" cy="197.33" r="900"><stop offset="0.0000" stop-color="#ffffff"/><stop offset="0.0250" stop-color="#ffdf94"/><stop offset="0.0583" stop-color="#ffc232"/><stop offset="0.0833" stop-color="#ffb300"/><stop offset="0.1000" stop-color="#ffac00"/></radialGradient><radialGradient id="w197" gradientUnits="userSpaceOnUse" cx="1230.46" cy="197.33" r="900"><stop offset="0.0000" stop-color="#ffffff"/><stop offset="0.0250" stop-color="#ffdd94"/><stop offset="0.0583" stop-color="#ffbf33"/><stop offset="0.0850" stop-color="#ffad00"/><stop offset="0.1000" stop-color="#ffa700"/></radialGradient><radialGradient id="w198" gradientUnits="userSpaceOnUse" cx="1230.46" cy="197.33" r="900"><stop offset="0.0000" stop-color="#ffffff"/><stop offset="0.0250" stop-color="#ffdb94"/><stop offset="0.0583" stop-color="#ffbb34"/><stop offset="0.0850" stop-color="#ffa900"/><stop offset="0.1017" stop-color="#ffa200"/></radialGradient><radialGradient id="w199" gradientUnits="userSpaceOnUse" cx="1230.46" cy="197.33" r="900"><stop offset="0.0000" stop-color="#ffffff"/><stop offset="0.0233" stop-color="#ffdb9a"/><stop offset="0.0550" stop-color="#ffba3c"/><stop offset="0.0867" stop-color="#ffa400"/><stop offset="0.1017" stop-color="#ff9d00"/></radialGradient><radialGradient id="w200" gradientUnits="userSpaceOnUse" cx="1230.46" cy="197.33" r="900"><stop offset="0.0000" stop-color="#ffffff"/><stop offset="0.0233" stop-color="#ffd999"/><stop offset="0.0550" stop-color="#ffb73d"/><stop offset="0.0867" stop-color="#ffa000"/><stop offset="0.1033" stop-color="#ff9800"/></radialGradient><radialGradient id="w201" gradientUnits="userSpaceOnUse" cx="1230.46" cy="197.33" r="900"><stop offset="0.0000" stop-color="#ffffff"/><stop offset="0.0233" stop-color="#ffd899"/><stop offset="0.0550" stop-color="#ffb43e"/><stop offset="0.0883" stop-color="#ff9b00"/><stop offset="0.1050" stop-color="#ff9300"/></radialGradient><radialGradient id="w202" gradientUnits="userSpaceOnUse" cx="1230.46" cy="197.33" r="900"><stop offset="0.0000" stop-color="#ffffff"/><stop offset="0.0233" stop-color="#ffd699"/><stop offset="0.0533" stop-color="#ffb242"/><stop offset="0.0883" stop-color="#ff9700"/><stop offset="0.1067" stop-color="#ff8e00"/></radialGradient><radialGradient id="w203" gradientUnits="userSpaceOnUse" cx="1230.46" cy="197.33" r="900"><stop offset="0.0000" stop-color="#ffffff"/><stop offset="0.0217" stop-color="#ffd79f"/><stop offset="0.0517" stop-color="#ffb147"/><stop offset="0.0900" stop-color="#ff9200"/><stop offset="0.1067" stop-color="#ff8a00"/></radialGradient><radialGradient id="w204" gradientUnits="userSpaceOnUse" cx="1230.46" cy="197.33" r="900"><stop offset="0.0000" stop-color="#ffffff"/><stop offset="0.0217" stop-color="#ffd59f"/><stop offset="0.0517" stop-color="#ffae48"/><stop offset="0.0900" stop-color="#ff8f01"/><stop offset="0.1083" stop-color="#ff8600"/></radialGradient><radialGradient id="w205" gradientUnits="userSpaceOnUse" cx="1230.46" cy="197.33" r="900"><stop offset="0.0000" stop-color="#ffffff"/><stop offset="0.0217" stop-color="#ffd39f"/><stop offset="0.0517" stop-color="#ffac49"/><stop offset="0.0917" stop-color="#ff8a00"/><stop offset="0.1100" stop-color="#ff8100"/></radialGradient><radialGradient id="w206" gradientUnits="userSpaceOnUse" cx="1230.46" cy="197.33" r="900"><stop offset="0.0000" stop-color="#ffffff"/><stop offset="0.0217" stop-color="#ffd2a0"/><stop offset="0.0517" stop-color="#ffa94a"/><stop offset="0.0933" stop-color="#ff8600"/><stop offset="0.1117" stop-color="#ff7d00"/></radialGradient><radialGradient id="w207" gradientUnits="userSpaceOnUse" cx="1230.46" cy="197.33" r="900"><stop offset="0.0000" stop-color="#ffffff"/><stop offset="0.0217" stop-color="#ffd0a0"/><stop offset="0.0517" stop-color="#ffa64b"/><stop offset="0.0950" stop-color="#ff8200"/><stop offset="0.1150" stop-color="#ff7800"/></radialGradient><radialGradient id="w208" gradientUnits="userSpaceOnUse" cx="1230.46" cy="197.33" r="900"><stop offset="0.0000" stop-color="#ffffff"/><stop offset="0.0217" stop-color="#ffcfa0"/><stop offset="0.0517" stop-color="#ffa44c"/><stop offset="0.0950" stop-color="#ff7f03"/><stop offset="0.1167" stop-color="#ff7400"/></radialGradient><radialGradient id="w209" gradientUnits="userSpaceOnUse" cx="1230.46" cy="197.33" r="900"><stop offset="0.0000" stop-color="#ffffff"/><stop offset="0.0200" stop-color="#ffd0a6"/><stop offset="0.0483" stop-color="#ffa555"/><stop offset="0.0900" stop-color="#ff7f0c"/><stop offset="0.1067" stop-color="#ff7400"/><stop offset="0.1183" stop-color="#ff6f00"/></radialGradient><radialGradient id="w210" gradientUnits="userSpaceOnUse" cx="1230.46" cy="197.33" r="900"><stop offset="0.0000" stop-color="#ffffff"/><stop offset="0.0200" stop-color="#ffcfa7"/><stop offset="0.0483" stop-color="#ffa356"/><stop offset="0.0900" stop-color="#ff7c0e"/><stop offset="0.1067" stop-color="#ff7100"/><stop offset="0.1217" stop-color="#ff6b00"/></radialGradient><radialGradient id="w211" gradientUnits="userSpaceOnUse" cx="1230.46" cy="197.33" r="900"><stop offset="0.0000" stop-color="#ffffff"/><stop offset="0.0200" stop-color="#ffcea7"/><stop offset="0.0483" stop-color="#ffa157"/><stop offset="0.0900" stop-color="#ff7911"/><stop offset="0.1100" stop-color="#ff6c00"/><stop offset="0.1233" stop-color="#ff6700"/></radialGradient><radialGradient id="w212" gradientUnits="userSpaceOnUse" cx="1230.46" cy="197.33" r="900"><stop offset="0.0000" stop-color="#ffffff"/><stop offset="0.0200" stop-color="#ffcca7"/><stop offset="0.0483" stop-color="#ff9f58"/><stop offset="0.0900" stop-color="#ff7713"/><stop offset="0.1117" stop-color="#ff6900"/><stop offset="0.1267" stop-color="#ff6200"/></radialGradient><radialGradient id="w213" gradientUnits="userSpaceOnUse" cx="1230.46" cy="197.33" r="900"><stop offset="0.0000" stop-color="#ffffff"/><stop offset="0.0200" stop-color="#ffcba8"/><stop offset="0.0483" stop-color="#ff9d5a"/><stop offset="0.0900" stop-color="#ff7415"/><stop offset="0.1150" stop-color="#ff6400"/><stop offset="0.1300" stop-color="#ff5e00"/></radialGradient><radialGradient id="w214" gradientUnits="userSpaceOnUse" cx="1230.46" cy="197.33" r="900"><stop offset="0.0000" stop-color="#ffffff"/><stop offset="0.0200" stop-color="#ffcaa8"/><stop offset="0.0483" stop-color="#ff9b5b"/><stop offset="0.0917" stop-color="#ff7016"/><stop offset="0.1167" stop-color="#ff6000"/><stop offset="0.1333" stop-color="#ff5900"/></radialGradient><radialGradient id="w215" gradientUnits="userSpaceOnUse" cx="1230.46" cy="197.33" r="900"><stop offset="0.0000" stop-color="#ffffff"/><stop offset="0.0200" stop-color="#ffc9a9"/><stop offset="0.0483" stop-color="#ff995d"/><stop offset="0.0917" stop-color="#ff6e18"/><stop offset="0.1200" stop-color="#ff5c00"/><stop offset="0.1367" stop-color="#ff5500"/></radialGradient><radialGradient id="w216" gradientUnits="userSpaceOnUse" cx="1230.46" cy="197.33" r="900"><stop offset="0.0000" stop-color="#ffffff"/><stop offset="0.0200" stop-color="#ffc8aa"/><stop offset="0.0483" stop-color="#ff975e"/><stop offset="0.0917" stop-color="#ff6c1b"/><stop offset="0.1233" stop-color="#ff5800"/><stop offset="0.1400" stop-color="#ff5100"/></radialGradient><radialGradient id="w217" gradientUnits="userSpaceOnUse" cx="1230.46" cy="197.33" r="900"><stop offset="0.0000" stop-color="#ffffff"/><stop offset="0.0200" stop-color="#ffc7aa"/><stop offset="0.0483" stop-color="#ff9560"/><stop offset="0.0917" stop-color="#ff691e"/><stop offset="0.1283" stop-color="#ff5300"/><stop offset="0.1450" stop-color="#ff4c00"/></radialGradient><radialGradient id="w218" gradientUnits="userSpaceOnUse" cx="1230.46" cy="197.33" r="900"><stop offset="0.0000" stop-color="#ffffff"/><stop offset="0.0200" stop-color="#ffc6ab"/><stop offset="0.0483" stop-color="#ff9361"/><stop offset="0.0917" stop-color="#ff6720"/><stop offset="0.1317" stop-color="#ff4f00"/><stop offset="0.1500" stop-color="#ff4800"/></radialGradient><radialGradient id="w219" gradientUnits="userSpaceOnUse" cx="1230.46" cy="197.33" r="900"><stop offset="0.0000" stop-color="#ffffff"/><stop offset="0.0200" stop-color="#ffc5ac"/><stop offset="0.0483" stop-color="#ff9263"/><stop offset="0.0917" stop-color="#ff6523"/><stop offset="0.1367" stop-color="#ff4a00"/><stop offset="0.1550" stop-color="#ff4300"/></radialGradient><radialGradient id="w220" gradientUnits="userSpaceOnUse" cx="1230.46" cy="197.33" r="900"><stop offset="0.0000" stop-color="#ffffff"/><stop offset="0.0200" stop-color="#ffc4ac"/><stop offset="0.0483" stop-color="#ff9065"/><stop offset="0.0933" stop-color="#ff6224"/><stop offset="0.1417" stop-color="#ff4500"/><stop offset="0.1600" stop-color="#ff3f00"/></radialGradient><radialGradient id="w221" gradientUnits="userSpaceOnUse" cx="1230.46" cy="197.33" r="900"><stop offset="0.0000" stop-color="#ffffff"/><stop offset="0.0200" stop-color="#ffc3ad"/><stop offset="0.0483" stop-color="#ff8f66"/><stop offset="0.0933" stop-color="#ff6027"/><stop offset="0.1467" stop-color="#ff4100"/><stop offset="0.1650" stop-color="#ff3b00"/></radialGradient><radialGradient id="w222" gradientUnits="userSpaceOnUse" cx="1230.46" cy="197.33" r="900"><stop offset="0.0000" stop-color="#ffffff"/><stop offset="0.0200" stop-color="#ffc2ae"/><stop offset="0.0483" stop-color="#ff8d68"/><stop offset="0.0933" stop-color="#ff5e2a"/><stop offset="0.1517" stop-color="#ff3d00"/><stop offset="0.1717" stop-color="#ff3600"/></radialGradient><radialGradient id="w223" gradientUnits="userSpaceOnUse" cx="1230.46" cy="197.33" r="900"><stop offset="0.0000" stop-color="#ffffff"/><stop offset="0.0200" stop-color="#ffc1af"/><stop offset="0.0500" stop-color="#ff8967"/><stop offset="0.0967" stop-color="#ff5929"/><stop offset="0.1583" stop-color="#ff3800"/><stop offset="0.1800" stop-color="#ff3100"/></radialGradient><radialGradient id="w224" gradientUnits="userSpaceOnUse" cx="1230.46" cy="197.33" r="900"><stop offset="0.0000" stop-color="#ffffff"/><stop offset="0.0200" stop-color="#ffc0b0"/><stop offset="0.0500" stop-color="#ff8869"/><stop offset="0.0967" stop-color="#ff582c"/><stop offset="0.1650" stop-color="#ff3300"/><stop offset="0.1867" stop-color="#ff2d00"/></radialGradient><radialGradient id="w225" gradientUnits="userSpaceOnUse" cx="1230.46" cy="197.33" r="900"><stop offset="0.0000" stop-color="#ffffff"/><stop offset="0.0200" stop-color="#ffbfb1"/><stop offset="0.0500" stop-color="#ff866b"/><stop offset="0.0967" stop-color="#ff562f"/><stop offset="0.1717" stop-color="#ff2f00"/><stop offset="0.1967" stop-color="#ff2800"/></radialGradient><radialGradient id="w226" gradientUnits="userSpaceOnUse" cx="1230.46" cy="197.33" r="900"><stop offset="0.0000" stop-color="#ffffff"/><stop offset="0.0200" stop-color="#ffbfb2"/><stop offset="0.0500" stop-color="#ff856d"/><stop offset="0.0983" stop-color="#ff5331"/><stop offset="0.1783" stop-color="#ff2a00"/><stop offset="0.2067" stop-color="#ff2300"/></radialGradient><radialGradient id="w227" gradientUnits="userSpaceOnUse" cx="1230.46" cy="197.33" r="900"><stop offset="0.0000" stop-color="#ffffff"/><stop offset="0.0200" stop-color="#ffbeb3"/><stop offset="0.0500" stop-color="#ff846f"/><stop offset="0.0983" stop-color="#ff5134"/><stop offset="0.1817" stop-color="#ff2703"/><stop offset="0.2183" stop-color="#ff1d00"/></radialGradient><radialGradient id="w228" gradientUnits="userSpaceOnUse" cx="1230.46" cy="197.33" r="900"><stop offset="0.0000" stop-color="#ffffff"/><stop offset="0.0200" stop-color="#ffbdb4"/><stop offset="0.0500" stop-color="#ff8371"/><stop offset="0.0983" stop-color="#ff5037"/><stop offset="0.1833" stop-color="#ff2506"/><stop offset="0.2300" stop-color="#ff1900"/></radialGradient><radialGradient id="w229" gradientUnits="userSpaceOnUse" cx="1230.46" cy="197.33" r="900"><stop offset="0.0000" stop-color="#ffffff"/><stop offset="0.0200" stop-color="#ffbdb5"/><stop offset="0.0500" stop-color="#ff8273"/><stop offset="0.0983" stop-color="#ff4e3a"/><stop offset="0.1850" stop-color="#ff230a"/><stop offset="0.2450" stop-color="#ff1300"/></radialGradient><radialGradient id="w230" gradientUnits="userSpaceOnUse" cx="1230.46" cy="197.33" r="900"><stop offset="0.0000" stop-color="#ffffff"/><stop offset="0.0217" stop-color="#ffb8b2"/><stop offset="0.0533" stop-color="#ff7c70"/><stop offset="0.1050" stop-color="#ff4838"/><stop offset="0.1983" stop-color="#ff1d09"/><stop offset="0.2617" stop-color="#ff0e00"/></radialGradient><radialGradient id="w231" gradientUnits="userSpaceOnUse" cx="1230.46" cy="197.33" r="900"><stop offset="0.0000" stop-color="#ffffff"/><stop offset="0.0217" stop-color="#ffb7b3"/><stop offset="0.0533" stop-color="#ff7b73"/><stop offset="0.1067" stop-color="#ff453a"/><stop offset="0.2017" stop-color="#ff1a0d"/><stop offset="0.2783" stop-color="#ff0900"/><stop offset="0.2800" stop-color="#ff0900"/></radialGradient><radialGradient id="w232" gradientUnits="userSpaceOnUse" cx="1230.46" cy="197.33" r="900"><stop offset="0.0000" stop-color="#ffffff"/><stop offset="0.0217" stop-color="#ffb6b4"/><stop offset="0.0550" stop-color="#ff7773"/><stop offset="0.1100" stop-color="#ff423c"/><stop offset="0.2100" stop-color="#ff160e"/><stop offset="0.3017" stop-color="#ff0300"/><stop offset="0.3033" stop-color="#ff0300"/></radialGradient><radialGradient id="w233" gradientUnits="userSpaceOnUse" cx="1230.46" cy="197.33" r="900"><stop offset="0.0000" stop-color="#ffffff"/><stop offset="0.0217" stop-color="#ffb6b5"/><stop offset="0.0550" stop-color="#ff7675"/><stop offset="0.1100" stop-color="#ff403f"/><stop offset="0.2117" stop-color="#ff1412"/><stop offset="0.3283" stop-color="#ff0000"/><stop offset="0.3300" stop-color="#ff0000"/></radialGradient><radialGradient id="w234" gradientUnits="userSpaceOnUse" cx="1230.46" cy="197.33" r="900"><stop offset="0.0000" stop-color="#ffffff"/><stop offset="0.0217" stop-color="#ffb5b7"/><stop offset="0.0550" stop-color="#ff7578"/><stop offset="0.1100" stop-color="#ff3f43"/><stop offset="0.2117" stop-color="#ff1217"/><stop offset="0.3267" stop-color="#ff0000"/><stop offset="0.3617" stop-color="#ff0000"/></radialGradient><radialGradient id="w235" gradientUnits="userSpaceOnUse" cx="1230.46" cy="197.33" r="900"><stop offset="0.0000" stop-color="#ffffff"/><stop offset="0.0217" stop-color="#ffb5b8"/><stop offset="0.0550" stop-color="#ff747b"/><stop offset="0.1100" stop-color="#ff3e47"/><stop offset="0.2117" stop-color="#ff111b"/><stop offset="0.3167" stop-color="#ff0007"/><stop offset="0.4017" stop-color="#ff0000"/></radialGradient><radialGradient id="w236" gradientUnits="userSpaceOnUse" cx="1230.46" cy="197.33" r="900"><stop offset="0.0000" stop-color="#ffffff"/><stop offset="0.0217" stop-color="#ffb5ba"/><stop offset="0.0550" stop-color="#ff747d"/><stop offset="0.1100" stop-color="#ff3d4a"/><stop offset="0.2100" stop-color="#ff1020"/><stop offset="0.3067" stop-color="#ff000d"/><stop offset="0.4517" stop-color="#ff0000"/></radialGradient><radialGradient id="w237" gradientUnits="userSpaceOnUse" cx="1230.46" cy="197.33" r="900"><stop offset="0.0000" stop-color="#ffffff"/><stop offset="0.0217" stop-color="#ffb4bb"/><stop offset="0.0550" stop-color="#ff7380"/><stop offset="0.1100" stop-color="#ff3b4e"/><stop offset="0.2100" stop-color="#ff0e25"/><stop offset="0.3000" stop-color="#ff0013"/><stop offset="0.5050" stop-color="#ff0000"/></radialGradient><radialGradient id="w238" gradientUnits="userSpaceOnUse" cx="1230.46" cy="197.33" r="900"><stop offset="0.0000" stop-color="#ffffff"/><stop offset="0.0217" stop-color="#ffb4bd"/><stop offset="0.0550" stop-color="#ff7283"/><stop offset="0.1083" stop-color="#ff3c53"/><stop offset="0.2067" stop-color="#ff0e2b"/><stop offset="0.2917" stop-color="#ff0019"/><stop offset="0.4917" stop-color="#ff0005"/></radialGradient><radialGradient id="w239" gradientUnits="userSpaceOnUse" cx="1230.46" cy="197.33" r="900"><stop offset="0.0000" stop-color="#ffffff"/><stop offset="0.0217" stop-color="#ffb4be"/><stop offset="0.0533" stop-color="#ff7488"/><stop offset="0.1067" stop-color="#ff3c58"/><stop offset="0.2033" stop-color="#ff0d30"/><stop offset="0.2833" stop-color="#ff0020"/><stop offset="0.4783" stop-color="#ff000c"/></radialGradient></defs>
<g clip-path="url(#plotclip)"><g clip-path="url(#locclip)"><path d="M1230.5,197.3L2130,194L2130,224Z" fill="url(#w0)" shape-rendering="crispEdges"/><path d="M1230.5,197.3L2130,217L2129,248Z" fill="url(#w1)" shape-rendering="crispEdges"/><path d="M1230.5,197.3L2129,241L2127,272Z" fill="url(#w2)" shape-rendering="crispEdges"/><path d="M1230.5,197.3L2128,264L2125,295Z" fill="url(#w3)" shape-rendering="crispEdges"/><path d="M1230.5,197.3L2126,288L2122,318Z" fill="url(#w4)" shape-rendering="crispEdges"/><path d="M1230.5,197.3L2123,311L2119,342Z" fill="url(#w5)" shape-rendering="crispEdges"/><path d="M1230.5,197.3L2120,335L2115,365Z" fill="url(#w6)" shape-rendering="crispEdges"/><path d="M1230.5,197.3L2116,358L2110,388Z" fill="url(#w7)" shape-rendering="crispEdges"/><path d="M1230.5,197.3L2112,381L2105,411Z" fill="url(#w8)" shape-rendering="crispEdges"/><path d="M1230.5,197.3L2106,404L2099,434Z" fill="url(#w9)" shape-rendering="crispEdges"/><path d="M1230.5,197.3L2101,427L2092,456Z" fill="url(#w10)" shape-rendering="crispEdges"/><path d="M1230.5,197.3L2094,449L2085,479Z" fill="url(#w11)" shape-rendering="crispEdges"/><path d="M1230.5,197.3L2088,472L2078,501Z" fill="url(#w12)" shape-rendering="crispEdges"/><path d="M1230.5,197.3L2080,494L2069,523Z" fill="url(#w13)" shape-rendering="crispEdges"/><path d="M1230.5,197.3L2072,516L2061,545Z" fill="url(#w14)" shape-rendering="crispEdges"/><path d="M1230.5,197.3L2063,538L2051,567Z" fill="url(#w15)" shape-rendering="crispEdges"/><path d="M1230.5,197.3L2054,560L2041,588Z" fill="url(#w16)" shape-rendering="crispEdges"/><path d="M1230.5,197.3L2044,582L2031,609Z" fill="url(#w17)" shape-rendering="crispEdges"/><path d="M1230.5,197.3L2034,603L2020,630Z" fill="url(#w18)" shape-rendering="crispEdges"/><path d="M1230.5,197.3L2023,624L2008,650Z" fill="url(#w19)" shape-rendering="crispEdges"/><path d="M1230.5,197.3L2012,644L1996,671Z" fill="url(#w20)" shape-rendering="crispEdges"/><path d="M1230.5,197.3L2000,665L1983,691Z" fill="url(#w21)" shape-rendering="crispEdges"/><path d="M1230.5,197.3L1987,684L1970,710Z" fill="url(#w22)" shape-rendering="crispEdges"/><path d="M1230.5,197.3L1974,704L1956,729Z" fill="url(#w23)" shape-rendering="crispEdges"/><path d="M1230.5,197.3L1961,723L1942,748Z" fill="url(#w24)" shape-rendering="crispEdges"/><path d="M1230.5,197.3L1947,742L1928,767Z" fill="url(#w25)" shape-rendering="crispEdges"/><path d="M1230.5,197.3L1932,761L1912,785Z" fill="url(#w26)" shape-rendering="crispEdges"/><path d="M1230.5,197.3L1917,779L1897,802Z" fill="url(#w27)" shape-rendering="crispEdges"/><path d="M1230.5,197.3L1902,797L1881,819Z" fill="url(#w28)" shape-rendering="crispEdges"/><path d="M1230.5,197.3L1886,814L1864,836Z" fill="url(#w29)" shape-rendering="crispEdges"/><path d="M1230.5,197.3L1869,831L1847,853Z" fill="url(#w30)" shape-rendering="crispEdges"/><path d="M1230.5,197.3L1853,848L1830,869Z" fill="url(#w31)" shape-rendering="crispEdges"/><path d="M1230.5,197.3L1835,864L1812,884Z" fill="url(#w32)" shape-rendering="crispEdges"/><path d="M1230.5,197.3L1818,879L1794,899Z" fill="url(#w33)" shape-rendering="crispEdges"/><path d="M1230.5,197.3L1800,894L1775,914Z" fill="url(#w34)" shape-rendering="crispEdges"/><path d="M1230.5,197.3L1781,909L1757,928Z" fill="url(#w35)" shape-rendering="crispEdges"/><path d="M1230.5,197.3L1762,923L1737,941Z" fill="url(#w36)" shape-rendering="crispEdges"/><path d="M1230.5,197.3L1743,937L1718,954Z" fill="url(#w37)" shape-rendering="crispEdges"/><path d="M1230.5,197.3L1724,950L1698,967Z" fill="url(#w38)" shape-rendering="crispEdges"/><path d="M1230.5,197.3L1704,963L1677,979Z" fill="url(#w39)" shape-rendering="crispEdges"/><path d="M1230.5,197.3L1684,975L1657,990Z" fill="url(#w40)" shape-rendering="crispEdges"/><path d="M1230.5,197.3L1663,987L1636,1001Z" fill="url(#w41)" shape-rendering="crispEdges"/><path d="M1230.5,197.3L1642,998L1615,1011Z" fill="url(#w42)" shape-rendering="crispEdges"/><path d="M1230.5,197.3L1621,1008L1593,1021Z" fill="url(#w43)" shape-rendering="crispEdges"/><path d="M1230.5,197.3L1600,1018L1572,1030Z" fill="url(#w44)" shape-rendering="crispEdges"/><path d="M1230.5,197.3L1578,1027L1550,1039Z" fill="url(#w45)" shape-rendering="crispEdges"/><path d="M1230.5,197.3L1556,1036L1527,1047Z" fill="url(#w46)" shape-rendering="crispEdges"/><path d="M1230.5,197.3L1534,1044L1505,1054Z" fill="url(#w47)" shape-rendering="crispEdges"/><path d="M1230.5,197.3L1512,1052L1483,1061Z" fill="url(#w48)" shape-rendering="crispEdges"/><path d="M1230.5,197.3L1490,1059L1460,1068Z" fill="url(#w49)" shape-rendering="crispEdges"/><path d="M1230.5,197.3L1467,1066L1437,1073Z" fill="url(#w50)" shape-rendering="crispEdges"/><path d="M1230.5,197.3L1444,1072L1414,1078Z" fill="url(#w51)" shape-rendering="crispEdges"/><path d="M1230.5,197.3L1421,1077L1391,1083Z" fill="url(#w52)" shape-rendering="crispEdges"/><path d="M1230.5,197.3L1398,1082L1368,1087Z" fill="url(#w53)" shape-rendering="crispEdges"/><path d="M1230.5,197.3L1375,1086L1344,1090Z" fill="url(#w54)" shape-rendering="crispEdges"/><path d="M1230.5,197.3L1351,1089L1321,1093Z" fill="url(#w55)" shape-rendering="crispEdges"/><path d="M1230.5,197.3L1328,1092L1297,1095Z" fill="url(#w56)" shape-rendering="crispEdges"/><path d="M1230.5,197.3L1305,1094L1274,1096Z" fill="url(#w57)" shape-rendering="crispEdges"/><path d="M1230.5,197.3L1281,1096L1250,1097Z" fill="url(#w58)" shape-rendering="crispEdges"/><path d="M1230.5,197.3L1258,1097L1227,1097Z" fill="url(#w59)" shape-rendering="crispEdges"/><path d="M1230.5,197.3L1234,1097L1203,1097Z" fill="url(#w60)" shape-rendering="crispEdges"/><path d="M1230.5,197.3L1210,1097L1180,1096Z" fill="url(#w61)" shape-rendering="crispEdges"/><path d="M1230.5,197.3L1187,1096L1156,1094Z" fill="url(#w62)" shape-rendering="crispEdges"/><path d="M1230.5,197.3L1163,1095L1133,1092Z" fill="url(#w63)" shape-rendering="crispEdges"/><path d="M1230.5,197.3L1140,1093L1109,1089Z" fill="url(#w64)" shape-rendering="crispEdges"/><path d="M1230.5,197.3L1117,1090L1086,1086Z" fill="url(#w65)" shape-rendering="crispEdges"/><path d="M1230.5,197.3L1093,1087L1063,1082Z" fill="url(#w66)" shape-rendering="crispEdges"/><path d="M1230.5,197.3L1070,1083L1040,1077Z" fill="url(#w67)" shape-rendering="crispEdges"/><path d="M1230.5,197.3L1047,1078L1017,1072Z" fill="url(#w68)" shape-rendering="crispEdges"/><path d="M1230.5,197.3L1024,1073L994,1066Z" fill="url(#w69)" shape-rendering="crispEdges"/><path d="M1230.5,197.3L1001,1068L971,1059Z" fill="url(#w70)" shape-rendering="crispEdges"/><path d="M1230.5,197.3L978,1061L949,1052Z" fill="url(#w71)" shape-rendering="crispEdges"/><path d="M1230.5,197.3L956,1054L927,1044Z" fill="url(#w72)" shape-rendering="crispEdges"/><path d="M1230.5,197.3L933,1047L905,1036Z" fill="url(#w73)" shape-rendering="crispEdges"/><path d="M1230.5,197.3L911,1039L883,1027Z" fill="url(#w74)" shape-rendering="crispEdges"/><path d="M1230.5,197.3L889,1030L861,1018Z" fill="url(#w75)" shape-rendering="crispEdges"/><path d="M1230.5,197.3L868,1021L840,1008Z" fill="url(#w76)" shape-rendering="crispEdges"/><path d="M1230.5,197.3L846,1011L819,998Z" fill="url(#w77)" shape-rendering="crispEdges"/><path d="M1230.5,197.3L825,1001L798,987Z" fill="url(#w78)" shape-rendering="crispEdges"/><path d="M1230.5,197.3L804,990L777,975Z" fill="url(#w79)" shape-rendering="crispEdges"/><path d="M1230.5,197.3L784,979L757,963Z" fill="url(#w80)" shape-rendering="crispEdges"/><path d="M1230.5,197.3L763,967L737,950Z" fill="url(#w81)" shape-rendering="crispEdges"/><path d="M1230.5,197.3L743,954L718,937Z" fill="url(#w82)" shape-rendering="crispEdges"/><path d="M1230.5,197.3L724,941L699,923Z" fill="url(#w83)" shape-rendering="crispEdges"/><path d="M1230.5,197.3L704,928L680,909Z" fill="url(#w84)" shape-rendering="crispEdges"/><path d="M1230.5,197.3L685,914L661,894Z" fill="url(#w85)" shape-rendering="crispEdges"/><path d="M1230.5,197.3L667,899L643,879Z" fill="url(#w86)" shape-rendering="crispEdges"/><path d="M1230.5,197.3L649,884L626,864Z" fill="url(#w87)" shape-rendering="crispEdges"/><path d="M1230.5,197.3L631,869L608,848Z" fill="url(#w88)" shape-rendering="crispEdges"/><path d="M1230.5,197.3L614,853L592,831Z" fill="url(#w89)" shape-rendering="crispEdges"/><path d="M1230.5,197.3L597,836L575,814Z" fill="url(#w90)" shape-rendering="crispEdges"/><path d="M1230.5,197.3L580,819L559,797Z" fill="url(#w91)" shape-rendering="crispEdges"/><path d="M1230.5,197.3L564,802L544,779Z" fill="url(#w92)" shape-rendering="crispEdges"/><path d="M1230.5,197.3L548,785L529,761Z" fill="url(#w93)" shape-rendering="crispEdges"/><path d="M1230.5,197.3L533,767L514,742Z" fill="url(#w94)" shape-rendering="crispEdges"/><path d="M1230.5,197.3L519,748L500,723Z" fill="url(#w95)" shape-rendering="crispEdges"/><path d="M1230.5,197.3L504,729L487,704Z" fill="url(#w96)" shape-rendering="crispEdges"/><path d="M1230.5,197.3L491,710L474,684Z" fill="url(#w97)" shape-rendering="crispEdges"/><path d="M1230.5,197.3L478,691L461,665Z" fill="url(#w98)" shape-rendering="crispEdges"/><path d="M1230.5,197.3L465,671L449,644Z" fill="url(#w99)" shape-rendering="crispEdges"/><path d="M1230.5,197.3L453,650L438,624Z" fill="url(#w100)" shape-rendering="crispEdges"/><path d="M1230.5,197.3L441,630L427,603Z" fill="url(#w101)" shape-rendering="crispEdges"/><path d="M1230.5,197.3L430,609L417,582Z" fill="url(#w102)" shape-rendering="crispEdges"/><path d="M1230.5,197.3L420,588L407,560Z" fill="url(#w103)" shape-rendering="crispEdges"/><path d="M1230.5,197.3L410,567L398,538Z" fill="url(#w104)" shape-rendering="crispEdges"/><path d="M1230.5,197.3L400,545L389,516Z" fill="url(#w105)" shape-rendering="crispEdges"/><path d="M1230.5,197.3L392,523L381,494Z" fill="url(#w106)" shape-rendering="crispEdges"/><path d="M1230.5,197.3L383,501L373,472Z" fill="url(#w107)" shape-rendering="crispEdges"/><path d="M1230.5,197.3L376,479L367,449Z" fill="url(#w108)" shape-rendering="crispEdges"/><path d="M1230.5,197.3L369,456L360,427Z" fill="url(#w109)" shape-rendering="crispEdges"/><path d="M1230.5,197.3L362,434L354,404Z" fill="url(#w110)" shape-rendering="crispEdges"/><path d="M1230.5,197.3L356,411L349,381Z" fill="url(#w111)" shape-rendering="crispEdges"/><path d="M1230.5,197.3L351,388L345,358Z" fill="url(#w112)" shape-rendering="crispEdges"/><path d="M1230.5,197.3L346,365L341,335Z" fill="url(#w113)" shape-rendering="crispEdges"/><path d="M1230.5,197.3L342,342L338,311Z" fill="url(#w114)" shape-rendering="crispEdges"/><path d="M1230.5,197.3L339,318L335,288Z" fill="url(#w115)" shape-rendering="crispEdges"/><path d="M1230.5,197.3L336,295L333,264Z" fill="url(#w116)" shape-rendering="crispEdges"/><path d="M1230.5,197.3L334,272L332,241Z" fill="url(#w117)" shape-rendering="crispEdges"/><path d="M1230.5,197.3L332,248L331,217Z" fill="url(#w118)" shape-rendering="crispEdges"/><path d="M1230.5,197.3L331,224L330,194Z" fill="url(#w119)" shape-rendering="crispEdges"/><path d="M1230.5,197.3L330,201L331,170Z" fill="url(#w120)" shape-rendering="crispEdges"/><path d="M1230.5,197.3L331,177L332,147Z" fill="url(#w121)" shape-rendering="crispEdges"/><path d="M1230.5,197.3L332,154L334,123Z" fill="url(#w122)" shape-rendering="crispEdges"/><path d="M1230.5,197.3L333,130L336,100Z" fill="url(#w123)" shape-rendering="crispEdges"/><path d="M1230.5,197.3L335,107L339,76Z" fill="url(#w124)" shape-rendering="crispEdges"/><path d="M1230.5,197.3L338,83L342,53Z" fill="url(#w125)" shape-rendering="crispEdges"/><path d="M1230.5,197.3L341,60L346,30Z" fill="url(#w126)" shape-rendering="crispEdges"/><path d="M1230.5,197.3L345,37L351,7Z" fill="url(#w127)" shape-rendering="crispEdges"/><path d="M1230.5,197.3L349,14L356,-16Z" fill="url(#w128)" shape-rendering="crispEdges"/><path d="M1230.5,197.3L354,-9L362,-39Z" fill="url(#w129)" shape-rendering="crispEdges"/><path d="M1230.5,197.3L360,-32L369,-62Z" fill="url(#w130)" shape-rendering="crispEdges"/><path d="M1230.5,197.3L367,-55L376,-84Z" fill="url(#w131)" shape-rendering="crispEdges"/><path d="M1230.5,197.3L373,-77L383,-106Z" fill="url(#w132)" shape-rendering="crispEdges"/><path d="M1230.5,197.3L381,-100L392,-129Z" fill="url(#w133)" shape-rendering="crispEdges"/><path d="M1230.5,197.3L389,-122L400,-150Z" fill="url(#w134)" shape-rendering="crispEdges"/><path d="M1230.5,197.3L398,-144L410,-172Z" fill="url(#w135)" shape-rendering="crispEdges"/><path d="M1230.5,197.3L407,-165L420,-193Z" fill="url(#w136)" shape-rendering="crispEdges"/><path d="M1230.5,197.3L417,-187L430,-214Z" fill="url(#w137)" shape-rendering="crispEdges"/><path d="M1230.5,197.3L427,-208L441,-235Z" fill="url(#w138)" shape-rendering="crispEdges"/><path d="M1230.5,197.3L438,-229L453,-256Z" fill="url(#w139)" shape-rendering="crispEdges"/><path d="M1230.5,197.3L449,-250L465,-276Z" fill="url(#w140)" shape-rendering="crispEdges"/><path d="M1230.5,197.3L461,-270L478,-296Z" fill="url(#w141)" shape-rendering="crispEdges"/><path d="M1230.5,197.3L474,-290L491,-315Z" fill="url(#w142)" shape-rendering="crispEdges"/><path d="M1230.5,197.3L487,-309L504,-335Z" fill="url(#w143)" shape-rendering="crispEdges"/><path d="M1230.5,197.3L500,-329L519,-353Z" fill="url(#w144)" shape-rendering="crispEdges"/><path d="M1230.5,197.3L514,-348L533,-372Z" fill="url(#w145)" shape-rendering="crispEdges"/><path d="M1230.5,197.3L529,-366L548,-390Z" fill="url(#w146)" shape-rendering="crispEdges"/><path d="M1230.5,197.3L544,-384L564,-408Z" fill="url(#w147)" shape-rendering="crispEdges"/><path d="M1230.5,197.3L559,-402L580,-425Z" fill="url(#w148)" shape-rendering="crispEdges"/><path d="M1230.5,197.3L575,-420L597,-442Z" fill="url(#w149)" shape-rendering="crispEdges"/><path d="M1230.5,197.3L592,-437L614,-458Z" fill="url(#w150)" shape-rendering="crispEdges"/><path d="M1230.5,197.3L608,-453L631,-474Z" fill="url(#w151)" shape-rendering="crispEdges"/><path d="M1230.5,197.3L626,-469L649,-489Z" fill="url(#w152)" shape-rendering="crispEdges"/><path d="M1230.5,197.3L643,-485L667,-504Z" fill="url(#w153)" shape-rendering="crispEdges"/><path d="M1230.5,197.3L661,-500L685,-519Z" fill="url(#w154)" shape-rendering="crispEdges"/><path d="M1230.5,197.3L680,-514L704,-533Z" fill="url(#w155)" shape-rendering="crispEdges"/><path d="M1230.5,197.3L699,-529L724,-546Z" fill="url(#w156)" shape-rendering="crispEdges"/><path d="M1230.5,197.3L718,-542L743,-559Z" fill="url(#w157)" shape-rendering="crispEdges"/><path d="M1230.5,197.3L737,-556L763,-572Z" fill="url(#w158)" shape-rendering="crispEdges"/><path d="M1230.5,197.3L757,-568L784,-584Z" fill="url(#w159)" shape-rendering="crispEdges"/><path d="M1230.5,197.3L777,-580L804,-595Z" fill="url(#w160)" shape-rendering="crispEdges"/><path d="M1230.5,197.3L798,-592L825,-606Z" fill="url(#w161)" shape-rendering="crispEdges"/><path d="M1230.5,197.3L819,-603L846,-617Z" fill="url(#w162)" shape-rendering="crispEdges"/><path d="M1230.5,197.3L840,-613L868,-626Z" fill="url(#w163)" shape-rendering="crispEdges"/><path d="M1230.5,197.3L861,-623L889,-636Z" fill="url(#w164)" shape-rendering="crispEdges"/><path d="M1230.5,197.3L883,-633L911,-644Z" fill="url(#w165)" shape-rendering="crispEdges"/><path d="M1230.5,197.3L905,-642L933,-652Z" fill="url(#w166)" shape-rendering="crispEdges"/><path d="M1230.5,197.3L927,-650L956,-660Z" fill="url(#w167)" shape-rendering="crispEdges"/><path d="M1230.5,197.3L949,-658L978,-667Z" fill="url(#w168)" shape-rendering="crispEdges"/><path d="M1230.5,197.3L971,-665L1001,-673Z" fill="url(#w169)" shape-rendering="crispEdges"/><path d="M1230.5,197.3L994,-671L1024,-679Z" fill="url(#w170)" shape-rendering="crispEdges"/><path d="M1230.5,197.3L1017,-677L1047,-684Z" fill="url(#w171)" shape-rendering="crispEdges"/><path d="M1230.5,197.3L1040,-682L1070,-688Z" fill="url(#w172)" shape-rendering="crispEdges"/><path d="M1230.5,197.3L1063,-687L1093,-692Z" fill="url(#w173)" shape-rendering="crispEdges"/><path d="M1230.5,197.3L1086,-691L1117,-695Z" fill="url(#w174)" shape-rendering="crispEdges"/><path d="M1230.5,197.3L1109,-694L1140,-698Z" fill="url(#w175)" shape-rendering="crispEdges"/><path d="M1230.5,197.3L1133,-697L1163,-700Z" fill="url(#w176)" shape-rendering="crispEdges"/><path d="M1230.5,197.3L1156,-700L1187,-702Z" fill="url(#w177)" shape-rendering="crispEdges"/><path d="M1230.5,197.3L1180,-701L1210,-702Z" fill="url(#w178)" shape-rendering="crispEdges"/><path d="M1230.5,197.3L1203,-702L1234,-703Z" fill="url(#w179)" shape-rendering="crispEdges"/><path d="M1230.5,197.3L1227,-703L1258,-702Z" fill="url(#w180)" shape-rendering="crispEdges"/><path d="M1230.5,197.3L1250,-702L1281,-701Z" fill="url(#w181)" shape-rendering="crispEdges"/><path d="M1230.5,197.3L1274,-702L1305,-700Z" fill="url(#w182)" shape-rendering="crispEdges"/><path d="M1230.5,197.3L1297,-700L1328,-697Z" fill="url(#w183)" shape-rendering="crispEdges"/><path d="M1230.5,197.3L1321,-698L1351,-694Z" fill="url(#w184)" shape-rendering="crispEdges"/><path d="M1230.5,197.3L1344,-695L1375,-691Z" fill="url(#w185)" shape-rendering="crispEdges"/><path d="M1230.5,197.3L1368,-692L1398,-687Z" fill="url(#w186)" shape-rendering="crispEdges"/><path d="M1230.5,197.3L1391,-688L1421,-682Z" fill="url(#w187)" shape-rendering="crispEdges"/><path d="M1230.5,197.3L1414,-684L1444,-677Z" fill="url(#w188)" shape-rendering="crispEdges"/><path d="M1230.5,197.3L1437,-679L1467,-671Z" fill="url(#w189)" shape-rendering="crispEdges"/><path d="M1230.5,197.3L1460,-673L1490,-665Z" fill="url(#w190)" shape-rendering="crispEdges"/><path d="M1230.5,197.3L1483,-667L1512,-658Z" fill="url(#w191)" shape-rendering="crispEdges"/><path d="M1230.5,197.3L1505,-660L1534,-650Z" fill="url(#w192)" shape-rendering="crispEdges"/><path d="M1230.5,197.3L1527,-652L1556,-642Z" fill="url(#w193)" shape-rendering="crispEdges"/><path d="M1230.5,197.3L1550,-644L1578,-633Z" fill="url(#w194)" shape-rendering="crispEdges"/><path d="M1230.5,197.3L1572,-636L1600,-623Z" fill="url(#w195)" shape-rendering="crispEdges"/><path d="M1230.5,197.3L1593,-626L1621,-613Z" fill="url(#w196)" shape-rendering="crispEdges"/><path d="M1230.5,197.3L1615,-617L1642,-603Z" fill="url(#w197)" shape-rendering="crispEdges"/><path d="M1230.5,197.3L1636,-606L1663,-592Z" fill="url(#w198)" shape-rendering="crispEdges"/><path d="M1230.5,197.3L1657,-595L1684,-580Z" fill="url(#w199)" shape-rendering="crispEdges"/><path d="M1230.5,197.3L1677,-584L1704,-568Z" fill="url(#w200)" shape-rendering="crispEdges"/><path d="M1230.5,197.3L1698,-572L1724,-556Z" fill="url(#w201)" shape-rendering="crispEdges"/><path d="M1230.5,197.3L1718,-559L1743,-542Z" fill="url(#w202)" shape-rendering="crispEdges"/><path d="M1230.5,197.3L1737,-546L1762,-529Z" fill="url(#w203)" shape-rendering="crispEdges"/><path d="M1230.5,197.3L1757,-533L1781,-514Z" fill="url(#w204)" shape-rendering="crispEdges"/><path d="M1230.5,197.3L1775,-519L1800,-500Z" fill="url(#w205)" shape-rendering="crispEdges"/><path d="M1230.5,197.3L1794,-504L1818,-485Z" fill="url(#w206)" shape-rendering="crispEdges"/><path d="M1230.5,197.3L1812,-489L1835,-469Z" fill="url(#w207)" shape-rendering="crispEdges"/><path d="M1230.5,197.3L1830,-474L1853,-453Z" fill="url(#w208)" shape-rendering="crispEdges"/><path d="M1230.5,197.3L1847,-458L1869,-437Z" fill="url(#w209)" shape-rendering="crispEdges"/><path d="M1230.5,197.3L1864,-442L1886,-420Z" fill="url(#w210)" shape-rendering="crispEdges"/><path d="M1230.5,197.3L1881,-425L1902,-402Z" fill="url(#w211)" shape-rendering="crispEdges"/><path d="M1230.5,197.3L1897,-408L1917,-384Z" fill="url(#w212)" shape-rendering="crispEdges"/><path d="M1230.5,197.3L1912,-390L1932,-366Z" fill="url(#w213)" shape-rendering="crispEdges"/><path d="M1230.5,197.3L1928,-372L1947,-348Z" fill="url(#w214)" shape-rendering="crispEdges"/><path d="M1230.5,197.3L1942,-353L1961,-329Z" fill="url(#w215)" shape-rendering="crispEdges"/><path d="M1230.5,197.3L1956,-335L1974,-309Z" fill="url(#w216)" shape-rendering="crispEdges"/><path d="M1230.5,197.3L1970,-315L1987,-290Z" fill="url(#w217)" shape-rendering="crispEdges"/><path d="M1230.5,197.3L1983,-296L2000,-270Z" fill="url(#w218)" shape-rendering="crispEdges"/><path d="M1230.5,197.3L1996,-276L2012,-250Z" fill="url(#w219)" shape-rendering="crispEdges"/><path d="M1230.5,197.3L2008,-256L2023,-229Z" fill="url(#w220)" shape-rendering="crispEdges"/><path d="M1230.5,197.3L2020,-235L2034,-208Z" fill="url(#w221)" shape-rendering="crispEdges"/><path d="M1230.5,197.3L2031,-214L2044,-187Z" fill="url(#w222)" shape-rendering="crispEdges"/><path d="M1230.5,197.3L2041,-193L2054,-165Z" fill="url(#w223)" shape-rendering="crispEdges"/><path d="M1230.5,197.3L2051,-172L2063,-144Z" fill="url(#w224)" shape-rendering="crispEdges"/><path d="M1230.5,197.3L2061,-150L2072,-122Z" fill="url(#w225)" shape-rendering="crispEdges"/><path d="M1230.5,197.3L2069,-129L2080,-100Z" fill="url(#w226)" shape-rendering="crispEdges"/><path d="M1230.5,197.3L2078,-106L2088,-77Z" fill="url(#w227)" shape-rendering="crispEdges"/><path d="M1230.5,197.3L2085,-84L2094,-55Z" fill="url(#w228)" shape-rendering="crispEdges"/><path d="M1230.5,197.3L2092,-62L2101,-32Z" fill="url(#w229)" shape-rendering="crispEdges"/><path d="M1230.5,197.3L2099,-39L2106,-9Z" fill="url(#w230)" shape-rendering="crispEdges"/><path d="M1230.5,197.3L2105,-16L2112,14Z" fill="url(#w231)" shape-rendering="crispEdges"/><path d="M1230.5,197.3L2110,7L2116,37Z" fill="url(#w232)" shape-rendering="crispEdges"/><path d="M1230.5,197.3L2115,30L2120,60Z" fill="url(#w233)" shape-rendering="crispEdges"/><path d="M1230.5,197.3L2119,53L2123,83Z" fill="url(#w234)" shape-rendering="crispEdges"/><path d="M1230.5,197.3L2122,76L2126,107Z" fill="url(#w235)" shape-rendering="crispEdges"/><path d="M1230.5,197.3L2125,100L2128,130Z" fill="url(#w236)" shape-rendering="crispEdges"/><path d="M1230.5,197.3L2127,123L2129,154Z" fill="url(#w237)" shape-rendering="crispEdges"/><path d="M1230.5,197.3L2129,147L2130,177Z" fill="url(#w238)" shape-rendering="crispEdges"/><path d="M1230.5,197.3L2130,170L2130,201Z" fill="url(#w239)" shape-rendering="crispEdges"/></g>
<path d="M1293.30,566.83 L1293.28,566.82 L1293.25,566.82 L1293.22,566.81 L1293.19,566.81 L1293.15,566.81 L1293.12,566.83 L1293.08,566.86 L1293.05,566.91 L1293.01,566.96 L1292.97,567.02 L1292.93,567.06 L1292.88,567.09 L1292.83,567.11 L1292.78,567.10 L1292.72,567.10 L1292.66,567.09 L1292.59,567.08 L1292.53,567.10 L1292.47,567.13 L1292.40,567.18 L1292.34,567.23 L1292.27,567.29 L1292.20,567.33 L1292.12,567.37 L1292.04,567.38 L1291.96,567.39 L1291.87,567.38 L1291.78,567.38 L1291.69,567.37 L1291.59,567.37 L1291.48,567.37 L1291.37,567.37 L1291.26,567.37 L1291.14,567.37 L1291.01,567.37 L1290.88,567.37 L1290.75,567.38 L1290.62,567.40 L1290.49,567.42 L1290.35,567.43 L1290.19,567.42 L1289.99,567.38 L1289.78,567.30 L1289.56,567.21 L1289.31,567.10 L1289.04,566.96 L1288.74,566.79 L1288.40,566.59 L1288.02,566.35 L1287.60,566.09 L1287.15,565.80 L1286.67,565.48 L1286.17,565.13 L1285.64,564.75 L1285.09,564.35 L1284.53,563.93 L1283.94,563.48 L1283.32,563.00 L1282.65,562.47 L1281.92,561.89 L1281.13,561.27 L1280.30,560.61 L1279.42,559.90 L1278.49,559.15 L1277.53,558.36 L1276.53,557.54 L1275.50,556.67 L1274.44,555.77 L1273.34,554.82 L1272.19,553.84 L1271.00,552.82 L1269.74,551.76 L1268.45,550.68 L1267.12,549.57 L1265.73,548.43 L1264.29,547.24 L1262.77,545.99 L1261.16,544.67 L1259.47,543.28 L1257.69,541.83 L1255.84,540.33 L1253.92,538.76 L1251.94,537.14 L1249.90,535.45 L1247.81,533.73 L1245.67,531.97 L1243.47,530.16 L1241.19,528.26 L1238.82,526.26 L1236.36,524.14 L1233.80,521.91 L1231.16,519.61 L1228.44,517.20 L1225.63,514.67 L1222.72,511.99 L1219.72,509.14 L1216.66,506.20 L1213.55,503.19 L1210.35,500.04 L1207.01,496.66 L1203.49,492.95 L1199.75,488.83 L1195.76,484.31 L1191.57,479.48 L1187.20,474.32 L1182.67,468.84 L1178.01,463.03 L1173.24,456.90 L1168.33,450.42 L1163.26,443.60 L1158.06,436.46 L1152.75,429.01 L1147.37,421.26 L1141.95,413.22 L1136.43,404.83 L1130.78,396.06 L1125.06,386.99 L1119.32,377.71 L1113.61,368.30 L1108.00,358.86 L1102.40,349.29 L1096.75,339.51 L1091.13,329.60 L1085.64,319.67 L1080.34,309.79 L1075.32,300.08 L1070.56,290.44 L1065.98,280.77 L1061.60,271.16 L1057.43,261.72 L1053.49,252.51 L1049.79,243.65 L1046.33,235.06 L1043.10,226.68 L1040.09,218.54 L1037.32,210.69 L1034.77,203.19 L1032.46,196.07 L1030.41,189.34 L1028.60,182.98 L1027.03,176.96 L1025.67,171.25 L1024.50,165.84 L1023.50,160.71 L1022.68,155.90 L1022.07,151.43 L1021.64,147.25 L1021.39,143.33 L1021.29,139.63 L1021.33,136.09 L1021.52,132.76 L1021.88,129.65 L1022.39,126.77 L1023.05,124.07 L1023.84,121.55 L1024.74,119.18 L1025.79,116.97 L1026.98,114.94 L1028.31,113.09 L1029.74,111.40 L1031.28,109.85 L1032.88,108.44 L1034.58,107.18 L1036.40,106.10 L1038.30,105.16 L1040.28,104.34 L1042.33,103.61 L1044.42,102.96 L1046.57,102.41 L1048.79,101.97 L1051.07,101.64 L1053.40,101.37 L1055.76,101.14 L1058.15,100.94 L1060.57,100.76 L1063.04,100.63 L1065.54,100.55 L1068.06,100.49 L1070.59,100.46 L1073.11,100.44 L1075.63,100.42 L1078.14,100.43 L1080.66,100.45 L1083.19,100.50 L1085.74,100.55 L1088.32,100.62 L1090.91,100.71 L1093.51,100.81 L1096.13,100.93 L1098.77,101.06 L1101.45,101.21 L1104.17,101.37 L1106.93,101.54 L1109.72,101.72 L1112.55,101.92 L1115.41,102.13 L1118.31,102.36 L1121.26,102.60 L1124.25,102.84 L1127.27,103.11 L1130.34,103.38 L1133.45,103.67 L1136.61,103.96 L1139.83,104.27 L1143.10,104.58 L1146.41,104.91 L1149.77,105.25 L1153.20,105.60 L1156.68,105.96 L1160.23,106.33 L1163.84,106.70 L1167.52,107.09 L1171.25,107.49 L1175.05,107.90 L1178.92,108.32 L1182.85,108.75 L1186.85,109.19 L1190.91,109.64 L1195.04,110.10 L1199.24,110.57 L1203.51,111.05 L1207.86,111.54 L1212.29,112.03 L1216.80,112.54 L1221.38,113.06 L1226.03,113.58 L1230.76,114.11 L1235.56,114.66 L1240.45,115.22 L1245.40,115.78 L1250.44,116.36 L1255.55,116.94 L1260.73,117.54 L1266.00,118.14 L1271.34,118.76 L1276.76,119.38 L1282.26,120.01 L1287.83,120.65 L1293.48,121.30 L1299.20,121.96 L1304.99,122.63 L1310.86,123.30 L1316.80,123.98 L1322.81,124.68 L1328.88,125.37 L1335.00,126.07 L1341.18,126.78 L1347.43,127.50 L1353.74,128.22 L1360.10,128.94 L1366.48,129.67 L1372.88,130.41 L1379.32,131.15 L1385.81,131.90 L1392.34,132.65 L1398.86,133.41 L1405.36,134.15 L1411.78,134.90 L1418.15,135.63 L1424.48,136.36 L1430.78,137.08 L1437.05,137.80 L1443.29,138.51 L1449.50,139.22 L1455.72,139.94 L1461.94,140.65 L1468.13,141.36 L1474.27,142.07 L1480.30,142.76 L1486.21,143.44 L1492.00,144.10 L1497.69,144.74 L1503.30,145.38 L1508.80,146.00 L1514.19,146.62 L1519.47,147.22 L1524.64,147.81 L1529.71,148.40 L1534.68,148.97 L1539.53,149.53 L1544.26,150.08 L1548.86,150.61 L1553.33,151.12 L1557.67,151.62 L1561.89,152.11 L1566.00,152.59 L1569.99,153.04 L1573.87,153.49 L1577.64,153.92 L1581.28,154.34 L1584.80,154.74 L1588.23,155.13 L1591.56,155.50 L1594.81,155.88 L1597.98,156.24 L1601.03,156.59 L1604.00,156.93 L1606.88,157.27 L1609.71,157.59 L1612.48,157.91 L1615.19,158.22 L1617.84,158.53 L1620.43,158.83 L1622.95,159.12 L1625.40,159.40 L1627.79,159.68 L1630.11,159.94 L1632.37,160.21 L1634.56,160.46 L1636.69,160.70 L1638.75,160.94 L1640.73,161.17 L1642.65,161.39 L1644.49,161.59 L1646.27,161.79 L1647.98,161.98 L1649.62,162.17 L1651.20,162.34 L1652.66,162.51 L1653.98,162.66 L1655.23,162.81 L1656.49,162.95 L1657.83,163.11 L1659.33,163.28 L1661.06,163.48 L1663.00,163.70 L1665.01,163.94 L1666.99,164.16 L1668.82,164.37 L1670.39,164.55 L1671.66,164.70 L1672.72,164.82 L1673.64,164.93 L1674.46,165.02 L1675.23,165.11 L1676.01,165.20 L1676.77,165.29 L1677.47,165.37 L1678.12,165.45 L1678.74,165.52 L1679.36,165.59 L1679.99,165.66 L1680.67,165.74 L1681.39,165.82 L1682.10,165.90 L1682.76,165.98 L1683.31,166.04 L1683.71,166.09 Z M1548.40,148.60 L1124.40,106.40 L1206.20,450.70 Z" fill="#000" fill-opacity="0.40" fill-rule="evenodd"/>
</g>
<rect x="1019.5" y="88.5" width="639.8" height="491.8" fill="none" stroke="#8e8e8e" stroke-width="1.3"/>
<rect x="1019.10" y="580.3" width="1.5" height="6" fill="#d8d8d8"/>
<text x="1015.64" y="601.80" font-size="13.37" textLength="8.33" lengthAdjust="spacingAndGlyphs" fill="#dcdcdc" style="" stroke="#dcdcdc" stroke-width="0.3">0</text>
<rect x="1072.35" y="580.3" width="1.5" height="6" fill="#d8d8d8"/>
<text x="1058.49" y="601.80" font-size="13.37" textLength="29.15" lengthAdjust="spacingAndGlyphs" fill="#dcdcdc" style="" stroke="#dcdcdc" stroke-width="0.3">0,05</text>
<rect x="1125.60" y="580.3" width="1.5" height="6" fill="#d8d8d8"/>
<text x="1115.89" y="601.80" font-size="13.37" textLength="20.82" lengthAdjust="spacingAndGlyphs" fill="#dcdcdc" style="" stroke="#dcdcdc" stroke-width="0.3">0,1</text>
<rect x="1178.85" y="580.3" width="1.5" height="6" fill="#d8d8d8"/>
<text x="1164.99" y="601.80" font-size="13.37" textLength="29.15" lengthAdjust="spacingAndGlyphs" fill="#dcdcdc" style="" stroke="#dcdcdc" stroke-width="0.3">0,15</text>
<rect x="1232.10" y="580.3" width="1.5" height="6" fill="#d8d8d8"/>
<text x="1222.39" y="601.80" font-size="13.37" textLength="20.82" lengthAdjust="spacingAndGlyphs" fill="#dcdcdc" style="" stroke="#dcdcdc" stroke-width="0.3">0,2</text>
<rect x="1285.35" y="580.3" width="1.5" height="6" fill="#d8d8d8"/>
<text x="1271.49" y="601.80" font-size="13.37" textLength="29.15" lengthAdjust="spacingAndGlyphs" fill="#dcdcdc" style="" stroke="#dcdcdc" stroke-width="0.3">0,25</text>
<rect x="1338.60" y="580.3" width="1.5" height="6" fill="#d8d8d8"/>
<text x="1328.89" y="601.80" font-size="13.37" textLength="20.82" lengthAdjust="spacingAndGlyphs" fill="#dcdcdc" style="" stroke="#dcdcdc" stroke-width="0.3">0,3</text>
<rect x="1391.85" y="580.3" width="1.5" height="6" fill="#d8d8d8"/>
<text x="1377.99" y="601.80" font-size="13.37" textLength="29.15" lengthAdjust="spacingAndGlyphs" fill="#dcdcdc" style="" stroke="#dcdcdc" stroke-width="0.3">0,35</text>
<rect x="1445.10" y="580.3" width="1.5" height="6" fill="#d8d8d8"/>
<text x="1435.39" y="601.80" font-size="13.37" textLength="20.82" lengthAdjust="spacingAndGlyphs" fill="#dcdcdc" style="" stroke="#dcdcdc" stroke-width="0.3">0,4</text>
<rect x="1498.35" y="580.3" width="1.5" height="6" fill="#d8d8d8"/>
<text x="1484.49" y="601.80" font-size="13.37" textLength="29.15" lengthAdjust="spacingAndGlyphs" fill="#dcdcdc" style="" stroke="#dcdcdc" stroke-width="0.3">0,45</text>
<rect x="1551.60" y="580.3" width="1.5" height="6" fill="#d8d8d8"/>
<text x="1541.89" y="601.80" font-size="13.37" textLength="20.82" lengthAdjust="spacingAndGlyphs" fill="#dcdcdc" style="" stroke="#dcdcdc" stroke-width="0.3">0,5</text>
<rect x="1604.85" y="580.3" width="1.5" height="6" fill="#d8d8d8"/>
<text x="1590.99" y="601.80" font-size="13.37" textLength="29.15" lengthAdjust="spacingAndGlyphs" fill="#dcdcdc" style="" stroke="#dcdcdc" stroke-width="0.3">0,55</text>
<rect x="1014.00" y="579.80" width="5.5" height="1.3" fill="#c8c8c8"/>
<text x="1005.19" y="585.80" font-size="13.37" textLength="8.33" lengthAdjust="spacingAndGlyphs" fill="#dcdcdc" style="" stroke="#dcdcdc" stroke-width="0.3">0</text>
<rect x="1014.00" y="538.90" width="5.5" height="1.3" fill="#c8c8c8"/>
<text x="984.37" y="544.90" font-size="13.37" textLength="29.15" lengthAdjust="spacingAndGlyphs" fill="#dcdcdc" style="" stroke="#dcdcdc" stroke-width="0.3">0,05</text>
<rect x="1014.00" y="498.00" width="5.5" height="1.3" fill="#c8c8c8"/>
<text x="992.68" y="504.00" font-size="13.37" textLength="20.82" lengthAdjust="spacingAndGlyphs" fill="#dcdcdc" style="" stroke="#dcdcdc" stroke-width="0.3">0,1</text>
<rect x="1014.00" y="457.10" width="5.5" height="1.3" fill="#c8c8c8"/>
<text x="984.37" y="463.10" font-size="13.37" textLength="29.15" lengthAdjust="spacingAndGlyphs" fill="#dcdcdc" style="" stroke="#dcdcdc" stroke-width="0.3">0,15</text>
<rect x="1014.00" y="416.20" width="5.5" height="1.3" fill="#c8c8c8"/>
<text x="992.68" y="422.20" font-size="13.37" textLength="20.82" lengthAdjust="spacingAndGlyphs" fill="#dcdcdc" style="" stroke="#dcdcdc" stroke-width="0.3">0,2</text>
<rect x="1014.00" y="375.30" width="5.5" height="1.3" fill="#c8c8c8"/>
<text x="984.37" y="381.30" font-size="13.37" textLength="29.15" lengthAdjust="spacingAndGlyphs" fill="#dcdcdc" style="" stroke="#dcdcdc" stroke-width="0.3">0,25</text>
<rect x="1014.00" y="334.40" width="5.5" height="1.3" fill="#c8c8c8"/>
<text x="992.68" y="340.40" font-size="13.37" textLength="20.82" lengthAdjust="spacingAndGlyphs" fill="#dcdcdc" style="" stroke="#dcdcdc" stroke-width="0.3">0,3</text>
<rect x="1014.00" y="293.50" width="5.5" height="1.3" fill="#c8c8c8"/>
<text x="984.37" y="299.50" font-size="13.37" textLength="29.15" lengthAdjust="spacingAndGlyphs" fill="#dcdcdc" style="" stroke="#dcdcdc" stroke-width="0.3">0,35</text>
<rect x="1014.00" y="252.60" width="5.5" height="1.3" fill="#c8c8c8"/>
<text x="992.68" y="258.60" font-size="13.37" textLength="20.82" lengthAdjust="spacingAndGlyphs" fill="#dcdcdc" style="" stroke="#dcdcdc" stroke-width="0.3">0,4</text>
<rect x="1014.00" y="211.70" width="5.5" height="1.3" fill="#c8c8c8"/>
<text x="984.37" y="217.70" font-size="13.37" textLength="29.15" lengthAdjust="spacingAndGlyphs" fill="#dcdcdc" style="" stroke="#dcdcdc" stroke-width="0.3">0,45</text>
<rect x="1014.00" y="170.80" width="5.5" height="1.3" fill="#c8c8c8"/>
<text x="992.68" y="176.80" font-size="13.37" textLength="20.82" lengthAdjust="spacingAndGlyphs" fill="#dcdcdc" style="" stroke="#dcdcdc" stroke-width="0.3">0,5</text>
<rect x="1014.00" y="129.90" width="5.5" height="1.3" fill="#c8c8c8"/>
<text x="984.37" y="135.90" font-size="13.37" textLength="29.15" lengthAdjust="spacingAndGlyphs" fill="#dcdcdc" style="" stroke="#dcdcdc" stroke-width="0.3">0,55</text>
<rect x="1118.1" y="100.0" width="12.6" height="12.6" fill="none" stroke="#ffffff" stroke-opacity=".82" stroke-width="2"/>
<rect x="1132.1" y="109.9" width="12.6" height="12.6" fill="none" stroke="#ffffff" stroke-opacity=".82" stroke-width="2"/>
<rect x="1147.2" y="123.9" width="12.6" height="12.6" fill="none" stroke="#ffffff" stroke-opacity=".82" stroke-width="2"/>
<rect x="1167.2" y="142.1" width="12.6" height="12.6" fill="none" stroke="#ffffff" stroke-opacity=".82" stroke-width="2"/>
<rect x="1192.0" y="162.0" width="12.6" height="12.6" fill="none" stroke="#ffffff" stroke-opacity=".82" stroke-width="2"/>
<rect x="1231.2" y="110.0" width="12.6" height="12.6" fill="none" stroke="#ffffff" stroke-opacity=".82" stroke-width="2"/>
<rect x="1230.0" y="123.3" width="12.6" height="12.6" fill="none" stroke="#ffffff" stroke-opacity=".82" stroke-width="2"/>
<rect x="1229.0" y="137.7" width="12.6" height="12.6" fill="none" stroke="#ffffff" stroke-opacity=".82" stroke-width="2"/>
<rect x="1227.5" y="153.2" width="12.6" height="12.6" fill="none" stroke="#ffffff" stroke-opacity=".82" stroke-width="2"/>
<rect x="1226.0" y="169.0" width="12.6" height="12.6" fill="none" stroke="#ffffff" stroke-opacity=".82" stroke-width="2"/>
<rect x="1142.2" y="202.0" width="12.6" height="12.6" fill="none" stroke="#ffffff" stroke-opacity=".82" stroke-width="2"/>
<rect x="1158.0" y="199.0" width="12.6" height="12.6" fill="none" stroke="#ffffff" stroke-opacity=".82" stroke-width="2"/>
<rect x="1174.0" y="196.0" width="12.6" height="12.6" fill="none" stroke="#ffffff" stroke-opacity=".82" stroke-width="2"/>
<rect x="1191.3" y="194.6" width="12.6" height="12.6" fill="none" stroke="#ffffff" stroke-opacity=".82" stroke-width="2"/>
<rect x="1207.2" y="192.1" width="12.6" height="12.6" fill="none" stroke="#ffffff" stroke-opacity=".82" stroke-width="2"/>
<rect x="1279.1" y="181.2" width="12.6" height="12.6" fill="none" stroke="#ffffff" stroke-opacity=".82" stroke-width="2"/>
<rect x="1338.0" y="173.3" width="12.6" height="12.6" fill="none" stroke="#ffffff" stroke-opacity=".82" stroke-width="2"/>
<rect x="1406.0" y="162.0" width="12.6" height="12.6" fill="none" stroke="#ffffff" stroke-opacity=".82" stroke-width="2"/>
<rect x="1470.9" y="153.2" width="12.6" height="12.6" fill="none" stroke="#ffffff" stroke-opacity=".82" stroke-width="2"/>
<rect x="1542.1" y="142.1" width="12.6" height="12.6" fill="none" stroke="#ffffff" stroke-opacity=".82" stroke-width="2"/>
<rect x="1242.2" y="204.2" width="12.6" height="12.6" fill="none" stroke="#ffffff" stroke-opacity=".82" stroke-width="2"/>
<rect x="1264.0" y="223.1" width="12.6" height="12.6" fill="none" stroke="#ffffff" stroke-opacity=".82" stroke-width="2"/>
<rect x="1291.1" y="247.1" width="12.6" height="12.6" fill="none" stroke="#ffffff" stroke-opacity=".82" stroke-width="2"/>
<rect x="1321.0" y="272.2" width="12.6" height="12.6" fill="none" stroke="#ffffff" stroke-opacity=".82" stroke-width="2"/>
<rect x="1358.8" y="304.1" width="12.6" height="12.6" fill="none" stroke="#ffffff" stroke-opacity=".82" stroke-width="2"/>
<rect x="1220.4" y="219.0" width="12.6" height="12.6" fill="none" stroke="#ffffff" stroke-opacity=".82" stroke-width="2"/>
<rect x="1218.0" y="257.4" width="12.6" height="12.6" fill="none" stroke="#ffffff" stroke-opacity=".82" stroke-width="2"/>
<rect x="1213.9" y="304.1" width="12.6" height="12.6" fill="none" stroke="#ffffff" stroke-opacity=".82" stroke-width="2"/>
<rect x="1207.1" y="365.2" width="12.6" height="12.6" fill="none" stroke="#ffffff" stroke-opacity=".82" stroke-width="2"/>
<rect x="1199.9" y="444.4" width="12.6" height="12.6" fill="none" stroke="#ffffff" stroke-opacity=".82" stroke-width="2"/>
<rect x="1222.6" y="188.4" width="13.6" height="13.6" fill="none" stroke="#000" stroke-width="2.1"/>
<circle cx="1228.4" cy="197.5" r="3.8" fill="#fff" stroke="#000" stroke-width="1.3"/>
<circle cx="1151.9" cy="116.8" r="4.2" fill="#25a025" stroke="#000" stroke-width="1.3"/>
<circle cx="1234.1" cy="124.9" r="4.2" fill="#b8b828" stroke="#000" stroke-width="1.3"/>
<circle cx="1232.5" cy="148.3" r="3.6" fill="#b8b870" stroke="#000" stroke-width="1.3"/>
<circle cx="1231.1" cy="162.9" r="4.2" fill="#b8b888" stroke="#000" stroke-width="1.3"/>
<circle cx="1167" cy="207.8" r="4.2" fill="#30b0b8" stroke="#000" stroke-width="1.3"/>
<circle cx="1179.5" cy="205" r="3.6" fill="#60b8b8" stroke="#000" stroke-width="1.3"/>
<circle cx="1190" cy="203.8" r="4.2" fill="#88b8b8" stroke="#000" stroke-width="1.3"/>
<circle cx="1215" cy="199.8" r="4.2" fill="#a8b4b4" stroke="#000" stroke-width="1.3"/>
<circle cx="1504.5" cy="149.2" r="3.6" fill="#b01818" stroke="#000" stroke-width="1.3"/>
<circle cx="1338" cy="314.4" r="3.6" fill="#a018a0" stroke="#000" stroke-width="1.3"/>
<circle cx="1202.8" cy="451.5" r="3.4" fill="#1818a0" stroke="#000" stroke-width="1.3"/>
<defs>
<linearGradient id="insb" gradientUnits="userSpaceOnUse" x1="1442" y1="430" x2="1652" y2="572"><stop offset="0" stop-color="#99ff00"/><stop offset=".45" stop-color="#ffff00"/><stop offset="1" stop-color="#ffb000"/></linearGradient>
<linearGradient id="insd" gradientUnits="userSpaceOnUse" x1="1442" y1="430" x2="1652" y2="572"><stop offset="0" stop-color="#5c9400"/><stop offset=".45" stop-color="#8c9000"/><stop offset="1" stop-color="#9a6e00"/></linearGradient>
<clipPath id="insclip"><rect x="1442.2" y="429.1" width="209.8" height="142.2"/></clipPath>
</defs>
<g clip-path="url(#insclip)">
<rect x="1441.5" y="428.4" width="211.2" height="143.6" fill="#252525"/>
<path d="M1441,428 H1531.4 Q1590,465 1653,510.4 V573 H1441 Z" fill="url(#insd)"/>
<path d="M1441,436.6 L1653,562.8 V573 H1441 Z" fill="url(#insb)"/>
<rect x="1539.6" y="492.4" width="13.4" height="13.4" fill="none" stroke="#fff" stroke-opacity=".85" stroke-width="2"/>
<circle cx="1477" cy="559.9" r="4.4" fill="#b8b820" stroke="#000" stroke-width="1.3"/>
</g>
<rect x="1441.5" y="428.4" width="211.2" height="143.6" fill="none" stroke="#9a9a9a" stroke-width="1.5"/>
<defs>
<linearGradient id="barbg" x1="0" y1="0" x2="0" y2="1"><stop offset="0" stop-color="#454545"/><stop offset="1" stop-color="#1e1e1e"/></linearGradient>
<linearGradient id="bbtn" x1="0" y1="0" x2="0" y2="1"><stop offset="0" stop-color="#aaaaaa"/><stop offset=".45" stop-color="#8a8a8a"/><stop offset="1" stop-color="#5c5c5c"/></linearGradient>
<linearGradient id="bsel" x1="0" y1="0" x2="0" y2="1"><stop offset="0" stop-color="#1a1a1a"/><stop offset="1" stop-color="#383838"/></linearGradient>
<linearGradient id="cbtn" x1="0" y1="0" x2="0" y2="1"><stop offset="0" stop-color="#b8b8b8"/><stop offset="1" stop-color="#7a7a7a"/></linearGradient>
<linearGradient id="cbtn2" x1="0" y1="0" x2="0" y2="1"><stop offset="0" stop-color="#a0a0a0"/><stop offset="1" stop-color="#707070"/></linearGradient>
<linearGradient id="circ" x1="0" y1="0" x2="0" y2="1"><stop offset="0" stop-color="#707070"/><stop offset="1" stop-color="#b4b4b4"/></linearGradient>
<linearGradient id="recg" x1="0" y1="0" x2="0" y2="1"><stop offset="0" stop-color="#c4c4c4"/><stop offset=".5" stop-color="#b0b0b0"/><stop offset=".5" stop-color="#8e8e8e"/><stop offset="1" stop-color="#a8a8a8"/></linearGradient>
</defs>
<defs><linearGradient id="redge" x1="0" y1="0" x2="1" y2="0"><stop offset="0" stop-color="#000" stop-opacity="0"/><stop offset=".6" stop-color="#000" stop-opacity=".45"/><stop offset="1" stop-color="#000" stop-opacity=".6"/></linearGradient></defs>
<rect x="1662" y="37" width="8" height="831" fill="url(#redge)"/>
<rect x="0" y="859.5" width="1665" height="9" fill="#2e2e2e"/>
<rect x="0" y="867.5" width="1670" height="79.5" fill="url(#barbg)"/>
<rect x="0" y="944.5" width="1670" height="2.5" fill="#1c1c1c"/>
<rect x="2.2" y="868.6" width="56.6" height="75.7" rx="4" fill="url(#bbtn)"/>
<circle cx="30.3" cy="879.8" r="9.2" fill="url(#circ)" opacity=".85"/>
<path d="M25.2,882.6 H35.4 L30.3,877.4 Z" fill="#2a2a2a"/>
<rect x="8.3" y="901.3" width="44" height="37.2" rx="3.5" fill="#ffff00" stroke="#b8b820" stroke-width="0.8"/>
<rect x="66.1" y="868.6" width="187.5" height="75.7" rx="3.5" fill="url(#bbtn)"/>
<rect x="72.7" y="874.9" width="174.3" height="45.1" rx="4.5" fill="#c2c3a2" stroke="#8c8c70" stroke-width="1"/>
<text x="146.19" y="938.60" font-size="13.66" textLength="27.35" lengthAdjust="spacingAndGlyphs" fill="#2c2c2c" style="font-weight:bold;">20%</text>
<rect x="256.2" y="868.6" width="187.3" height="75.7" rx="3.5" fill="url(#bbtn)"/>
<rect x="262.8" y="874.9" width="174.1" height="45.1" rx="4.5" fill="#c3c386" stroke="#8c8c70" stroke-width="1"/>
<text x="336.19" y="938.60" font-size="13.66" textLength="27.35" lengthAdjust="spacingAndGlyphs" fill="#2c2c2c" style="font-weight:bold;">40%</text>
<rect x="446.3" y="868.6" width="187.3" height="75.7" rx="3.5" fill="url(#bbtn)"/>
<rect x="452.9" y="874.9" width="174.1" height="45.1" rx="4.5" fill="#c2c366" stroke="#8c8c70" stroke-width="1"/>
<text x="526.29" y="938.60" font-size="13.66" textLength="27.35" lengthAdjust="spacingAndGlyphs" fill="#2c2c2c" style="font-weight:bold;">60%</text>
<rect x="636.4" y="868.6" width="187.3" height="75.7" rx="3.5" fill="url(#bbtn)"/>
<rect x="643.0" y="874.9" width="174.1" height="45.1" rx="4.5" fill="#c3c344" stroke="#8c8c70" stroke-width="1"/>
<text x="716.39" y="938.60" font-size="13.66" textLength="27.35" lengthAdjust="spacingAndGlyphs" fill="#2c2c2c" style="font-weight:bold;">80%</text>
<rect x="826.4" y="869" width="186.6" height="75" rx="3.5" fill="url(#bsel)"/>
<rect x="832.4" y="874.5" width="175.1" height="45.5" rx="4.5" fill="#c4c400" stroke="#9a9a00" stroke-width="0.8"/>
<text x="901.20" y="939.40" font-size="14.53" textLength="37.18" lengthAdjust="spacingAndGlyphs" fill="#ffffff" style="font-weight:bold;">100%</text>
<rect x="1267" y="868.6" width="60.5" height="76" rx="4" fill="url(#cbtn2)"/>
<path d="M1271,868.6 H1323.5 Q1327.5,868.6 1327.5,872.6 V891.3 H1267 V872.6 Q1267,868.6 1271,868.6 Z" fill="url(#cbtn)"/>
<rect x="1267" y="890.6" width="60.5" height="1.4" fill="#404040"/>
<circle cx="1297.4" cy="880" r="9.5" fill="url(#circ)" opacity=".8"/>
<path d="M1291.8,883 H1303 L1297.4,877.3 Z" fill="#333"/>
<rect x="1279.5" y="900.6" width="35.6" height="35.5" rx="5" fill="url(#recg)" stroke="#222" stroke-width="3"/>
<rect x="1288.7" y="909.9" width="17.4" height="17.4" fill="#000"/>
<rect x="1327.7" y="868.6" width="342.3" height="37.7" fill="url(#cbtn)"/>
<rect x="1327.7" y="907.3" width="342.3" height="37.3" fill="url(#cbtn)"/>
<rect x="1327.2" y="868.6" width="1.2" height="76" fill="#3a3a3a"/>
<rect x="1327.7" y="905.6" width="342.3" height="1.8" fill="#2a2a2a"/>
<rect x="1385.7" y="868.6" width="1.3" height="37.5" fill="#2e2e2e"/>
<rect x="1441.8" y="868.6" width="1.3" height="37.5" fill="#2e2e2e"/>
<rect x="1498.4" y="868.6" width="1.3" height="37.5" fill="#2e2e2e"/>
<rect x="1554.8" y="868.6" width="1.3" height="37.5" fill="#2e2e2e"/>
<rect x="1610.9" y="868.6" width="1.3" height="37.5" fill="#2e2e2e"/>
<rect x="1498.4" y="907" width="1.4" height="37.6" fill="#2e2e2e"/>
<rect x="1666.5" y="868" width="3.5" height="77" fill="#3a3a3a"/>
<circle cx="1357.2" cy="887.0" r="12.2" fill="url(#circ)" opacity=".75"/>
<circle cx="1414.5" cy="887.0" r="12.2" fill="url(#circ)" opacity=".75"/>
<circle cx="1470.6" cy="887.0" r="12.2" fill="url(#circ)" opacity=".75"/>
<circle cx="1527.0" cy="887.0" r="12.2" fill="url(#circ)" opacity=".75"/>
<circle cx="1583.2" cy="887.0" r="12.2" fill="url(#circ)" opacity=".75"/>
<circle cx="1640.8" cy="887.0" r="12.2" fill="url(#circ)" opacity=".75"/>
<rect x="1352.2" y="882.2" width="10.2" height="9.8" fill="#333"/>
<path d="M1411.1,882.3 L1421.3,888.2 L1411.1,894.2 Z" fill="#333"/>
<path d="M1466.3,881.6 H1464.2 V892.4 H1466.3 M1474.9,881.6 H1477 V892.4 H1474.9" fill="none" stroke="#333" stroke-width="1.8"/>
<rect x="1468.8" y="886.4" width="1.6" height="1.6" fill="#333"/><rect x="1471.0" y="886.4" width="1.6" height="1.6" fill="#333"/>
<path d="M1527,886.8 C1524.5,883.3 1519.5,883.3 1519.5,886.8 C1519.5,890.3 1524.5,890.3 1527,886.8 C1529.5,883.3 1534.5,883.3 1534.5,886.8 C1534.5,890.3 1529.5,890.3 1527,886.8 Z" fill="none" stroke="#333" stroke-width="2"/>
<path d="M1577.6,885.5 A6,6 0 0 1 1588.2,883.6 M1588.8,888.5 A6,6 0 0 1 1578.2,890.4" fill="none" stroke="#333" stroke-width="2"/>
<path d="M1589.8,880.2 V885.8 H1584.6 Z M1576.6,893.8 V888.2 H1581.8 Z" fill="#333"/>
<circle cx="1367.2" cy="926" r="12.2" fill="url(#circ)" opacity=".75"/>
<path d="M1368.5,921 L1364,926 L1368.5,931 M1373,921 L1368.5,926 L1373,931" fill="none" stroke="#333" stroke-width="1.6"/>
<circle cx="1634.2" cy="925.6" r="12.2" fill="url(#circ)" opacity=".75"/>
<path d="M1628.5,920.6 L1633,925.6 L1628.5,930.6 M1633,920.6 L1637.5,925.6 L1633,930.6" fill="none" stroke="#333" stroke-width="1.6"/>
<text x="1401.30" y="935.70" font-size="27.91" textLength="62.31" lengthAdjust="spacingAndGlyphs" fill="#383838" style="" stroke="#383838" stroke-width="1.1">Back</text>
<text x="1534.80" y="935.70" font-size="28.05" textLength="63.64" lengthAdjust="spacingAndGlyphs" fill="#383838" style="" stroke="#383838" stroke-width="1.1">Next</text>
</svg>
</body></html>
